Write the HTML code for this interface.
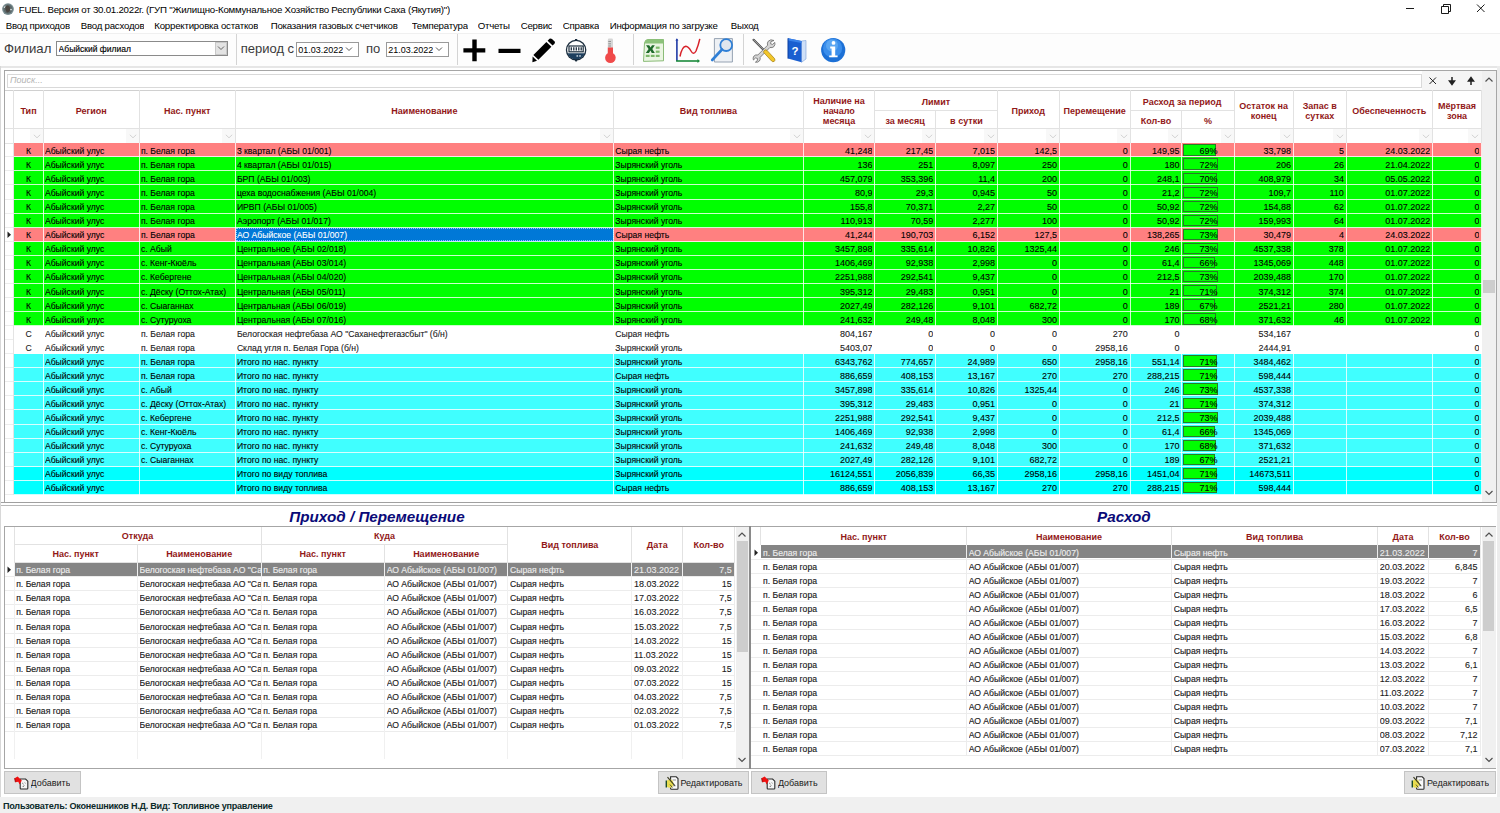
<!DOCTYPE html>
<html><head><meta charset="utf-8"><title>FUEL</title>
<style>
html,body{margin:0;padding:0;}
body{width:1500px;height:813px;overflow:hidden;position:relative;background:#fff;font-family:'Liberation Sans', sans-serif;}
div{box-sizing:content-box;}
svg{display:block}
</style></head><body>
<svg style="position:absolute;left:1px;top:2px" width="14" height="14" viewBox="0 0 14 14"><circle cx="7" cy="7.1" r="5.9" fill="#7a8e92"/><circle cx="7" cy="7.1" r="4.6" fill="#5d6a6c"/><path d="M4.5 4 Q7 3 8.6 4.6 L9.4 8 Q8.2 10.8 5.8 10.4 L4.4 7.6Z" fill="#4a4540"/><path d="M3.2 6 Q3.6 4.4 4.6 3.8" stroke="#e8f0f0" stroke-width="0.9" fill="none"/><circle cx="10" cy="7.6" r="0.8" fill="#e8f0f0"/></svg><div style="position:absolute;left:18.700px;top:4.200px;height:12.000px;line-height:12.000px;text-align:left;white-space:nowrap;overflow:hidden;font-size:9.7px;letter-spacing:-0.23px;color:#000;">FUEL. Версия от 30.01.2022г. (ГУП "Жилищно-Коммунальное Хозяйство Республики Саха (Якутия)")</div><svg style="position:absolute;left:1400px;top:0" width="100" height="18" viewBox="0 0 100 18"><path d="M6 8.5 H14" stroke="#000" stroke-width="0.9"/><path d="M41.5 6.5 H48.5 V13.5 H41.5 Z M43.5 6.5 V4.5 H50.5 V11.5 H48.5" fill="none" stroke="#000" stroke-width="0.9"/><path d="M77 4.5 L84.5 12 M84.5 4.5 L77 12" stroke="#000" stroke-width="0.9"/></svg><div style="position:absolute;left:5.700px;top:19.800px;height:12.000px;line-height:12.000px;text-align:left;white-space:nowrap;overflow:hidden;font-size:9.7px;letter-spacing:-0.23px;color:#000;">Ввод приходов</div><div style="position:absolute;left:80.700px;top:19.800px;height:12.000px;line-height:12.000px;text-align:left;white-space:nowrap;overflow:hidden;font-size:9.7px;letter-spacing:-0.23px;color:#000;">Ввод расходов</div><div style="position:absolute;left:154.300px;top:19.800px;height:12.000px;line-height:12.000px;text-align:left;white-space:nowrap;overflow:hidden;font-size:9.7px;letter-spacing:-0.23px;color:#000;">Корректировка остатков</div><div style="position:absolute;left:270.700px;top:19.800px;height:12.000px;line-height:12.000px;text-align:left;white-space:nowrap;overflow:hidden;font-size:9.7px;letter-spacing:-0.23px;color:#000;">Показания газовых счетчиков</div><div style="position:absolute;left:411.700px;top:19.800px;height:12.000px;line-height:12.000px;text-align:left;white-space:nowrap;overflow:hidden;font-size:9.7px;letter-spacing:-0.23px;color:#000;">Температура</div><div style="position:absolute;left:477.700px;top:19.800px;height:12.000px;line-height:12.000px;text-align:left;white-space:nowrap;overflow:hidden;font-size:9.7px;letter-spacing:-0.23px;color:#000;">Отчеты</div><div style="position:absolute;left:520.700px;top:19.800px;height:12.000px;line-height:12.000px;text-align:left;white-space:nowrap;overflow:hidden;font-size:9.7px;letter-spacing:-0.23px;color:#000;">Сервис</div><div style="position:absolute;left:562.700px;top:19.800px;height:12.000px;line-height:12.000px;text-align:left;white-space:nowrap;overflow:hidden;font-size:9.7px;letter-spacing:-0.23px;color:#000;">Справка</div><div style="position:absolute;left:609.700px;top:19.800px;height:12.000px;line-height:12.000px;text-align:left;white-space:nowrap;overflow:hidden;font-size:9.7px;letter-spacing:-0.23px;color:#000;">Информация по загрузке</div><div style="position:absolute;left:730.700px;top:19.800px;height:12.000px;line-height:12.000px;text-align:left;white-space:nowrap;overflow:hidden;font-size:9.7px;letter-spacing:-0.23px;color:#000;">Выход</div><div style="position:absolute;left:0.000px;top:33.000px;width:1500.000px;height:33.500px;background:#fdfdfd;border-top:1px solid #f0f0f0;box-sizing:border-box;"></div><div style="position:absolute;left:0.000px;top:65.500px;width:1500.000px;height:2.200px;background:#e6e6e6;"></div><div style="position:absolute;left:235.500px;top:34.000px;width:1.000px;height:31.000px;background:#d4d4d4;"></div><div style="position:absolute;left:456.700px;top:34.000px;width:1.000px;height:31.000px;background:#d4d4d4;"></div><div style="position:absolute;left:632.500px;top:34.000px;width:1.000px;height:31.000px;background:#d4d4d4;"></div><div style="position:absolute;left:743.200px;top:34.000px;width:1.000px;height:31.000px;background:#d4d4d4;"></div><div style="position:absolute;left:3.900px;top:42.300px;height:14.000px;line-height:14.000px;text-align:left;white-space:nowrap;overflow:hidden;font-size:13.2px;color:#3a3a3a;">Филиал</div><div style="position:absolute;left:56.400px;top:41.100px;width:172.000px;height:15.200px;border:1px solid #8a8a8a;background:#fff;box-sizing:border-box;"></div><div style="position:absolute;left:58.600px;top:42.000px;height:14.000px;line-height:14.000px;text-align:left;white-space:nowrap;overflow:hidden;font-size:8.5px;color:#000;-webkit-text-stroke:0.15px #000;">Абыйский филиал</div><div style="position:absolute;left:214.600px;top:42.300px;width:12.600px;height:13.000px;background:#e3e3e3;border:1px solid #c8c8c8;box-sizing:border-box;"></div><svg style="position:absolute;left:217px;top:45px" width="8" height="6"><path d="M1 1.5 L4 4.5 L7 1.5" fill="none" stroke="#555" stroke-width="0.9"/></svg><div style="position:absolute;left:240.700px;top:42.300px;height:14.000px;line-height:14.000px;text-align:left;white-space:nowrap;overflow:hidden;font-size:13px;color:#3a3a3a;">период с</div><div style="position:absolute;left:366.000px;top:42.300px;height:14.000px;line-height:14.000px;text-align:left;white-space:nowrap;overflow:hidden;font-size:13px;color:#3a3a3a;">по</div><div style="position:absolute;left:296.100px;top:41.600px;width:62.600px;height:15.800px;border:1px solid #9a9a9a;background:#fff;box-sizing:border-box;"></div><div style="position:absolute;left:298.300px;top:42.600px;height:14.000px;line-height:14.000px;text-align:left;white-space:nowrap;overflow:hidden;font-size:9px;color:#000;">01.03.2022</div><svg style="position:absolute;left:344.60px;top:46px" width="8" height="6"><path d="M1 1.5 L4 4.5 L7 1.5" fill="none" stroke="#444" stroke-width="0.9"/></svg><div style="position:absolute;left:386.100px;top:41.600px;width:62.600px;height:15.800px;border:1px solid #9a9a9a;background:#fff;box-sizing:border-box;"></div><div style="position:absolute;left:388.300px;top:42.600px;height:14.000px;line-height:14.000px;text-align:left;white-space:nowrap;overflow:hidden;font-size:9px;color:#000;">21.03.2022</div><svg style="position:absolute;left:434.60px;top:46px" width="8" height="6"><path d="M1 1.5 L4 4.5 L7 1.5" fill="none" stroke="#444" stroke-width="0.9"/></svg>
<svg style="position:absolute;left:463px;top:39px" width="23" height="23" viewBox="0 0 23 23"><path d="M9.3 0.6H13.7V9.2H22.3V13.6H13.7V22.2H9.3V13.6H0.4V9.2H9.3Z" fill="#000"/></svg>
<svg style="position:absolute;left:497.5px;top:47.5px" width="23" height="6" viewBox="0 0 23 6"><rect x="0.5" y="0.8" width="22" height="4.2" fill="#000"/></svg>
<svg style="position:absolute;left:532px;top:38px" width="24" height="25" viewBox="0 0 24 25"><path d="M17.5 0.8 Q18.8 0 20 1 L22.6 3.6 Q23.4 4.6 22.5 5.7 L20.6 7.6 L15.6 2.7Z" fill="#000"/><path d="M14.4 3.9 L19.4 8.8 L6.4 21.8 L1.4 16.9Z" fill="#000"/><path d="M0.6 18.4 L5 22.8 L0.4 24.2Z" fill="#000"/></svg>
<svg style="position:absolute;left:565px;top:39px" width="23" height="24" viewBox="0 0 23 24"><circle cx="11.1" cy="11.1" r="10.3" fill="#1b2d3d"/><rect x="9.9" y="-0.2" width="2.4" height="2" rx="1" fill="#1b2d3d"/><rect x="9.9" y="20.4" width="2.4" height="2.2" rx="1" fill="#1b2d3d"/><circle cx="11.1" cy="11.1" r="9" fill="#fff"/><path d="M2.6 14.2 H19.6 A9 9 0 0 1 2.6 14.2Z" fill="#1d3f5e"/><rect x="4" y="7" width="14.2" height="5.8" fill="#fff" stroke="#1b2d3d" stroke-width="1.2"/><path d="M6.3 8.2V11.6M8.8 8.2V11.6M11.3 8.2V11.6M13.8 8.2V11.6M16.2 8.2V11.6" stroke="#1b2d3d" stroke-width="1.3"/><rect x="11.5" y="16.3" width="1.6" height="1.3" fill="#e8eef2"/><rect x="14.2" y="16.3" width="1.6" height="1.3" fill="#e8eef2"/></svg>
<svg style="position:absolute;left:603px;top:37px" width="15" height="27" viewBox="0 0 15 27"><rect x="4.8" y="1.6" width="5.2" height="16" rx="1.4" fill="#d6d6d6"/><path d="M5.3 4.5H8M5.3 6.8H8M5.3 9H8" stroke="#777" stroke-width="0.7"/><rect x="4.8" y="10.5" width="5.2" height="9" fill="#ee4848"/><circle cx="7.4" cy="20.8" r="5.3" fill="#f04a4a"/></svg>
<svg style="position:absolute;left:641px;top:38px" width="25" height="25" viewBox="0 0 25 25"><path d="M3.5 5 Q4 1.6 7 1.5 L22.5 1.5 L22.5 22.8 L2.5 23.4Z" fill="#eaf5e2" stroke="#7fb46a" stroke-width="0.9"/><path d="M3.6 5.5 Q4 1.6 7 1.5 L22.5 1.5 L22.5 5.5Z" fill="#8cc27a"/><rect x="14.8" y="8.6" width="3.8" height="2.2" fill="#7cb86a"/><rect x="14.8" y="12.6" width="3.8" height="2.2" fill="#7cb86a"/><rect x="14.8" y="16.8" width="3.8" height="2.2" fill="#7cb86a"/><rect x="4.8" y="16.8" width="3.8" height="2.2" fill="#7cb86a"/><rect x="9.8" y="16.8" width="3.8" height="2.2" fill="#7cb86a"/><path d="M5 7.2 L8.2 7.2 L9.6 9.6 L11 7.2 L13.8 7.2 L11.3 11 L13.8 15 L10.8 15 L9.4 12.6 L8 15 L4.8 15 L7.6 11Z" fill="#1e6a2a"/></svg>
<svg style="position:absolute;left:675px;top:38px" width="27" height="25" viewBox="0 0 27 25"><path d="M1.9 1.5 V23" fill="none" stroke="#1f3aa6" stroke-width="1.6"/><path d="M1.1 23 H23" stroke="#1a8a3a" stroke-width="1.6"/><path d="M22.5 21 L25 23 L22.5 25Z" fill="#1a8a3a"/><path d="M0.4 2.6 L1.9 0.2 L3.4 2.6Z" fill="#1f3aa6"/><path d="M5 18.5 Q7 8.5 10.8 8.2 Q13.5 8.5 16 13 Q18.5 17.5 21 13 Q23.5 7 24.8 0.9" fill="none" stroke="#d8222a" stroke-width="1.5"/></svg>
<svg style="position:absolute;left:710px;top:38px" width="26" height="25" viewBox="0 0 26 25"><path d="M4.4 0.6 H22.4 V24 H4.4Z" fill="#eef1f5" stroke="#8a99aa" stroke-width="0.9"/><circle cx="16.2" cy="7.1" r="5.9" fill="#dfe6ee" stroke="#2f7fd6" stroke-width="1.8"/><path d="M12 11.5 L2.2 22" stroke="#2f7fd6" stroke-width="2.6" stroke-linecap="round"/></svg>
<svg style="position:absolute;left:751px;top:37px" width="27" height="27" viewBox="0 0 27 27"><path d="M2.6 2.8 L12.5 12.7" stroke="#444" stroke-width="2.2" stroke-linecap="round"/><path d="M2.6 2.8 L12.5 12.7" stroke="#bbb" stroke-width="0.9" stroke-linecap="round"/><path d="M23 3.5 Q19.5 1.8 17.3 4.2 Q15.8 6 16.6 8.2 L6.8 18 Q4.4 17.4 2.8 19.2 Q1.6 21 2.4 23 L4.6 20.9 L6.6 21.6 L6.2 23.8 L4.4 25.2 Q6.8 25.8 8.4 24 Q9.6 22.4 9.1 20.4 L18.9 10.5 Q21.2 11.2 23 9.5 Q24.5 7.6 23.8 5.4 L21.6 7.4 L19.6 6.8 L19.9 4.6Z" fill="#d4d4d4" stroke="#6a6a6a" stroke-width="0.8"/><path d="M13.2 13.6 Q14.6 12.2 16 13.4 L23.6 21.6 Q24.6 23.4 23.2 24.4 Q21.6 25.2 20.6 24 L12.8 15.6 Q12.2 14.6 13.2 13.6Z" fill="#f2c62a" stroke="#a07c10" stroke-width="0.7"/></svg>
<svg style="position:absolute;left:787px;top:37px" width="22" height="27" viewBox="0 0 22 27"><path d="M14.5 4 L19 3.5 L19 22 L14.5 25.3Z" fill="#cfe0f8" stroke="#7aa0d8" stroke-width="0.6"/><path d="M1 1.3 L14.5 4 L14.5 25.3 L1 21.6Z" fill="#1a5fd0"/><path d="M1 1.3 L14.5 4 L14.5 6 L1 3.5Z" fill="#3a82ea"/><path d="M1 1.3 V21.6" stroke="#0b3ea0" stroke-width="1"/><text x="4.6" y="17.5" font-family="Liberation Sans" font-weight="bold" font-size="11.5" fill="#fff">?</text></svg>
<svg style="position:absolute;left:820px;top:37px" width="26" height="26" viewBox="0 0 26 26"><circle cx="13.2" cy="13.1" r="12.1" fill="#1c70d6"/><circle cx="12.6" cy="11" r="9.6" fill="#3a8eec"/><circle cx="12" cy="8.6" r="6" fill="#5aa6f2"/><circle cx="13.5" cy="5.9" r="1.9" fill="#fff"/><path d="M10.2 9.6 H15.2 V18.4 H17.6 V20.2 H9.2 V18.4 H11.6 V11.4 H10.2Z" fill="#fff"/></svg>
<div style="position:absolute;left:3.500px;top:70.000px;width:1493.000px;height:432.500px;border:1px solid #a6a6a6;background:#fff;box-sizing:border-box;"></div><div style="position:absolute;left:1422.400px;top:71.000px;width:59.600px;height:19.000px;background:#f5f5f5;"></div><div style="position:absolute;left:7.200px;top:73.800px;width:1415.200px;height:13.900px;border:1px solid #d9d9d9;background:#fff;box-sizing:border-box;"></div><div style="position:absolute;left:10.000px;top:73.700px;height:13.000px;line-height:13.000px;text-align:left;white-space:nowrap;overflow:hidden;font-size:9px;font-style:italic;color:#b4b4b4;">Поиск...</div><svg style="position:absolute;left:1428px;top:76px" width="54" height="10" viewBox="0 0 54 10"><path d="M1.5 1.5 L8 8 M8 1.5 L1.5 8" stroke="#222" stroke-width="1"/><path d="M24 1 V6 M21.5 5 L24 8.5 L26.5 5Z" stroke="#222" stroke-width="1.5" fill="#222"/><path d="M43 9 V4 M40.5 5 L43 1.5 L45.5 5Z" stroke="#222" stroke-width="1.5" fill="#222"/></svg><div style="position:absolute;left:4.500px;top:90.200px;width:1477.200px;height:53.100px;background:#fff;"></div><div style="position:absolute;left:4.500px;top:89.700px;width:1477.200px;height:1.000px;background:#d0d0d0;"></div><div style="position:absolute;left:13.400px;top:90.200px;width:1.000px;height:53.100px;background:#e2e2e2;"></div><div style="position:absolute;left:42.700px;top:90.200px;width:1.000px;height:53.100px;background:#e2e2e2;"></div><div style="position:absolute;left:138.700px;top:90.200px;width:1.000px;height:53.100px;background:#e2e2e2;"></div><div style="position:absolute;left:234.700px;top:90.200px;width:1.000px;height:53.100px;background:#e2e2e2;"></div><div style="position:absolute;left:613.100px;top:90.200px;width:1.000px;height:53.100px;background:#e2e2e2;"></div><div style="position:absolute;left:802.800px;top:90.200px;width:1.000px;height:53.100px;background:#e2e2e2;"></div><div style="position:absolute;left:874.200px;top:90.200px;width:1.000px;height:53.100px;background:#e2e2e2;"></div><div style="position:absolute;left:935.000px;top:110.700px;width:1.000px;height:32.600px;background:#e2e2e2;"></div><div style="position:absolute;left:996.800px;top:90.200px;width:1.000px;height:53.100px;background:#e2e2e2;"></div><div style="position:absolute;left:1058.700px;top:90.200px;width:1.000px;height:53.100px;background:#e2e2e2;"></div><div style="position:absolute;left:1129.600px;top:90.200px;width:1.000px;height:53.100px;background:#e2e2e2;"></div><div style="position:absolute;left:1181.300px;top:110.700px;width:1.000px;height:32.600px;background:#e2e2e2;"></div><div style="position:absolute;left:1233.600px;top:90.200px;width:1.000px;height:53.100px;background:#e2e2e2;"></div><div style="position:absolute;left:1292.800px;top:90.200px;width:1.000px;height:53.100px;background:#e2e2e2;"></div><div style="position:absolute;left:1345.600px;top:90.200px;width:1.000px;height:53.100px;background:#e2e2e2;"></div><div style="position:absolute;left:1431.900px;top:90.200px;width:1.000px;height:53.100px;background:#e2e2e2;"></div><div style="position:absolute;left:1481.200px;top:90.200px;width:1.000px;height:53.100px;background:#e2e2e2;"></div><div style="position:absolute;left:4.500px;top:128.300px;width:1477.200px;height:1.000px;background:#e2e2e2;"></div><div style="position:absolute;left:4.500px;top:142.800px;width:1477.200px;height:1.000px;background:#e2e2e2;"></div><div style="position:absolute;left:874.700px;top:110.200px;width:122.600px;height:1.000px;background:#e2e2e2;"></div><div style="position:absolute;left:1130.100px;top:110.200px;width:104.000px;height:1.000px;background:#e2e2e2;"></div><div style="position:absolute;left:13.90px;top:107.15px;width:29.30px;line-height:9.9px;text-align:center;font-size:9px;font-weight:bold;color:#921818;white-space:nowrap">Тип</div><div style="position:absolute;left:43.20px;top:107.15px;width:96.00px;line-height:9.9px;text-align:center;font-size:9px;font-weight:bold;color:#921818;white-space:nowrap">Регион</div><div style="position:absolute;left:139.20px;top:107.15px;width:96.00px;line-height:9.9px;text-align:center;font-size:9px;font-weight:bold;color:#921818;white-space:nowrap">Нас. пункт</div><div style="position:absolute;left:235.20px;top:107.15px;width:378.40px;line-height:9.9px;text-align:center;font-size:9px;font-weight:bold;color:#921818;white-space:nowrap">Наименование</div><div style="position:absolute;left:613.60px;top:107.15px;width:189.70px;line-height:9.9px;text-align:center;font-size:9px;font-weight:bold;color:#921818;white-space:nowrap">Вид топлива</div><div style="position:absolute;left:803.30px;top:97.25px;width:71.40px;line-height:9.9px;text-align:center;font-size:9px;font-weight:bold;color:#921818;white-space:nowrap">Наличие на<br>начало<br>месяца</div><div style="position:absolute;left:997.30px;top:107.15px;width:61.90px;line-height:9.9px;text-align:center;font-size:9px;font-weight:bold;color:#921818;white-space:nowrap">Приход</div><div style="position:absolute;left:1059.20px;top:107.15px;width:70.90px;line-height:9.9px;text-align:center;font-size:9px;font-weight:bold;color:#921818;white-space:nowrap">Перемещение</div><div style="position:absolute;left:1234.10px;top:102.20px;width:59.20px;line-height:9.9px;text-align:center;font-size:9px;font-weight:bold;color:#921818;white-space:nowrap">Остаток на<br>конец</div><div style="position:absolute;left:1293.30px;top:102.20px;width:52.80px;line-height:9.9px;text-align:center;font-size:9px;font-weight:bold;color:#921818;white-space:nowrap">Запас в<br>сутках</div><div style="position:absolute;left:1346.10px;top:107.15px;width:86.30px;line-height:9.9px;text-align:center;font-size:9px;font-weight:bold;color:#921818;white-space:nowrap">Обеспеченность</div><div style="position:absolute;left:1432.40px;top:102.20px;width:49.30px;line-height:9.9px;text-align:center;font-size:9px;font-weight:bold;color:#921818;white-space:nowrap">Мёртвая<br>зона</div><div style="position:absolute;left:874.70px;top:98.10px;width:122.60px;line-height:9.9px;text-align:center;font-size:9px;font-weight:bold;color:#921818;white-space:nowrap">Лимит</div><div style="position:absolute;left:874.70px;top:117.40px;width:60.80px;line-height:9.9px;text-align:center;font-size:9px;font-weight:bold;color:#921818;white-space:nowrap">за месяц</div><div style="position:absolute;left:935.50px;top:117.40px;width:61.80px;line-height:9.9px;text-align:center;font-size:9px;font-weight:bold;color:#921818;white-space:nowrap">в сутки</div><div style="position:absolute;left:1130.10px;top:98.10px;width:104.00px;line-height:9.9px;text-align:center;font-size:9px;font-weight:bold;color:#921818;white-space:nowrap">Расход за период</div><div style="position:absolute;left:1130.10px;top:117.40px;width:51.70px;line-height:9.9px;text-align:center;font-size:9px;font-weight:bold;color:#921818;white-space:nowrap">Кол-во</div><div style="position:absolute;left:1181.80px;top:117.40px;width:52.30px;line-height:9.9px;text-align:center;font-size:9px;font-weight:bold;color:#921818;white-space:nowrap">%</div><div style="position:absolute;left:29.700px;top:129.300px;width:13.000px;height:13.500px;background:#f8f8f8;"></div><svg style="position:absolute;left:32.70px;top:133.80px" width="8" height="5"><path d="M0.8 0.8 L4 3.8 L7.2 0.8" fill="none" stroke="#cfcfcf" stroke-width="0.9"/></svg><div style="position:absolute;left:125.700px;top:129.300px;width:13.000px;height:13.500px;background:#f8f8f8;"></div><svg style="position:absolute;left:128.70px;top:133.80px" width="8" height="5"><path d="M0.8 0.8 L4 3.8 L7.2 0.8" fill="none" stroke="#cfcfcf" stroke-width="0.9"/></svg><div style="position:absolute;left:221.700px;top:129.300px;width:13.000px;height:13.500px;background:#f8f8f8;"></div><svg style="position:absolute;left:224.70px;top:133.80px" width="8" height="5"><path d="M0.8 0.8 L4 3.8 L7.2 0.8" fill="none" stroke="#cfcfcf" stroke-width="0.9"/></svg><div style="position:absolute;left:600.100px;top:129.300px;width:13.000px;height:13.500px;background:#f8f8f8;"></div><svg style="position:absolute;left:603.10px;top:133.80px" width="8" height="5"><path d="M0.8 0.8 L4 3.8 L7.2 0.8" fill="none" stroke="#cfcfcf" stroke-width="0.9"/></svg><div style="position:absolute;left:789.800px;top:129.300px;width:13.000px;height:13.500px;background:#f8f8f8;"></div><svg style="position:absolute;left:792.80px;top:133.80px" width="8" height="5"><path d="M0.8 0.8 L4 3.8 L7.2 0.8" fill="none" stroke="#cfcfcf" stroke-width="0.9"/></svg><div style="position:absolute;left:861.200px;top:129.300px;width:13.000px;height:13.500px;background:#f8f8f8;"></div><svg style="position:absolute;left:864.20px;top:133.80px" width="8" height="5"><path d="M0.8 0.8 L4 3.8 L7.2 0.8" fill="none" stroke="#cfcfcf" stroke-width="0.9"/></svg><div style="position:absolute;left:922.000px;top:129.300px;width:13.000px;height:13.500px;background:#f8f8f8;"></div><svg style="position:absolute;left:925.00px;top:133.80px" width="8" height="5"><path d="M0.8 0.8 L4 3.8 L7.2 0.8" fill="none" stroke="#cfcfcf" stroke-width="0.9"/></svg><div style="position:absolute;left:983.800px;top:129.300px;width:13.000px;height:13.500px;background:#f8f8f8;"></div><svg style="position:absolute;left:986.80px;top:133.80px" width="8" height="5"><path d="M0.8 0.8 L4 3.8 L7.2 0.8" fill="none" stroke="#cfcfcf" stroke-width="0.9"/></svg><div style="position:absolute;left:1045.700px;top:129.300px;width:13.000px;height:13.500px;background:#f8f8f8;"></div><svg style="position:absolute;left:1048.70px;top:133.80px" width="8" height="5"><path d="M0.8 0.8 L4 3.8 L7.2 0.8" fill="none" stroke="#cfcfcf" stroke-width="0.9"/></svg><div style="position:absolute;left:1116.600px;top:129.300px;width:13.000px;height:13.500px;background:#f8f8f8;"></div><svg style="position:absolute;left:1119.60px;top:133.80px" width="8" height="5"><path d="M0.8 0.8 L4 3.8 L7.2 0.8" fill="none" stroke="#cfcfcf" stroke-width="0.9"/></svg><div style="position:absolute;left:1168.300px;top:129.300px;width:13.000px;height:13.500px;background:#f8f8f8;"></div><svg style="position:absolute;left:1171.30px;top:133.80px" width="8" height="5"><path d="M0.8 0.8 L4 3.8 L7.2 0.8" fill="none" stroke="#cfcfcf" stroke-width="0.9"/></svg><div style="position:absolute;left:1220.600px;top:129.300px;width:13.000px;height:13.500px;background:#f8f8f8;"></div><svg style="position:absolute;left:1223.60px;top:133.80px" width="8" height="5"><path d="M0.8 0.8 L4 3.8 L7.2 0.8" fill="none" stroke="#cfcfcf" stroke-width="0.9"/></svg><div style="position:absolute;left:1279.800px;top:129.300px;width:13.000px;height:13.500px;background:#f8f8f8;"></div><svg style="position:absolute;left:1282.80px;top:133.80px" width="8" height="5"><path d="M0.8 0.8 L4 3.8 L7.2 0.8" fill="none" stroke="#cfcfcf" stroke-width="0.9"/></svg><div style="position:absolute;left:1332.600px;top:129.300px;width:13.000px;height:13.500px;background:#f8f8f8;"></div><svg style="position:absolute;left:1335.60px;top:133.80px" width="8" height="5"><path d="M0.8 0.8 L4 3.8 L7.2 0.8" fill="none" stroke="#cfcfcf" stroke-width="0.9"/></svg><div style="position:absolute;left:1418.900px;top:129.300px;width:13.000px;height:13.500px;background:#f8f8f8;"></div><svg style="position:absolute;left:1421.90px;top:133.80px" width="8" height="5"><path d="M0.8 0.8 L4 3.8 L7.2 0.8" fill="none" stroke="#cfcfcf" stroke-width="0.9"/></svg><div style="position:absolute;left:1468.200px;top:129.300px;width:13.000px;height:13.500px;background:#f8f8f8;"></div><svg style="position:absolute;left:1471.20px;top:133.80px" width="8" height="5"><path d="M0.8 0.8 L4 3.8 L7.2 0.8" fill="none" stroke="#cfcfcf" stroke-width="0.9"/></svg><div style="position:absolute;left:13.900px;top:143.300px;width:1467.800px;height:14.062px;background:#ff8080;"></div><div style="position:absolute;left:13.900px;top:144.900px;width:29.300px;height:12.562px;line-height:12.562px;text-align:center;white-space:nowrap;overflow:hidden;font-size:8.65px;color:#000;-webkit-text-stroke:0.1px currentColor;color:#000;">К</div><div style="position:absolute;left:44.900px;top:144.900px;width:93.000px;height:12.562px;line-height:12.562px;text-align:left;white-space:nowrap;overflow:hidden;font-size:8.65px;color:#000;-webkit-text-stroke:0.1px currentColor;color:#000;">Абыйский улус</div><div style="position:absolute;left:140.900px;top:144.900px;width:93.000px;height:12.562px;line-height:12.562px;text-align:left;white-space:nowrap;overflow:hidden;font-size:8.65px;color:#000;-webkit-text-stroke:0.1px currentColor;color:#000;">п. Белая гора</div><div style="position:absolute;left:236.900px;top:144.900px;width:375.400px;height:12.562px;line-height:12.562px;text-align:left;white-space:nowrap;overflow:hidden;font-size:8.65px;color:#000;-webkit-text-stroke:0.1px currentColor;color:#000;">3 квартал (АБЫ 01/001)</div><div style="position:absolute;left:615.300px;top:144.900px;width:186.700px;height:12.562px;line-height:12.562px;text-align:left;white-space:nowrap;overflow:hidden;font-size:8.65px;color:#000;-webkit-text-stroke:0.1px currentColor;color:#000;">Сырая нефть</div><div style="position:absolute;left:804.300px;top:144.900px;width:68.200px;height:12.562px;line-height:12.562px;text-align:right;white-space:nowrap;overflow:hidden;font-size:9px;color:#000;-webkit-text-stroke:0.1px currentColor;color:#000;">41,248</div><div style="position:absolute;left:875.700px;top:144.900px;width:57.600px;height:12.562px;line-height:12.562px;text-align:right;white-space:nowrap;overflow:hidden;font-size:9px;color:#000;-webkit-text-stroke:0.1px currentColor;color:#000;">217,45</div><div style="position:absolute;left:936.500px;top:144.900px;width:58.600px;height:12.562px;line-height:12.562px;text-align:right;white-space:nowrap;overflow:hidden;font-size:9px;color:#000;-webkit-text-stroke:0.1px currentColor;color:#000;">7,015</div><div style="position:absolute;left:998.300px;top:144.900px;width:58.700px;height:12.562px;line-height:12.562px;text-align:right;white-space:nowrap;overflow:hidden;font-size:9px;color:#000;-webkit-text-stroke:0.1px currentColor;color:#000;">142,5</div><div style="position:absolute;left:1060.200px;top:144.900px;width:67.700px;height:12.562px;line-height:12.562px;text-align:right;white-space:nowrap;overflow:hidden;font-size:9px;color:#000;-webkit-text-stroke:0.1px currentColor;color:#000;">0</div><div style="position:absolute;left:1131.100px;top:144.900px;width:48.500px;height:12.562px;line-height:12.562px;text-align:right;white-space:nowrap;overflow:hidden;font-size:9px;color:#000;-webkit-text-stroke:0.1px currentColor;color:#000;">149,95</div><div style="position:absolute;left:1183.100px;top:144.400px;width:32.982px;height:11.463px;background:#00ff00;border:1px solid #287a28;box-sizing:border-box;"></div><div style="position:absolute;left:1183.800px;top:144.900px;width:49.300px;height:12.562px;line-height:12.562px;text-align:center;white-space:nowrap;overflow:hidden;font-size:9px;color:#000;-webkit-text-stroke:0.1px currentColor;">69%</div><div style="position:absolute;left:1235.100px;top:144.900px;width:56.000px;height:12.562px;line-height:12.562px;text-align:right;white-space:nowrap;overflow:hidden;font-size:9px;color:#000;-webkit-text-stroke:0.1px currentColor;color:#000;">33,798</div><div style="position:absolute;left:1294.300px;top:144.900px;width:49.600px;height:12.562px;line-height:12.562px;text-align:right;white-space:nowrap;overflow:hidden;font-size:9px;color:#000;-webkit-text-stroke:0.1px currentColor;color:#000;">5</div><div style="position:absolute;left:1347.100px;top:144.900px;width:83.100px;height:12.562px;line-height:12.562px;text-align:right;white-space:nowrap;overflow:hidden;font-size:9px;color:#000;-webkit-text-stroke:0.1px currentColor;color:#000;">24.03.2022</div><div style="position:absolute;left:1433.400px;top:144.900px;width:46.100px;height:12.562px;line-height:12.562px;text-align:right;white-space:nowrap;overflow:hidden;font-size:9px;color:#000;-webkit-text-stroke:0.1px currentColor;color:#000;">0</div><div style="position:absolute;left:13.900px;top:156.363px;width:1467.800px;height:1.000px;background:rgba(255,255,255,0.8);"></div><div style="position:absolute;left:4.500px;top:156.363px;width:9.400px;height:1.000px;background:#ececec;"></div><div style="position:absolute;left:13.900px;top:157.363px;width:1467.800px;height:14.062px;background:#00ff00;"></div><div style="position:absolute;left:13.900px;top:158.963px;width:29.300px;height:12.562px;line-height:12.562px;text-align:center;white-space:nowrap;overflow:hidden;font-size:8.65px;color:#000;-webkit-text-stroke:0.1px currentColor;color:#000;">К</div><div style="position:absolute;left:44.900px;top:158.963px;width:93.000px;height:12.562px;line-height:12.562px;text-align:left;white-space:nowrap;overflow:hidden;font-size:8.65px;color:#000;-webkit-text-stroke:0.1px currentColor;color:#000;">Абыйский улус</div><div style="position:absolute;left:140.900px;top:158.963px;width:93.000px;height:12.562px;line-height:12.562px;text-align:left;white-space:nowrap;overflow:hidden;font-size:8.65px;color:#000;-webkit-text-stroke:0.1px currentColor;color:#000;">п. Белая гора</div><div style="position:absolute;left:236.900px;top:158.963px;width:375.400px;height:12.562px;line-height:12.562px;text-align:left;white-space:nowrap;overflow:hidden;font-size:8.65px;color:#000;-webkit-text-stroke:0.1px currentColor;color:#000;">4 квартал (АБЫ 01/015)</div><div style="position:absolute;left:615.300px;top:158.963px;width:186.700px;height:12.562px;line-height:12.562px;text-align:left;white-space:nowrap;overflow:hidden;font-size:8.65px;color:#000;-webkit-text-stroke:0.1px currentColor;color:#000;">Зырянский уголь</div><div style="position:absolute;left:804.300px;top:158.963px;width:68.200px;height:12.562px;line-height:12.562px;text-align:right;white-space:nowrap;overflow:hidden;font-size:9px;color:#000;-webkit-text-stroke:0.1px currentColor;color:#000;">136</div><div style="position:absolute;left:875.700px;top:158.963px;width:57.600px;height:12.562px;line-height:12.562px;text-align:right;white-space:nowrap;overflow:hidden;font-size:9px;color:#000;-webkit-text-stroke:0.1px currentColor;color:#000;">251</div><div style="position:absolute;left:936.500px;top:158.963px;width:58.600px;height:12.562px;line-height:12.562px;text-align:right;white-space:nowrap;overflow:hidden;font-size:9px;color:#000;-webkit-text-stroke:0.1px currentColor;color:#000;">8,097</div><div style="position:absolute;left:998.300px;top:158.963px;width:58.700px;height:12.562px;line-height:12.562px;text-align:right;white-space:nowrap;overflow:hidden;font-size:9px;color:#000;-webkit-text-stroke:0.1px currentColor;color:#000;">250</div><div style="position:absolute;left:1060.200px;top:158.963px;width:67.700px;height:12.562px;line-height:12.562px;text-align:right;white-space:nowrap;overflow:hidden;font-size:9px;color:#000;-webkit-text-stroke:0.1px currentColor;color:#000;">0</div><div style="position:absolute;left:1131.100px;top:158.963px;width:48.500px;height:12.562px;line-height:12.562px;text-align:right;white-space:nowrap;overflow:hidden;font-size:9px;color:#000;-webkit-text-stroke:0.1px currentColor;color:#000;">180</div><div style="position:absolute;left:1183.100px;top:158.463px;width:34.416px;height:11.463px;background:#00ff00;border:1px solid #287a28;box-sizing:border-box;"></div><div style="position:absolute;left:1183.800px;top:158.963px;width:49.300px;height:12.562px;line-height:12.562px;text-align:center;white-space:nowrap;overflow:hidden;font-size:9px;color:#000;-webkit-text-stroke:0.1px currentColor;">72%</div><div style="position:absolute;left:1235.100px;top:158.963px;width:56.000px;height:12.562px;line-height:12.562px;text-align:right;white-space:nowrap;overflow:hidden;font-size:9px;color:#000;-webkit-text-stroke:0.1px currentColor;color:#000;">206</div><div style="position:absolute;left:1294.300px;top:158.963px;width:49.600px;height:12.562px;line-height:12.562px;text-align:right;white-space:nowrap;overflow:hidden;font-size:9px;color:#000;-webkit-text-stroke:0.1px currentColor;color:#000;">26</div><div style="position:absolute;left:1347.100px;top:158.963px;width:83.100px;height:12.562px;line-height:12.562px;text-align:right;white-space:nowrap;overflow:hidden;font-size:9px;color:#000;-webkit-text-stroke:0.1px currentColor;color:#000;">21.04.2022</div><div style="position:absolute;left:1433.400px;top:158.963px;width:46.100px;height:12.562px;line-height:12.562px;text-align:right;white-space:nowrap;overflow:hidden;font-size:9px;color:#000;-webkit-text-stroke:0.1px currentColor;color:#000;">0</div><div style="position:absolute;left:13.900px;top:170.425px;width:1467.800px;height:1.000px;background:rgba(255,255,255,0.8);"></div><div style="position:absolute;left:4.500px;top:170.425px;width:9.400px;height:1.000px;background:#ececec;"></div><div style="position:absolute;left:13.900px;top:171.425px;width:1467.800px;height:14.062px;background:#00ff00;"></div><div style="position:absolute;left:13.900px;top:173.025px;width:29.300px;height:12.562px;line-height:12.562px;text-align:center;white-space:nowrap;overflow:hidden;font-size:8.65px;color:#000;-webkit-text-stroke:0.1px currentColor;color:#000;">К</div><div style="position:absolute;left:44.900px;top:173.025px;width:93.000px;height:12.562px;line-height:12.562px;text-align:left;white-space:nowrap;overflow:hidden;font-size:8.65px;color:#000;-webkit-text-stroke:0.1px currentColor;color:#000;">Абыйский улус</div><div style="position:absolute;left:140.900px;top:173.025px;width:93.000px;height:12.562px;line-height:12.562px;text-align:left;white-space:nowrap;overflow:hidden;font-size:8.65px;color:#000;-webkit-text-stroke:0.1px currentColor;color:#000;">п. Белая гора</div><div style="position:absolute;left:236.900px;top:173.025px;width:375.400px;height:12.562px;line-height:12.562px;text-align:left;white-space:nowrap;overflow:hidden;font-size:8.65px;color:#000;-webkit-text-stroke:0.1px currentColor;color:#000;">БРП (АБЫ 01/003)</div><div style="position:absolute;left:615.300px;top:173.025px;width:186.700px;height:12.562px;line-height:12.562px;text-align:left;white-space:nowrap;overflow:hidden;font-size:8.65px;color:#000;-webkit-text-stroke:0.1px currentColor;color:#000;">Зырянский уголь</div><div style="position:absolute;left:804.300px;top:173.025px;width:68.200px;height:12.562px;line-height:12.562px;text-align:right;white-space:nowrap;overflow:hidden;font-size:9px;color:#000;-webkit-text-stroke:0.1px currentColor;color:#000;">457,079</div><div style="position:absolute;left:875.700px;top:173.025px;width:57.600px;height:12.562px;line-height:12.562px;text-align:right;white-space:nowrap;overflow:hidden;font-size:9px;color:#000;-webkit-text-stroke:0.1px currentColor;color:#000;">353,396</div><div style="position:absolute;left:936.500px;top:173.025px;width:58.600px;height:12.562px;line-height:12.562px;text-align:right;white-space:nowrap;overflow:hidden;font-size:9px;color:#000;-webkit-text-stroke:0.1px currentColor;color:#000;">11,4</div><div style="position:absolute;left:998.300px;top:173.025px;width:58.700px;height:12.562px;line-height:12.562px;text-align:right;white-space:nowrap;overflow:hidden;font-size:9px;color:#000;-webkit-text-stroke:0.1px currentColor;color:#000;">200</div><div style="position:absolute;left:1060.200px;top:173.025px;width:67.700px;height:12.562px;line-height:12.562px;text-align:right;white-space:nowrap;overflow:hidden;font-size:9px;color:#000;-webkit-text-stroke:0.1px currentColor;color:#000;">0</div><div style="position:absolute;left:1131.100px;top:173.025px;width:48.500px;height:12.562px;line-height:12.562px;text-align:right;white-space:nowrap;overflow:hidden;font-size:9px;color:#000;-webkit-text-stroke:0.1px currentColor;color:#000;">248,1</div><div style="position:absolute;left:1183.100px;top:172.525px;width:33.460px;height:11.463px;background:#00ff00;border:1px solid #287a28;box-sizing:border-box;"></div><div style="position:absolute;left:1183.800px;top:173.025px;width:49.300px;height:12.562px;line-height:12.562px;text-align:center;white-space:nowrap;overflow:hidden;font-size:9px;color:#000;-webkit-text-stroke:0.1px currentColor;">70%</div><div style="position:absolute;left:1235.100px;top:173.025px;width:56.000px;height:12.562px;line-height:12.562px;text-align:right;white-space:nowrap;overflow:hidden;font-size:9px;color:#000;-webkit-text-stroke:0.1px currentColor;color:#000;">408,979</div><div style="position:absolute;left:1294.300px;top:173.025px;width:49.600px;height:12.562px;line-height:12.562px;text-align:right;white-space:nowrap;overflow:hidden;font-size:9px;color:#000;-webkit-text-stroke:0.1px currentColor;color:#000;">34</div><div style="position:absolute;left:1347.100px;top:173.025px;width:83.100px;height:12.562px;line-height:12.562px;text-align:right;white-space:nowrap;overflow:hidden;font-size:9px;color:#000;-webkit-text-stroke:0.1px currentColor;color:#000;">05.05.2022</div><div style="position:absolute;left:1433.400px;top:173.025px;width:46.100px;height:12.562px;line-height:12.562px;text-align:right;white-space:nowrap;overflow:hidden;font-size:9px;color:#000;-webkit-text-stroke:0.1px currentColor;color:#000;">0</div><div style="position:absolute;left:13.900px;top:184.488px;width:1467.800px;height:1.000px;background:rgba(255,255,255,0.8);"></div><div style="position:absolute;left:4.500px;top:184.488px;width:9.400px;height:1.000px;background:#ececec;"></div><div style="position:absolute;left:13.900px;top:185.488px;width:1467.800px;height:14.062px;background:#00ff00;"></div><div style="position:absolute;left:13.900px;top:187.088px;width:29.300px;height:12.562px;line-height:12.562px;text-align:center;white-space:nowrap;overflow:hidden;font-size:8.65px;color:#000;-webkit-text-stroke:0.1px currentColor;color:#000;">К</div><div style="position:absolute;left:44.900px;top:187.088px;width:93.000px;height:12.562px;line-height:12.562px;text-align:left;white-space:nowrap;overflow:hidden;font-size:8.65px;color:#000;-webkit-text-stroke:0.1px currentColor;color:#000;">Абыйский улус</div><div style="position:absolute;left:140.900px;top:187.088px;width:93.000px;height:12.562px;line-height:12.562px;text-align:left;white-space:nowrap;overflow:hidden;font-size:8.65px;color:#000;-webkit-text-stroke:0.1px currentColor;color:#000;">п. Белая гора</div><div style="position:absolute;left:236.900px;top:187.088px;width:375.400px;height:12.562px;line-height:12.562px;text-align:left;white-space:nowrap;overflow:hidden;font-size:8.65px;color:#000;-webkit-text-stroke:0.1px currentColor;color:#000;">цеха водоснабжения (АБЫ 01/004)</div><div style="position:absolute;left:615.300px;top:187.088px;width:186.700px;height:12.562px;line-height:12.562px;text-align:left;white-space:nowrap;overflow:hidden;font-size:8.65px;color:#000;-webkit-text-stroke:0.1px currentColor;color:#000;">Зырянский уголь</div><div style="position:absolute;left:804.300px;top:187.088px;width:68.200px;height:12.562px;line-height:12.562px;text-align:right;white-space:nowrap;overflow:hidden;font-size:9px;color:#000;-webkit-text-stroke:0.1px currentColor;color:#000;">80,9</div><div style="position:absolute;left:875.700px;top:187.088px;width:57.600px;height:12.562px;line-height:12.562px;text-align:right;white-space:nowrap;overflow:hidden;font-size:9px;color:#000;-webkit-text-stroke:0.1px currentColor;color:#000;">29,3</div><div style="position:absolute;left:936.500px;top:187.088px;width:58.600px;height:12.562px;line-height:12.562px;text-align:right;white-space:nowrap;overflow:hidden;font-size:9px;color:#000;-webkit-text-stroke:0.1px currentColor;color:#000;">0,945</div><div style="position:absolute;left:998.300px;top:187.088px;width:58.700px;height:12.562px;line-height:12.562px;text-align:right;white-space:nowrap;overflow:hidden;font-size:9px;color:#000;-webkit-text-stroke:0.1px currentColor;color:#000;">50</div><div style="position:absolute;left:1060.200px;top:187.088px;width:67.700px;height:12.562px;line-height:12.562px;text-align:right;white-space:nowrap;overflow:hidden;font-size:9px;color:#000;-webkit-text-stroke:0.1px currentColor;color:#000;">0</div><div style="position:absolute;left:1131.100px;top:187.088px;width:48.500px;height:12.562px;line-height:12.562px;text-align:right;white-space:nowrap;overflow:hidden;font-size:9px;color:#000;-webkit-text-stroke:0.1px currentColor;color:#000;">21,2</div><div style="position:absolute;left:1183.100px;top:186.588px;width:34.416px;height:11.463px;background:#00ff00;border:1px solid #287a28;box-sizing:border-box;"></div><div style="position:absolute;left:1183.800px;top:187.088px;width:49.300px;height:12.562px;line-height:12.562px;text-align:center;white-space:nowrap;overflow:hidden;font-size:9px;color:#000;-webkit-text-stroke:0.1px currentColor;">72%</div><div style="position:absolute;left:1235.100px;top:187.088px;width:56.000px;height:12.562px;line-height:12.562px;text-align:right;white-space:nowrap;overflow:hidden;font-size:9px;color:#000;-webkit-text-stroke:0.1px currentColor;color:#000;">109,7</div><div style="position:absolute;left:1294.300px;top:187.088px;width:49.600px;height:12.562px;line-height:12.562px;text-align:right;white-space:nowrap;overflow:hidden;font-size:9px;color:#000;-webkit-text-stroke:0.1px currentColor;color:#000;">110</div><div style="position:absolute;left:1347.100px;top:187.088px;width:83.100px;height:12.562px;line-height:12.562px;text-align:right;white-space:nowrap;overflow:hidden;font-size:9px;color:#000;-webkit-text-stroke:0.1px currentColor;color:#000;">01.07.2022</div><div style="position:absolute;left:1433.400px;top:187.088px;width:46.100px;height:12.562px;line-height:12.562px;text-align:right;white-space:nowrap;overflow:hidden;font-size:9px;color:#000;-webkit-text-stroke:0.1px currentColor;color:#000;">0</div><div style="position:absolute;left:13.900px;top:198.550px;width:1467.800px;height:1.000px;background:rgba(255,255,255,0.8);"></div><div style="position:absolute;left:4.500px;top:198.550px;width:9.400px;height:1.000px;background:#ececec;"></div><div style="position:absolute;left:13.900px;top:199.550px;width:1467.800px;height:14.062px;background:#00ff00;"></div><div style="position:absolute;left:13.900px;top:201.150px;width:29.300px;height:12.562px;line-height:12.562px;text-align:center;white-space:nowrap;overflow:hidden;font-size:8.65px;color:#000;-webkit-text-stroke:0.1px currentColor;color:#000;">К</div><div style="position:absolute;left:44.900px;top:201.150px;width:93.000px;height:12.562px;line-height:12.562px;text-align:left;white-space:nowrap;overflow:hidden;font-size:8.65px;color:#000;-webkit-text-stroke:0.1px currentColor;color:#000;">Абыйский улус</div><div style="position:absolute;left:140.900px;top:201.150px;width:93.000px;height:12.562px;line-height:12.562px;text-align:left;white-space:nowrap;overflow:hidden;font-size:8.65px;color:#000;-webkit-text-stroke:0.1px currentColor;color:#000;">п. Белая гора</div><div style="position:absolute;left:236.900px;top:201.150px;width:375.400px;height:12.562px;line-height:12.562px;text-align:left;white-space:nowrap;overflow:hidden;font-size:8.65px;color:#000;-webkit-text-stroke:0.1px currentColor;color:#000;">ИРВП (АБЫ 01/005)</div><div style="position:absolute;left:615.300px;top:201.150px;width:186.700px;height:12.562px;line-height:12.562px;text-align:left;white-space:nowrap;overflow:hidden;font-size:8.65px;color:#000;-webkit-text-stroke:0.1px currentColor;color:#000;">Зырянский уголь</div><div style="position:absolute;left:804.300px;top:201.150px;width:68.200px;height:12.562px;line-height:12.562px;text-align:right;white-space:nowrap;overflow:hidden;font-size:9px;color:#000;-webkit-text-stroke:0.1px currentColor;color:#000;">155,8</div><div style="position:absolute;left:875.700px;top:201.150px;width:57.600px;height:12.562px;line-height:12.562px;text-align:right;white-space:nowrap;overflow:hidden;font-size:9px;color:#000;-webkit-text-stroke:0.1px currentColor;color:#000;">70,371</div><div style="position:absolute;left:936.500px;top:201.150px;width:58.600px;height:12.562px;line-height:12.562px;text-align:right;white-space:nowrap;overflow:hidden;font-size:9px;color:#000;-webkit-text-stroke:0.1px currentColor;color:#000;">2,27</div><div style="position:absolute;left:998.300px;top:201.150px;width:58.700px;height:12.562px;line-height:12.562px;text-align:right;white-space:nowrap;overflow:hidden;font-size:9px;color:#000;-webkit-text-stroke:0.1px currentColor;color:#000;">50</div><div style="position:absolute;left:1060.200px;top:201.150px;width:67.700px;height:12.562px;line-height:12.562px;text-align:right;white-space:nowrap;overflow:hidden;font-size:9px;color:#000;-webkit-text-stroke:0.1px currentColor;color:#000;">0</div><div style="position:absolute;left:1131.100px;top:201.150px;width:48.500px;height:12.562px;line-height:12.562px;text-align:right;white-space:nowrap;overflow:hidden;font-size:9px;color:#000;-webkit-text-stroke:0.1px currentColor;color:#000;">50,92</div><div style="position:absolute;left:1183.100px;top:200.650px;width:34.416px;height:11.463px;background:#00ff00;border:1px solid #287a28;box-sizing:border-box;"></div><div style="position:absolute;left:1183.800px;top:201.150px;width:49.300px;height:12.562px;line-height:12.562px;text-align:center;white-space:nowrap;overflow:hidden;font-size:9px;color:#000;-webkit-text-stroke:0.1px currentColor;">72%</div><div style="position:absolute;left:1235.100px;top:201.150px;width:56.000px;height:12.562px;line-height:12.562px;text-align:right;white-space:nowrap;overflow:hidden;font-size:9px;color:#000;-webkit-text-stroke:0.1px currentColor;color:#000;">154,88</div><div style="position:absolute;left:1294.300px;top:201.150px;width:49.600px;height:12.562px;line-height:12.562px;text-align:right;white-space:nowrap;overflow:hidden;font-size:9px;color:#000;-webkit-text-stroke:0.1px currentColor;color:#000;">62</div><div style="position:absolute;left:1347.100px;top:201.150px;width:83.100px;height:12.562px;line-height:12.562px;text-align:right;white-space:nowrap;overflow:hidden;font-size:9px;color:#000;-webkit-text-stroke:0.1px currentColor;color:#000;">01.07.2022</div><div style="position:absolute;left:1433.400px;top:201.150px;width:46.100px;height:12.562px;line-height:12.562px;text-align:right;white-space:nowrap;overflow:hidden;font-size:9px;color:#000;-webkit-text-stroke:0.1px currentColor;color:#000;">0</div><div style="position:absolute;left:13.900px;top:212.613px;width:1467.800px;height:1.000px;background:rgba(255,255,255,0.8);"></div><div style="position:absolute;left:4.500px;top:212.613px;width:9.400px;height:1.000px;background:#ececec;"></div><div style="position:absolute;left:13.900px;top:213.613px;width:1467.800px;height:14.062px;background:#00ff00;"></div><div style="position:absolute;left:13.900px;top:215.213px;width:29.300px;height:12.562px;line-height:12.562px;text-align:center;white-space:nowrap;overflow:hidden;font-size:8.65px;color:#000;-webkit-text-stroke:0.1px currentColor;color:#000;">К</div><div style="position:absolute;left:44.900px;top:215.213px;width:93.000px;height:12.562px;line-height:12.562px;text-align:left;white-space:nowrap;overflow:hidden;font-size:8.65px;color:#000;-webkit-text-stroke:0.1px currentColor;color:#000;">Абыйский улус</div><div style="position:absolute;left:140.900px;top:215.213px;width:93.000px;height:12.562px;line-height:12.562px;text-align:left;white-space:nowrap;overflow:hidden;font-size:8.65px;color:#000;-webkit-text-stroke:0.1px currentColor;color:#000;">п. Белая гора</div><div style="position:absolute;left:236.900px;top:215.213px;width:375.400px;height:12.562px;line-height:12.562px;text-align:left;white-space:nowrap;overflow:hidden;font-size:8.65px;color:#000;-webkit-text-stroke:0.1px currentColor;color:#000;">Аэропорт (АБЫ 01/017)</div><div style="position:absolute;left:615.300px;top:215.213px;width:186.700px;height:12.562px;line-height:12.562px;text-align:left;white-space:nowrap;overflow:hidden;font-size:8.65px;color:#000;-webkit-text-stroke:0.1px currentColor;color:#000;">Зырянский уголь</div><div style="position:absolute;left:804.300px;top:215.213px;width:68.200px;height:12.562px;line-height:12.562px;text-align:right;white-space:nowrap;overflow:hidden;font-size:9px;color:#000;-webkit-text-stroke:0.1px currentColor;color:#000;">110,913</div><div style="position:absolute;left:875.700px;top:215.213px;width:57.600px;height:12.562px;line-height:12.562px;text-align:right;white-space:nowrap;overflow:hidden;font-size:9px;color:#000;-webkit-text-stroke:0.1px currentColor;color:#000;">70,59</div><div style="position:absolute;left:936.500px;top:215.213px;width:58.600px;height:12.562px;line-height:12.562px;text-align:right;white-space:nowrap;overflow:hidden;font-size:9px;color:#000;-webkit-text-stroke:0.1px currentColor;color:#000;">2,277</div><div style="position:absolute;left:998.300px;top:215.213px;width:58.700px;height:12.562px;line-height:12.562px;text-align:right;white-space:nowrap;overflow:hidden;font-size:9px;color:#000;-webkit-text-stroke:0.1px currentColor;color:#000;">100</div><div style="position:absolute;left:1060.200px;top:215.213px;width:67.700px;height:12.562px;line-height:12.562px;text-align:right;white-space:nowrap;overflow:hidden;font-size:9px;color:#000;-webkit-text-stroke:0.1px currentColor;color:#000;">0</div><div style="position:absolute;left:1131.100px;top:215.213px;width:48.500px;height:12.562px;line-height:12.562px;text-align:right;white-space:nowrap;overflow:hidden;font-size:9px;color:#000;-webkit-text-stroke:0.1px currentColor;color:#000;">50,92</div><div style="position:absolute;left:1183.100px;top:214.713px;width:34.416px;height:11.463px;background:#00ff00;border:1px solid #287a28;box-sizing:border-box;"></div><div style="position:absolute;left:1183.800px;top:215.213px;width:49.300px;height:12.562px;line-height:12.562px;text-align:center;white-space:nowrap;overflow:hidden;font-size:9px;color:#000;-webkit-text-stroke:0.1px currentColor;">72%</div><div style="position:absolute;left:1235.100px;top:215.213px;width:56.000px;height:12.562px;line-height:12.562px;text-align:right;white-space:nowrap;overflow:hidden;font-size:9px;color:#000;-webkit-text-stroke:0.1px currentColor;color:#000;">159,993</div><div style="position:absolute;left:1294.300px;top:215.213px;width:49.600px;height:12.562px;line-height:12.562px;text-align:right;white-space:nowrap;overflow:hidden;font-size:9px;color:#000;-webkit-text-stroke:0.1px currentColor;color:#000;">64</div><div style="position:absolute;left:1347.100px;top:215.213px;width:83.100px;height:12.562px;line-height:12.562px;text-align:right;white-space:nowrap;overflow:hidden;font-size:9px;color:#000;-webkit-text-stroke:0.1px currentColor;color:#000;">01.07.2022</div><div style="position:absolute;left:1433.400px;top:215.213px;width:46.100px;height:12.562px;line-height:12.562px;text-align:right;white-space:nowrap;overflow:hidden;font-size:9px;color:#000;-webkit-text-stroke:0.1px currentColor;color:#000;">0</div><div style="position:absolute;left:13.900px;top:226.675px;width:1467.800px;height:1.000px;background:rgba(255,255,255,0.8);"></div><div style="position:absolute;left:4.500px;top:226.675px;width:9.400px;height:1.000px;background:#ececec;"></div><div style="position:absolute;left:13.900px;top:227.675px;width:1467.800px;height:14.062px;background:#ff8080;"></div><div style="position:absolute;left:13.900px;top:229.275px;width:29.300px;height:12.562px;line-height:12.562px;text-align:center;white-space:nowrap;overflow:hidden;font-size:8.65px;color:#000;-webkit-text-stroke:0.1px currentColor;color:#000;">К</div><div style="position:absolute;left:44.900px;top:229.275px;width:93.000px;height:12.562px;line-height:12.562px;text-align:left;white-space:nowrap;overflow:hidden;font-size:8.65px;color:#000;-webkit-text-stroke:0.1px currentColor;color:#000;">Абыйский улус</div><div style="position:absolute;left:140.900px;top:229.275px;width:93.000px;height:12.562px;line-height:12.562px;text-align:left;white-space:nowrap;overflow:hidden;font-size:8.65px;color:#000;-webkit-text-stroke:0.1px currentColor;color:#000;">п. Белая гора</div><div style="position:absolute;left:235.700px;top:227.675px;width:377.900px;height:14.062px;background:#0078d7;"></div><div style="position:absolute;left:236.900px;top:229.275px;width:375.400px;height:12.562px;line-height:12.562px;text-align:left;white-space:nowrap;overflow:hidden;font-size:8.65px;color:#000;-webkit-text-stroke:0.1px currentColor;color:#fff;">АО Абыйское (АБЫ 01/007)</div><div style="position:absolute;left:615.300px;top:229.275px;width:186.700px;height:12.562px;line-height:12.562px;text-align:left;white-space:nowrap;overflow:hidden;font-size:8.65px;color:#000;-webkit-text-stroke:0.1px currentColor;color:#000;">Сырая нефть</div><div style="position:absolute;left:804.300px;top:229.275px;width:68.200px;height:12.562px;line-height:12.562px;text-align:right;white-space:nowrap;overflow:hidden;font-size:9px;color:#000;-webkit-text-stroke:0.1px currentColor;color:#000;">41,244</div><div style="position:absolute;left:875.700px;top:229.275px;width:57.600px;height:12.562px;line-height:12.562px;text-align:right;white-space:nowrap;overflow:hidden;font-size:9px;color:#000;-webkit-text-stroke:0.1px currentColor;color:#000;">190,703</div><div style="position:absolute;left:936.500px;top:229.275px;width:58.600px;height:12.562px;line-height:12.562px;text-align:right;white-space:nowrap;overflow:hidden;font-size:9px;color:#000;-webkit-text-stroke:0.1px currentColor;color:#000;">6,152</div><div style="position:absolute;left:998.300px;top:229.275px;width:58.700px;height:12.562px;line-height:12.562px;text-align:right;white-space:nowrap;overflow:hidden;font-size:9px;color:#000;-webkit-text-stroke:0.1px currentColor;color:#000;">127,5</div><div style="position:absolute;left:1060.200px;top:229.275px;width:67.700px;height:12.562px;line-height:12.562px;text-align:right;white-space:nowrap;overflow:hidden;font-size:9px;color:#000;-webkit-text-stroke:0.1px currentColor;color:#000;">0</div><div style="position:absolute;left:1131.100px;top:229.275px;width:48.500px;height:12.562px;line-height:12.562px;text-align:right;white-space:nowrap;overflow:hidden;font-size:9px;color:#000;-webkit-text-stroke:0.1px currentColor;color:#000;">138,265</div><div style="position:absolute;left:1183.100px;top:228.775px;width:34.894px;height:11.463px;background:#00ff00;border:1px solid #287a28;box-sizing:border-box;"></div><div style="position:absolute;left:1183.800px;top:229.275px;width:49.300px;height:12.562px;line-height:12.562px;text-align:center;white-space:nowrap;overflow:hidden;font-size:9px;color:#000;-webkit-text-stroke:0.1px currentColor;">73%</div><div style="position:absolute;left:1235.100px;top:229.275px;width:56.000px;height:12.562px;line-height:12.562px;text-align:right;white-space:nowrap;overflow:hidden;font-size:9px;color:#000;-webkit-text-stroke:0.1px currentColor;color:#000;">30,479</div><div style="position:absolute;left:1294.300px;top:229.275px;width:49.600px;height:12.562px;line-height:12.562px;text-align:right;white-space:nowrap;overflow:hidden;font-size:9px;color:#000;-webkit-text-stroke:0.1px currentColor;color:#000;">4</div><div style="position:absolute;left:1347.100px;top:229.275px;width:83.100px;height:12.562px;line-height:12.562px;text-align:right;white-space:nowrap;overflow:hidden;font-size:9px;color:#000;-webkit-text-stroke:0.1px currentColor;color:#000;">24.03.2022</div><div style="position:absolute;left:1433.400px;top:229.275px;width:46.100px;height:12.562px;line-height:12.562px;text-align:right;white-space:nowrap;overflow:hidden;font-size:9px;color:#000;-webkit-text-stroke:0.1px currentColor;color:#000;">0</div><div style="position:absolute;left:13.900px;top:240.738px;width:1467.800px;height:1.000px;background:rgba(255,255,255,0.8);"></div><div style="position:absolute;left:4.500px;top:240.738px;width:9.400px;height:1.000px;background:#ececec;"></div><svg style="position:absolute;left:7px;top:231.18px" width="5" height="8"><path d="M0.5 0.5 L4 3.8 L0.5 7Z" fill="#222"/></svg><div style="position:absolute;left:235.700px;top:227.675px;width:377.900px;height:13.062px;border:1px dotted #8cc8ff;box-sizing:border-box;"></div><div style="position:absolute;left:13.900px;top:241.738px;width:1467.800px;height:14.062px;background:#00ff00;"></div><div style="position:absolute;left:13.900px;top:243.338px;width:29.300px;height:12.562px;line-height:12.562px;text-align:center;white-space:nowrap;overflow:hidden;font-size:8.65px;color:#000;-webkit-text-stroke:0.1px currentColor;color:#000;">К</div><div style="position:absolute;left:44.900px;top:243.338px;width:93.000px;height:12.562px;line-height:12.562px;text-align:left;white-space:nowrap;overflow:hidden;font-size:8.65px;color:#000;-webkit-text-stroke:0.1px currentColor;color:#000;">Абыйский улус</div><div style="position:absolute;left:140.900px;top:243.338px;width:93.000px;height:12.562px;line-height:12.562px;text-align:left;white-space:nowrap;overflow:hidden;font-size:8.65px;color:#000;-webkit-text-stroke:0.1px currentColor;color:#000;">с. Абый</div><div style="position:absolute;left:236.900px;top:243.338px;width:375.400px;height:12.562px;line-height:12.562px;text-align:left;white-space:nowrap;overflow:hidden;font-size:8.65px;color:#000;-webkit-text-stroke:0.1px currentColor;color:#000;">Центральное (АБЫ 02/018)</div><div style="position:absolute;left:615.300px;top:243.338px;width:186.700px;height:12.562px;line-height:12.562px;text-align:left;white-space:nowrap;overflow:hidden;font-size:8.65px;color:#000;-webkit-text-stroke:0.1px currentColor;color:#000;">Зырянский уголь</div><div style="position:absolute;left:804.300px;top:243.338px;width:68.200px;height:12.562px;line-height:12.562px;text-align:right;white-space:nowrap;overflow:hidden;font-size:9px;color:#000;-webkit-text-stroke:0.1px currentColor;color:#000;">3457,898</div><div style="position:absolute;left:875.700px;top:243.338px;width:57.600px;height:12.562px;line-height:12.562px;text-align:right;white-space:nowrap;overflow:hidden;font-size:9px;color:#000;-webkit-text-stroke:0.1px currentColor;color:#000;">335,614</div><div style="position:absolute;left:936.500px;top:243.338px;width:58.600px;height:12.562px;line-height:12.562px;text-align:right;white-space:nowrap;overflow:hidden;font-size:9px;color:#000;-webkit-text-stroke:0.1px currentColor;color:#000;">10,826</div><div style="position:absolute;left:998.300px;top:243.338px;width:58.700px;height:12.562px;line-height:12.562px;text-align:right;white-space:nowrap;overflow:hidden;font-size:9px;color:#000;-webkit-text-stroke:0.1px currentColor;color:#000;">1325,44</div><div style="position:absolute;left:1060.200px;top:243.338px;width:67.700px;height:12.562px;line-height:12.562px;text-align:right;white-space:nowrap;overflow:hidden;font-size:9px;color:#000;-webkit-text-stroke:0.1px currentColor;color:#000;">0</div><div style="position:absolute;left:1131.100px;top:243.338px;width:48.500px;height:12.562px;line-height:12.562px;text-align:right;white-space:nowrap;overflow:hidden;font-size:9px;color:#000;-webkit-text-stroke:0.1px currentColor;color:#000;">246</div><div style="position:absolute;left:1183.100px;top:242.838px;width:34.894px;height:11.463px;background:#00ff00;border:1px solid #287a28;box-sizing:border-box;"></div><div style="position:absolute;left:1183.800px;top:243.338px;width:49.300px;height:12.562px;line-height:12.562px;text-align:center;white-space:nowrap;overflow:hidden;font-size:9px;color:#000;-webkit-text-stroke:0.1px currentColor;">73%</div><div style="position:absolute;left:1235.100px;top:243.338px;width:56.000px;height:12.562px;line-height:12.562px;text-align:right;white-space:nowrap;overflow:hidden;font-size:9px;color:#000;-webkit-text-stroke:0.1px currentColor;color:#000;">4537,338</div><div style="position:absolute;left:1294.300px;top:243.338px;width:49.600px;height:12.562px;line-height:12.562px;text-align:right;white-space:nowrap;overflow:hidden;font-size:9px;color:#000;-webkit-text-stroke:0.1px currentColor;color:#000;">378</div><div style="position:absolute;left:1347.100px;top:243.338px;width:83.100px;height:12.562px;line-height:12.562px;text-align:right;white-space:nowrap;overflow:hidden;font-size:9px;color:#000;-webkit-text-stroke:0.1px currentColor;color:#000;">01.07.2022</div><div style="position:absolute;left:1433.400px;top:243.338px;width:46.100px;height:12.562px;line-height:12.562px;text-align:right;white-space:nowrap;overflow:hidden;font-size:9px;color:#000;-webkit-text-stroke:0.1px currentColor;color:#000;">0</div><div style="position:absolute;left:13.900px;top:254.800px;width:1467.800px;height:1.000px;background:rgba(255,255,255,0.8);"></div><div style="position:absolute;left:4.500px;top:254.800px;width:9.400px;height:1.000px;background:#ececec;"></div><div style="position:absolute;left:13.900px;top:255.800px;width:1467.800px;height:14.062px;background:#00ff00;"></div><div style="position:absolute;left:13.900px;top:257.400px;width:29.300px;height:12.562px;line-height:12.562px;text-align:center;white-space:nowrap;overflow:hidden;font-size:8.65px;color:#000;-webkit-text-stroke:0.1px currentColor;color:#000;">К</div><div style="position:absolute;left:44.900px;top:257.400px;width:93.000px;height:12.562px;line-height:12.562px;text-align:left;white-space:nowrap;overflow:hidden;font-size:8.65px;color:#000;-webkit-text-stroke:0.1px currentColor;color:#000;">Абыйский улус</div><div style="position:absolute;left:140.900px;top:257.400px;width:93.000px;height:12.562px;line-height:12.562px;text-align:left;white-space:nowrap;overflow:hidden;font-size:8.65px;color:#000;-webkit-text-stroke:0.1px currentColor;color:#000;">с. Кенг-Кюёль</div><div style="position:absolute;left:236.900px;top:257.400px;width:375.400px;height:12.562px;line-height:12.562px;text-align:left;white-space:nowrap;overflow:hidden;font-size:8.65px;color:#000;-webkit-text-stroke:0.1px currentColor;color:#000;">Центральная (АБЫ 03/014)</div><div style="position:absolute;left:615.300px;top:257.400px;width:186.700px;height:12.562px;line-height:12.562px;text-align:left;white-space:nowrap;overflow:hidden;font-size:8.65px;color:#000;-webkit-text-stroke:0.1px currentColor;color:#000;">Зырянский уголь</div><div style="position:absolute;left:804.300px;top:257.400px;width:68.200px;height:12.562px;line-height:12.562px;text-align:right;white-space:nowrap;overflow:hidden;font-size:9px;color:#000;-webkit-text-stroke:0.1px currentColor;color:#000;">1406,469</div><div style="position:absolute;left:875.700px;top:257.400px;width:57.600px;height:12.562px;line-height:12.562px;text-align:right;white-space:nowrap;overflow:hidden;font-size:9px;color:#000;-webkit-text-stroke:0.1px currentColor;color:#000;">92,938</div><div style="position:absolute;left:936.500px;top:257.400px;width:58.600px;height:12.562px;line-height:12.562px;text-align:right;white-space:nowrap;overflow:hidden;font-size:9px;color:#000;-webkit-text-stroke:0.1px currentColor;color:#000;">2,998</div><div style="position:absolute;left:998.300px;top:257.400px;width:58.700px;height:12.562px;line-height:12.562px;text-align:right;white-space:nowrap;overflow:hidden;font-size:9px;color:#000;-webkit-text-stroke:0.1px currentColor;color:#000;">0</div><div style="position:absolute;left:1060.200px;top:257.400px;width:67.700px;height:12.562px;line-height:12.562px;text-align:right;white-space:nowrap;overflow:hidden;font-size:9px;color:#000;-webkit-text-stroke:0.1px currentColor;color:#000;">0</div><div style="position:absolute;left:1131.100px;top:257.400px;width:48.500px;height:12.562px;line-height:12.562px;text-align:right;white-space:nowrap;overflow:hidden;font-size:9px;color:#000;-webkit-text-stroke:0.1px currentColor;color:#000;">61,4</div><div style="position:absolute;left:1183.100px;top:256.900px;width:31.548px;height:11.463px;background:#00ff00;border:1px solid #287a28;box-sizing:border-box;"></div><div style="position:absolute;left:1183.800px;top:257.400px;width:49.300px;height:12.562px;line-height:12.562px;text-align:center;white-space:nowrap;overflow:hidden;font-size:9px;color:#000;-webkit-text-stroke:0.1px currentColor;">66%</div><div style="position:absolute;left:1235.100px;top:257.400px;width:56.000px;height:12.562px;line-height:12.562px;text-align:right;white-space:nowrap;overflow:hidden;font-size:9px;color:#000;-webkit-text-stroke:0.1px currentColor;color:#000;">1345,069</div><div style="position:absolute;left:1294.300px;top:257.400px;width:49.600px;height:12.562px;line-height:12.562px;text-align:right;white-space:nowrap;overflow:hidden;font-size:9px;color:#000;-webkit-text-stroke:0.1px currentColor;color:#000;">448</div><div style="position:absolute;left:1347.100px;top:257.400px;width:83.100px;height:12.562px;line-height:12.562px;text-align:right;white-space:nowrap;overflow:hidden;font-size:9px;color:#000;-webkit-text-stroke:0.1px currentColor;color:#000;">01.07.2022</div><div style="position:absolute;left:1433.400px;top:257.400px;width:46.100px;height:12.562px;line-height:12.562px;text-align:right;white-space:nowrap;overflow:hidden;font-size:9px;color:#000;-webkit-text-stroke:0.1px currentColor;color:#000;">0</div><div style="position:absolute;left:13.900px;top:268.863px;width:1467.800px;height:1.000px;background:rgba(255,255,255,0.8);"></div><div style="position:absolute;left:4.500px;top:268.863px;width:9.400px;height:1.000px;background:#ececec;"></div><div style="position:absolute;left:13.900px;top:269.863px;width:1467.800px;height:14.062px;background:#00ff00;"></div><div style="position:absolute;left:13.900px;top:271.463px;width:29.300px;height:12.562px;line-height:12.562px;text-align:center;white-space:nowrap;overflow:hidden;font-size:8.65px;color:#000;-webkit-text-stroke:0.1px currentColor;color:#000;">К</div><div style="position:absolute;left:44.900px;top:271.463px;width:93.000px;height:12.562px;line-height:12.562px;text-align:left;white-space:nowrap;overflow:hidden;font-size:8.65px;color:#000;-webkit-text-stroke:0.1px currentColor;color:#000;">Абыйский улус</div><div style="position:absolute;left:140.900px;top:271.463px;width:93.000px;height:12.562px;line-height:12.562px;text-align:left;white-space:nowrap;overflow:hidden;font-size:8.65px;color:#000;-webkit-text-stroke:0.1px currentColor;color:#000;">с. Кебергене</div><div style="position:absolute;left:236.900px;top:271.463px;width:375.400px;height:12.562px;line-height:12.562px;text-align:left;white-space:nowrap;overflow:hidden;font-size:8.65px;color:#000;-webkit-text-stroke:0.1px currentColor;color:#000;">Центральная (АБЫ 04/020)</div><div style="position:absolute;left:615.300px;top:271.463px;width:186.700px;height:12.562px;line-height:12.562px;text-align:left;white-space:nowrap;overflow:hidden;font-size:8.65px;color:#000;-webkit-text-stroke:0.1px currentColor;color:#000;">Зырянский уголь</div><div style="position:absolute;left:804.300px;top:271.463px;width:68.200px;height:12.562px;line-height:12.562px;text-align:right;white-space:nowrap;overflow:hidden;font-size:9px;color:#000;-webkit-text-stroke:0.1px currentColor;color:#000;">2251,988</div><div style="position:absolute;left:875.700px;top:271.463px;width:57.600px;height:12.562px;line-height:12.562px;text-align:right;white-space:nowrap;overflow:hidden;font-size:9px;color:#000;-webkit-text-stroke:0.1px currentColor;color:#000;">292,541</div><div style="position:absolute;left:936.500px;top:271.463px;width:58.600px;height:12.562px;line-height:12.562px;text-align:right;white-space:nowrap;overflow:hidden;font-size:9px;color:#000;-webkit-text-stroke:0.1px currentColor;color:#000;">9,437</div><div style="position:absolute;left:998.300px;top:271.463px;width:58.700px;height:12.562px;line-height:12.562px;text-align:right;white-space:nowrap;overflow:hidden;font-size:9px;color:#000;-webkit-text-stroke:0.1px currentColor;color:#000;">0</div><div style="position:absolute;left:1060.200px;top:271.463px;width:67.700px;height:12.562px;line-height:12.562px;text-align:right;white-space:nowrap;overflow:hidden;font-size:9px;color:#000;-webkit-text-stroke:0.1px currentColor;color:#000;">0</div><div style="position:absolute;left:1131.100px;top:271.463px;width:48.500px;height:12.562px;line-height:12.562px;text-align:right;white-space:nowrap;overflow:hidden;font-size:9px;color:#000;-webkit-text-stroke:0.1px currentColor;color:#000;">212,5</div><div style="position:absolute;left:1183.100px;top:270.963px;width:34.894px;height:11.463px;background:#00ff00;border:1px solid #287a28;box-sizing:border-box;"></div><div style="position:absolute;left:1183.800px;top:271.463px;width:49.300px;height:12.562px;line-height:12.562px;text-align:center;white-space:nowrap;overflow:hidden;font-size:9px;color:#000;-webkit-text-stroke:0.1px currentColor;">73%</div><div style="position:absolute;left:1235.100px;top:271.463px;width:56.000px;height:12.562px;line-height:12.562px;text-align:right;white-space:nowrap;overflow:hidden;font-size:9px;color:#000;-webkit-text-stroke:0.1px currentColor;color:#000;">2039,488</div><div style="position:absolute;left:1294.300px;top:271.463px;width:49.600px;height:12.562px;line-height:12.562px;text-align:right;white-space:nowrap;overflow:hidden;font-size:9px;color:#000;-webkit-text-stroke:0.1px currentColor;color:#000;">170</div><div style="position:absolute;left:1347.100px;top:271.463px;width:83.100px;height:12.562px;line-height:12.562px;text-align:right;white-space:nowrap;overflow:hidden;font-size:9px;color:#000;-webkit-text-stroke:0.1px currentColor;color:#000;">01.07.2022</div><div style="position:absolute;left:1433.400px;top:271.463px;width:46.100px;height:12.562px;line-height:12.562px;text-align:right;white-space:nowrap;overflow:hidden;font-size:9px;color:#000;-webkit-text-stroke:0.1px currentColor;color:#000;">0</div><div style="position:absolute;left:13.900px;top:282.925px;width:1467.800px;height:1.000px;background:rgba(255,255,255,0.8);"></div><div style="position:absolute;left:4.500px;top:282.925px;width:9.400px;height:1.000px;background:#ececec;"></div><div style="position:absolute;left:13.900px;top:283.925px;width:1467.800px;height:14.062px;background:#00ff00;"></div><div style="position:absolute;left:13.900px;top:285.525px;width:29.300px;height:12.562px;line-height:12.562px;text-align:center;white-space:nowrap;overflow:hidden;font-size:8.65px;color:#000;-webkit-text-stroke:0.1px currentColor;color:#000;">К</div><div style="position:absolute;left:44.900px;top:285.525px;width:93.000px;height:12.562px;line-height:12.562px;text-align:left;white-space:nowrap;overflow:hidden;font-size:8.65px;color:#000;-webkit-text-stroke:0.1px currentColor;color:#000;">Абыйский улус</div><div style="position:absolute;left:140.900px;top:285.525px;width:93.000px;height:12.562px;line-height:12.562px;text-align:left;white-space:nowrap;overflow:hidden;font-size:8.65px;color:#000;-webkit-text-stroke:0.1px currentColor;color:#000;">с. Дёску (Оттох-Атах)</div><div style="position:absolute;left:236.900px;top:285.525px;width:375.400px;height:12.562px;line-height:12.562px;text-align:left;white-space:nowrap;overflow:hidden;font-size:8.65px;color:#000;-webkit-text-stroke:0.1px currentColor;color:#000;">Центральная (АБЫ 05/011)</div><div style="position:absolute;left:615.300px;top:285.525px;width:186.700px;height:12.562px;line-height:12.562px;text-align:left;white-space:nowrap;overflow:hidden;font-size:8.65px;color:#000;-webkit-text-stroke:0.1px currentColor;color:#000;">Зырянский уголь</div><div style="position:absolute;left:804.300px;top:285.525px;width:68.200px;height:12.562px;line-height:12.562px;text-align:right;white-space:nowrap;overflow:hidden;font-size:9px;color:#000;-webkit-text-stroke:0.1px currentColor;color:#000;">395,312</div><div style="position:absolute;left:875.700px;top:285.525px;width:57.600px;height:12.562px;line-height:12.562px;text-align:right;white-space:nowrap;overflow:hidden;font-size:9px;color:#000;-webkit-text-stroke:0.1px currentColor;color:#000;">29,483</div><div style="position:absolute;left:936.500px;top:285.525px;width:58.600px;height:12.562px;line-height:12.562px;text-align:right;white-space:nowrap;overflow:hidden;font-size:9px;color:#000;-webkit-text-stroke:0.1px currentColor;color:#000;">0,951</div><div style="position:absolute;left:998.300px;top:285.525px;width:58.700px;height:12.562px;line-height:12.562px;text-align:right;white-space:nowrap;overflow:hidden;font-size:9px;color:#000;-webkit-text-stroke:0.1px currentColor;color:#000;">0</div><div style="position:absolute;left:1060.200px;top:285.525px;width:67.700px;height:12.562px;line-height:12.562px;text-align:right;white-space:nowrap;overflow:hidden;font-size:9px;color:#000;-webkit-text-stroke:0.1px currentColor;color:#000;">0</div><div style="position:absolute;left:1131.100px;top:285.525px;width:48.500px;height:12.562px;line-height:12.562px;text-align:right;white-space:nowrap;overflow:hidden;font-size:9px;color:#000;-webkit-text-stroke:0.1px currentColor;color:#000;">21</div><div style="position:absolute;left:1183.100px;top:285.025px;width:33.938px;height:11.463px;background:#00ff00;border:1px solid #287a28;box-sizing:border-box;"></div><div style="position:absolute;left:1183.800px;top:285.525px;width:49.300px;height:12.562px;line-height:12.562px;text-align:center;white-space:nowrap;overflow:hidden;font-size:9px;color:#000;-webkit-text-stroke:0.1px currentColor;">71%</div><div style="position:absolute;left:1235.100px;top:285.525px;width:56.000px;height:12.562px;line-height:12.562px;text-align:right;white-space:nowrap;overflow:hidden;font-size:9px;color:#000;-webkit-text-stroke:0.1px currentColor;color:#000;">374,312</div><div style="position:absolute;left:1294.300px;top:285.525px;width:49.600px;height:12.562px;line-height:12.562px;text-align:right;white-space:nowrap;overflow:hidden;font-size:9px;color:#000;-webkit-text-stroke:0.1px currentColor;color:#000;">374</div><div style="position:absolute;left:1347.100px;top:285.525px;width:83.100px;height:12.562px;line-height:12.562px;text-align:right;white-space:nowrap;overflow:hidden;font-size:9px;color:#000;-webkit-text-stroke:0.1px currentColor;color:#000;">01.07.2022</div><div style="position:absolute;left:1433.400px;top:285.525px;width:46.100px;height:12.562px;line-height:12.562px;text-align:right;white-space:nowrap;overflow:hidden;font-size:9px;color:#000;-webkit-text-stroke:0.1px currentColor;color:#000;">0</div><div style="position:absolute;left:13.900px;top:296.988px;width:1467.800px;height:1.000px;background:rgba(255,255,255,0.8);"></div><div style="position:absolute;left:4.500px;top:296.988px;width:9.400px;height:1.000px;background:#ececec;"></div><div style="position:absolute;left:13.900px;top:297.988px;width:1467.800px;height:14.062px;background:#00ff00;"></div><div style="position:absolute;left:13.900px;top:299.588px;width:29.300px;height:12.562px;line-height:12.562px;text-align:center;white-space:nowrap;overflow:hidden;font-size:8.65px;color:#000;-webkit-text-stroke:0.1px currentColor;color:#000;">К</div><div style="position:absolute;left:44.900px;top:299.588px;width:93.000px;height:12.562px;line-height:12.562px;text-align:left;white-space:nowrap;overflow:hidden;font-size:8.65px;color:#000;-webkit-text-stroke:0.1px currentColor;color:#000;">Абыйский улус</div><div style="position:absolute;left:140.900px;top:299.588px;width:93.000px;height:12.562px;line-height:12.562px;text-align:left;white-space:nowrap;overflow:hidden;font-size:8.65px;color:#000;-webkit-text-stroke:0.1px currentColor;color:#000;">с. Сыаганнах</div><div style="position:absolute;left:236.900px;top:299.588px;width:375.400px;height:12.562px;line-height:12.562px;text-align:left;white-space:nowrap;overflow:hidden;font-size:8.65px;color:#000;-webkit-text-stroke:0.1px currentColor;color:#000;">Центральная (АБЫ 06/019)</div><div style="position:absolute;left:615.300px;top:299.588px;width:186.700px;height:12.562px;line-height:12.562px;text-align:left;white-space:nowrap;overflow:hidden;font-size:8.65px;color:#000;-webkit-text-stroke:0.1px currentColor;color:#000;">Зырянский уголь</div><div style="position:absolute;left:804.300px;top:299.588px;width:68.200px;height:12.562px;line-height:12.562px;text-align:right;white-space:nowrap;overflow:hidden;font-size:9px;color:#000;-webkit-text-stroke:0.1px currentColor;color:#000;">2027,49</div><div style="position:absolute;left:875.700px;top:299.588px;width:57.600px;height:12.562px;line-height:12.562px;text-align:right;white-space:nowrap;overflow:hidden;font-size:9px;color:#000;-webkit-text-stroke:0.1px currentColor;color:#000;">282,126</div><div style="position:absolute;left:936.500px;top:299.588px;width:58.600px;height:12.562px;line-height:12.562px;text-align:right;white-space:nowrap;overflow:hidden;font-size:9px;color:#000;-webkit-text-stroke:0.1px currentColor;color:#000;">9,101</div><div style="position:absolute;left:998.300px;top:299.588px;width:58.700px;height:12.562px;line-height:12.562px;text-align:right;white-space:nowrap;overflow:hidden;font-size:9px;color:#000;-webkit-text-stroke:0.1px currentColor;color:#000;">682,72</div><div style="position:absolute;left:1060.200px;top:299.588px;width:67.700px;height:12.562px;line-height:12.562px;text-align:right;white-space:nowrap;overflow:hidden;font-size:9px;color:#000;-webkit-text-stroke:0.1px currentColor;color:#000;">0</div><div style="position:absolute;left:1131.100px;top:299.588px;width:48.500px;height:12.562px;line-height:12.562px;text-align:right;white-space:nowrap;overflow:hidden;font-size:9px;color:#000;-webkit-text-stroke:0.1px currentColor;color:#000;">189</div><div style="position:absolute;left:1183.100px;top:299.088px;width:32.026px;height:11.463px;background:#00ff00;border:1px solid #287a28;box-sizing:border-box;"></div><div style="position:absolute;left:1183.800px;top:299.588px;width:49.300px;height:12.562px;line-height:12.562px;text-align:center;white-space:nowrap;overflow:hidden;font-size:9px;color:#000;-webkit-text-stroke:0.1px currentColor;">67%</div><div style="position:absolute;left:1235.100px;top:299.588px;width:56.000px;height:12.562px;line-height:12.562px;text-align:right;white-space:nowrap;overflow:hidden;font-size:9px;color:#000;-webkit-text-stroke:0.1px currentColor;color:#000;">2521,21</div><div style="position:absolute;left:1294.300px;top:299.588px;width:49.600px;height:12.562px;line-height:12.562px;text-align:right;white-space:nowrap;overflow:hidden;font-size:9px;color:#000;-webkit-text-stroke:0.1px currentColor;color:#000;">280</div><div style="position:absolute;left:1347.100px;top:299.588px;width:83.100px;height:12.562px;line-height:12.562px;text-align:right;white-space:nowrap;overflow:hidden;font-size:9px;color:#000;-webkit-text-stroke:0.1px currentColor;color:#000;">01.07.2022</div><div style="position:absolute;left:1433.400px;top:299.588px;width:46.100px;height:12.562px;line-height:12.562px;text-align:right;white-space:nowrap;overflow:hidden;font-size:9px;color:#000;-webkit-text-stroke:0.1px currentColor;color:#000;">0</div><div style="position:absolute;left:13.900px;top:311.050px;width:1467.800px;height:1.000px;background:rgba(255,255,255,0.8);"></div><div style="position:absolute;left:4.500px;top:311.050px;width:9.400px;height:1.000px;background:#ececec;"></div><div style="position:absolute;left:13.900px;top:312.050px;width:1467.800px;height:14.062px;background:#00ff00;"></div><div style="position:absolute;left:13.900px;top:313.650px;width:29.300px;height:12.562px;line-height:12.562px;text-align:center;white-space:nowrap;overflow:hidden;font-size:8.65px;color:#000;-webkit-text-stroke:0.1px currentColor;color:#000;">К</div><div style="position:absolute;left:44.900px;top:313.650px;width:93.000px;height:12.562px;line-height:12.562px;text-align:left;white-space:nowrap;overflow:hidden;font-size:8.65px;color:#000;-webkit-text-stroke:0.1px currentColor;color:#000;">Абыйский улус</div><div style="position:absolute;left:140.900px;top:313.650px;width:93.000px;height:12.562px;line-height:12.562px;text-align:left;white-space:nowrap;overflow:hidden;font-size:8.65px;color:#000;-webkit-text-stroke:0.1px currentColor;color:#000;">с. Сутуруоха</div><div style="position:absolute;left:236.900px;top:313.650px;width:375.400px;height:12.562px;line-height:12.562px;text-align:left;white-space:nowrap;overflow:hidden;font-size:8.65px;color:#000;-webkit-text-stroke:0.1px currentColor;color:#000;">Центральная (АБЫ 07/016)</div><div style="position:absolute;left:615.300px;top:313.650px;width:186.700px;height:12.562px;line-height:12.562px;text-align:left;white-space:nowrap;overflow:hidden;font-size:8.65px;color:#000;-webkit-text-stroke:0.1px currentColor;color:#000;">Зырянский уголь</div><div style="position:absolute;left:804.300px;top:313.650px;width:68.200px;height:12.562px;line-height:12.562px;text-align:right;white-space:nowrap;overflow:hidden;font-size:9px;color:#000;-webkit-text-stroke:0.1px currentColor;color:#000;">241,632</div><div style="position:absolute;left:875.700px;top:313.650px;width:57.600px;height:12.562px;line-height:12.562px;text-align:right;white-space:nowrap;overflow:hidden;font-size:9px;color:#000;-webkit-text-stroke:0.1px currentColor;color:#000;">249,48</div><div style="position:absolute;left:936.500px;top:313.650px;width:58.600px;height:12.562px;line-height:12.562px;text-align:right;white-space:nowrap;overflow:hidden;font-size:9px;color:#000;-webkit-text-stroke:0.1px currentColor;color:#000;">8,048</div><div style="position:absolute;left:998.300px;top:313.650px;width:58.700px;height:12.562px;line-height:12.562px;text-align:right;white-space:nowrap;overflow:hidden;font-size:9px;color:#000;-webkit-text-stroke:0.1px currentColor;color:#000;">300</div><div style="position:absolute;left:1060.200px;top:313.650px;width:67.700px;height:12.562px;line-height:12.562px;text-align:right;white-space:nowrap;overflow:hidden;font-size:9px;color:#000;-webkit-text-stroke:0.1px currentColor;color:#000;">0</div><div style="position:absolute;left:1131.100px;top:313.650px;width:48.500px;height:12.562px;line-height:12.562px;text-align:right;white-space:nowrap;overflow:hidden;font-size:9px;color:#000;-webkit-text-stroke:0.1px currentColor;color:#000;">170</div><div style="position:absolute;left:1183.100px;top:313.150px;width:32.504px;height:11.463px;background:#00ff00;border:1px solid #287a28;box-sizing:border-box;"></div><div style="position:absolute;left:1183.800px;top:313.650px;width:49.300px;height:12.562px;line-height:12.562px;text-align:center;white-space:nowrap;overflow:hidden;font-size:9px;color:#000;-webkit-text-stroke:0.1px currentColor;">68%</div><div style="position:absolute;left:1235.100px;top:313.650px;width:56.000px;height:12.562px;line-height:12.562px;text-align:right;white-space:nowrap;overflow:hidden;font-size:9px;color:#000;-webkit-text-stroke:0.1px currentColor;color:#000;">371,632</div><div style="position:absolute;left:1294.300px;top:313.650px;width:49.600px;height:12.562px;line-height:12.562px;text-align:right;white-space:nowrap;overflow:hidden;font-size:9px;color:#000;-webkit-text-stroke:0.1px currentColor;color:#000;">46</div><div style="position:absolute;left:1347.100px;top:313.650px;width:83.100px;height:12.562px;line-height:12.562px;text-align:right;white-space:nowrap;overflow:hidden;font-size:9px;color:#000;-webkit-text-stroke:0.1px currentColor;color:#000;">01.07.2022</div><div style="position:absolute;left:1433.400px;top:313.650px;width:46.100px;height:12.562px;line-height:12.562px;text-align:right;white-space:nowrap;overflow:hidden;font-size:9px;color:#000;-webkit-text-stroke:0.1px currentColor;color:#000;">0</div><div style="position:absolute;left:13.900px;top:325.113px;width:1467.800px;height:1.000px;background:rgba(255,255,255,0.8);"></div><div style="position:absolute;left:4.500px;top:325.113px;width:9.400px;height:1.000px;background:#ececec;"></div><div style="position:absolute;left:13.900px;top:326.113px;width:1467.800px;height:14.062px;background:#ffffff;"></div><div style="position:absolute;left:13.900px;top:327.713px;width:29.300px;height:12.562px;line-height:12.562px;text-align:center;white-space:nowrap;overflow:hidden;font-size:8.65px;color:#000;-webkit-text-stroke:0.1px currentColor;color:#1a1a1a;">С</div><div style="position:absolute;left:44.900px;top:327.713px;width:93.000px;height:12.562px;line-height:12.562px;text-align:left;white-space:nowrap;overflow:hidden;font-size:8.65px;color:#000;-webkit-text-stroke:0.1px currentColor;color:#1a1a1a;">Абыйский улус</div><div style="position:absolute;left:140.900px;top:327.713px;width:93.000px;height:12.562px;line-height:12.562px;text-align:left;white-space:nowrap;overflow:hidden;font-size:8.65px;color:#000;-webkit-text-stroke:0.1px currentColor;color:#1a1a1a;">п. Белая гора</div><div style="position:absolute;left:236.900px;top:327.713px;width:375.400px;height:12.562px;line-height:12.562px;text-align:left;white-space:nowrap;overflow:hidden;font-size:8.65px;color:#000;-webkit-text-stroke:0.1px currentColor;color:#1a1a1a;">Белогоская нефтебаза АО "Саханефтегазсбыт" (б/н)</div><div style="position:absolute;left:615.300px;top:327.713px;width:186.700px;height:12.562px;line-height:12.562px;text-align:left;white-space:nowrap;overflow:hidden;font-size:8.65px;color:#000;-webkit-text-stroke:0.1px currentColor;color:#1a1a1a;">Сырая нефть</div><div style="position:absolute;left:804.300px;top:327.713px;width:68.200px;height:12.562px;line-height:12.562px;text-align:right;white-space:nowrap;overflow:hidden;font-size:9px;color:#000;-webkit-text-stroke:0.1px currentColor;color:#1a1a1a;">804,167</div><div style="position:absolute;left:875.700px;top:327.713px;width:57.600px;height:12.562px;line-height:12.562px;text-align:right;white-space:nowrap;overflow:hidden;font-size:9px;color:#000;-webkit-text-stroke:0.1px currentColor;color:#1a1a1a;">0</div><div style="position:absolute;left:936.500px;top:327.713px;width:58.600px;height:12.562px;line-height:12.562px;text-align:right;white-space:nowrap;overflow:hidden;font-size:9px;color:#000;-webkit-text-stroke:0.1px currentColor;color:#1a1a1a;">0</div><div style="position:absolute;left:998.300px;top:327.713px;width:58.700px;height:12.562px;line-height:12.562px;text-align:right;white-space:nowrap;overflow:hidden;font-size:9px;color:#000;-webkit-text-stroke:0.1px currentColor;color:#1a1a1a;">0</div><div style="position:absolute;left:1060.200px;top:327.713px;width:67.700px;height:12.562px;line-height:12.562px;text-align:right;white-space:nowrap;overflow:hidden;font-size:9px;color:#000;-webkit-text-stroke:0.1px currentColor;color:#1a1a1a;">270</div><div style="position:absolute;left:1131.100px;top:327.713px;width:48.500px;height:12.562px;line-height:12.562px;text-align:right;white-space:nowrap;overflow:hidden;font-size:9px;color:#000;-webkit-text-stroke:0.1px currentColor;color:#1a1a1a;">0</div><div style="position:absolute;left:1235.100px;top:327.713px;width:56.000px;height:12.562px;line-height:12.562px;text-align:right;white-space:nowrap;overflow:hidden;font-size:9px;color:#000;-webkit-text-stroke:0.1px currentColor;color:#1a1a1a;">534,167</div><div style="position:absolute;left:1433.400px;top:327.713px;width:46.100px;height:12.562px;line-height:12.562px;text-align:right;white-space:nowrap;overflow:hidden;font-size:9px;color:#000;-webkit-text-stroke:0.1px currentColor;color:#1a1a1a;">0</div><div style="position:absolute;left:13.900px;top:339.175px;width:1467.800px;height:1.000px;background:rgba(255,255,255,0.8);"></div><div style="position:absolute;left:4.500px;top:339.175px;width:9.400px;height:1.000px;background:#ececec;"></div><div style="position:absolute;left:13.900px;top:340.175px;width:1467.800px;height:14.062px;background:#ffffff;"></div><div style="position:absolute;left:13.900px;top:341.775px;width:29.300px;height:12.562px;line-height:12.562px;text-align:center;white-space:nowrap;overflow:hidden;font-size:8.65px;color:#000;-webkit-text-stroke:0.1px currentColor;color:#1a1a1a;">С</div><div style="position:absolute;left:44.900px;top:341.775px;width:93.000px;height:12.562px;line-height:12.562px;text-align:left;white-space:nowrap;overflow:hidden;font-size:8.65px;color:#000;-webkit-text-stroke:0.1px currentColor;color:#1a1a1a;">Абыйский улус</div><div style="position:absolute;left:140.900px;top:341.775px;width:93.000px;height:12.562px;line-height:12.562px;text-align:left;white-space:nowrap;overflow:hidden;font-size:8.65px;color:#000;-webkit-text-stroke:0.1px currentColor;color:#1a1a1a;">п. Белая гора</div><div style="position:absolute;left:236.900px;top:341.775px;width:375.400px;height:12.562px;line-height:12.562px;text-align:left;white-space:nowrap;overflow:hidden;font-size:8.65px;color:#000;-webkit-text-stroke:0.1px currentColor;color:#1a1a1a;">Склад угля п. Белая Гора (б/н)</div><div style="position:absolute;left:615.300px;top:341.775px;width:186.700px;height:12.562px;line-height:12.562px;text-align:left;white-space:nowrap;overflow:hidden;font-size:8.65px;color:#000;-webkit-text-stroke:0.1px currentColor;color:#1a1a1a;">Зырянский уголь</div><div style="position:absolute;left:804.300px;top:341.775px;width:68.200px;height:12.562px;line-height:12.562px;text-align:right;white-space:nowrap;overflow:hidden;font-size:9px;color:#000;-webkit-text-stroke:0.1px currentColor;color:#1a1a1a;">5403,07</div><div style="position:absolute;left:875.700px;top:341.775px;width:57.600px;height:12.562px;line-height:12.562px;text-align:right;white-space:nowrap;overflow:hidden;font-size:9px;color:#000;-webkit-text-stroke:0.1px currentColor;color:#1a1a1a;">0</div><div style="position:absolute;left:936.500px;top:341.775px;width:58.600px;height:12.562px;line-height:12.562px;text-align:right;white-space:nowrap;overflow:hidden;font-size:9px;color:#000;-webkit-text-stroke:0.1px currentColor;color:#1a1a1a;">0</div><div style="position:absolute;left:998.300px;top:341.775px;width:58.700px;height:12.562px;line-height:12.562px;text-align:right;white-space:nowrap;overflow:hidden;font-size:9px;color:#000;-webkit-text-stroke:0.1px currentColor;color:#1a1a1a;">0</div><div style="position:absolute;left:1060.200px;top:341.775px;width:67.700px;height:12.562px;line-height:12.562px;text-align:right;white-space:nowrap;overflow:hidden;font-size:9px;color:#000;-webkit-text-stroke:0.1px currentColor;color:#1a1a1a;">2958,16</div><div style="position:absolute;left:1131.100px;top:341.775px;width:48.500px;height:12.562px;line-height:12.562px;text-align:right;white-space:nowrap;overflow:hidden;font-size:9px;color:#000;-webkit-text-stroke:0.1px currentColor;color:#1a1a1a;">0</div><div style="position:absolute;left:1235.100px;top:341.775px;width:56.000px;height:12.562px;line-height:12.562px;text-align:right;white-space:nowrap;overflow:hidden;font-size:9px;color:#000;-webkit-text-stroke:0.1px currentColor;color:#1a1a1a;">2444,91</div><div style="position:absolute;left:1433.400px;top:341.775px;width:46.100px;height:12.562px;line-height:12.562px;text-align:right;white-space:nowrap;overflow:hidden;font-size:9px;color:#000;-webkit-text-stroke:0.1px currentColor;color:#1a1a1a;">0</div><div style="position:absolute;left:13.900px;top:353.238px;width:1467.800px;height:1.000px;background:rgba(255,255,255,0.8);"></div><div style="position:absolute;left:4.500px;top:353.238px;width:9.400px;height:1.000px;background:#ececec;"></div><div style="position:absolute;left:13.900px;top:354.238px;width:1467.800px;height:14.062px;background:#40ffff;"></div><div style="position:absolute;left:44.900px;top:355.838px;width:93.000px;height:12.562px;line-height:12.562px;text-align:left;white-space:nowrap;overflow:hidden;font-size:8.65px;color:#000;-webkit-text-stroke:0.1px currentColor;color:#000;">Абыйский улус</div><div style="position:absolute;left:140.900px;top:355.838px;width:93.000px;height:12.562px;line-height:12.562px;text-align:left;white-space:nowrap;overflow:hidden;font-size:8.65px;color:#000;-webkit-text-stroke:0.1px currentColor;color:#000;">п. Белая гора</div><div style="position:absolute;left:236.900px;top:355.838px;width:375.400px;height:12.562px;line-height:12.562px;text-align:left;white-space:nowrap;overflow:hidden;font-size:8.65px;color:#000;-webkit-text-stroke:0.1px currentColor;color:#000;">Итого по нас. пункту</div><div style="position:absolute;left:615.300px;top:355.838px;width:186.700px;height:12.562px;line-height:12.562px;text-align:left;white-space:nowrap;overflow:hidden;font-size:8.65px;color:#000;-webkit-text-stroke:0.1px currentColor;color:#000;">Зырянский уголь</div><div style="position:absolute;left:804.300px;top:355.838px;width:68.200px;height:12.562px;line-height:12.562px;text-align:right;white-space:nowrap;overflow:hidden;font-size:9px;color:#000;-webkit-text-stroke:0.1px currentColor;color:#000;">6343,762</div><div style="position:absolute;left:875.700px;top:355.838px;width:57.600px;height:12.562px;line-height:12.562px;text-align:right;white-space:nowrap;overflow:hidden;font-size:9px;color:#000;-webkit-text-stroke:0.1px currentColor;color:#000;">774,657</div><div style="position:absolute;left:936.500px;top:355.838px;width:58.600px;height:12.562px;line-height:12.562px;text-align:right;white-space:nowrap;overflow:hidden;font-size:9px;color:#000;-webkit-text-stroke:0.1px currentColor;color:#000;">24,989</div><div style="position:absolute;left:998.300px;top:355.838px;width:58.700px;height:12.562px;line-height:12.562px;text-align:right;white-space:nowrap;overflow:hidden;font-size:9px;color:#000;-webkit-text-stroke:0.1px currentColor;color:#000;">650</div><div style="position:absolute;left:1060.200px;top:355.838px;width:67.700px;height:12.562px;line-height:12.562px;text-align:right;white-space:nowrap;overflow:hidden;font-size:9px;color:#000;-webkit-text-stroke:0.1px currentColor;color:#000;">2958,16</div><div style="position:absolute;left:1131.100px;top:355.838px;width:48.500px;height:12.562px;line-height:12.562px;text-align:right;white-space:nowrap;overflow:hidden;font-size:9px;color:#000;-webkit-text-stroke:0.1px currentColor;color:#000;">551,14</div><div style="position:absolute;left:1183.100px;top:355.338px;width:33.938px;height:11.463px;background:#00ff00;border:1px solid #287a28;box-sizing:border-box;"></div><div style="position:absolute;left:1183.800px;top:355.838px;width:49.300px;height:12.562px;line-height:12.562px;text-align:center;white-space:nowrap;overflow:hidden;font-size:9px;color:#000;-webkit-text-stroke:0.1px currentColor;">71%</div><div style="position:absolute;left:1235.100px;top:355.838px;width:56.000px;height:12.562px;line-height:12.562px;text-align:right;white-space:nowrap;overflow:hidden;font-size:9px;color:#000;-webkit-text-stroke:0.1px currentColor;color:#000;">3484,462</div><div style="position:absolute;left:1433.400px;top:355.838px;width:46.100px;height:12.562px;line-height:12.562px;text-align:right;white-space:nowrap;overflow:hidden;font-size:9px;color:#000;-webkit-text-stroke:0.1px currentColor;color:#000;">0</div><div style="position:absolute;left:13.900px;top:367.300px;width:1467.800px;height:1.000px;background:rgba(255,255,255,0.8);"></div><div style="position:absolute;left:4.500px;top:367.300px;width:9.400px;height:1.000px;background:#ececec;"></div><div style="position:absolute;left:13.900px;top:368.300px;width:1467.800px;height:14.062px;background:#40ffff;"></div><div style="position:absolute;left:44.900px;top:369.900px;width:93.000px;height:12.562px;line-height:12.562px;text-align:left;white-space:nowrap;overflow:hidden;font-size:8.65px;color:#000;-webkit-text-stroke:0.1px currentColor;color:#000;">Абыйский улус</div><div style="position:absolute;left:140.900px;top:369.900px;width:93.000px;height:12.562px;line-height:12.562px;text-align:left;white-space:nowrap;overflow:hidden;font-size:8.65px;color:#000;-webkit-text-stroke:0.1px currentColor;color:#000;">п. Белая гора</div><div style="position:absolute;left:236.900px;top:369.900px;width:375.400px;height:12.562px;line-height:12.562px;text-align:left;white-space:nowrap;overflow:hidden;font-size:8.65px;color:#000;-webkit-text-stroke:0.1px currentColor;color:#000;">Итого по нас. пункту</div><div style="position:absolute;left:615.300px;top:369.900px;width:186.700px;height:12.562px;line-height:12.562px;text-align:left;white-space:nowrap;overflow:hidden;font-size:8.65px;color:#000;-webkit-text-stroke:0.1px currentColor;color:#000;">Сырая нефть</div><div style="position:absolute;left:804.300px;top:369.900px;width:68.200px;height:12.562px;line-height:12.562px;text-align:right;white-space:nowrap;overflow:hidden;font-size:9px;color:#000;-webkit-text-stroke:0.1px currentColor;color:#000;">886,659</div><div style="position:absolute;left:875.700px;top:369.900px;width:57.600px;height:12.562px;line-height:12.562px;text-align:right;white-space:nowrap;overflow:hidden;font-size:9px;color:#000;-webkit-text-stroke:0.1px currentColor;color:#000;">408,153</div><div style="position:absolute;left:936.500px;top:369.900px;width:58.600px;height:12.562px;line-height:12.562px;text-align:right;white-space:nowrap;overflow:hidden;font-size:9px;color:#000;-webkit-text-stroke:0.1px currentColor;color:#000;">13,167</div><div style="position:absolute;left:998.300px;top:369.900px;width:58.700px;height:12.562px;line-height:12.562px;text-align:right;white-space:nowrap;overflow:hidden;font-size:9px;color:#000;-webkit-text-stroke:0.1px currentColor;color:#000;">270</div><div style="position:absolute;left:1060.200px;top:369.900px;width:67.700px;height:12.562px;line-height:12.562px;text-align:right;white-space:nowrap;overflow:hidden;font-size:9px;color:#000;-webkit-text-stroke:0.1px currentColor;color:#000;">270</div><div style="position:absolute;left:1131.100px;top:369.900px;width:48.500px;height:12.562px;line-height:12.562px;text-align:right;white-space:nowrap;overflow:hidden;font-size:9px;color:#000;-webkit-text-stroke:0.1px currentColor;color:#000;">288,215</div><div style="position:absolute;left:1183.100px;top:369.400px;width:33.938px;height:11.463px;background:#00ff00;border:1px solid #287a28;box-sizing:border-box;"></div><div style="position:absolute;left:1183.800px;top:369.900px;width:49.300px;height:12.562px;line-height:12.562px;text-align:center;white-space:nowrap;overflow:hidden;font-size:9px;color:#000;-webkit-text-stroke:0.1px currentColor;">71%</div><div style="position:absolute;left:1235.100px;top:369.900px;width:56.000px;height:12.562px;line-height:12.562px;text-align:right;white-space:nowrap;overflow:hidden;font-size:9px;color:#000;-webkit-text-stroke:0.1px currentColor;color:#000;">598,444</div><div style="position:absolute;left:1433.400px;top:369.900px;width:46.100px;height:12.562px;line-height:12.562px;text-align:right;white-space:nowrap;overflow:hidden;font-size:9px;color:#000;-webkit-text-stroke:0.1px currentColor;color:#000;">0</div><div style="position:absolute;left:13.900px;top:381.363px;width:1467.800px;height:1.000px;background:rgba(255,255,255,0.8);"></div><div style="position:absolute;left:4.500px;top:381.363px;width:9.400px;height:1.000px;background:#ececec;"></div><div style="position:absolute;left:13.900px;top:382.363px;width:1467.800px;height:14.062px;background:#40ffff;"></div><div style="position:absolute;left:44.900px;top:383.963px;width:93.000px;height:12.562px;line-height:12.562px;text-align:left;white-space:nowrap;overflow:hidden;font-size:8.65px;color:#000;-webkit-text-stroke:0.1px currentColor;color:#000;">Абыйский улус</div><div style="position:absolute;left:140.900px;top:383.963px;width:93.000px;height:12.562px;line-height:12.562px;text-align:left;white-space:nowrap;overflow:hidden;font-size:8.65px;color:#000;-webkit-text-stroke:0.1px currentColor;color:#000;">с. Абый</div><div style="position:absolute;left:236.900px;top:383.963px;width:375.400px;height:12.562px;line-height:12.562px;text-align:left;white-space:nowrap;overflow:hidden;font-size:8.65px;color:#000;-webkit-text-stroke:0.1px currentColor;color:#000;">Итого по нас. пункту</div><div style="position:absolute;left:615.300px;top:383.963px;width:186.700px;height:12.562px;line-height:12.562px;text-align:left;white-space:nowrap;overflow:hidden;font-size:8.65px;color:#000;-webkit-text-stroke:0.1px currentColor;color:#000;">Зырянский уголь</div><div style="position:absolute;left:804.300px;top:383.963px;width:68.200px;height:12.562px;line-height:12.562px;text-align:right;white-space:nowrap;overflow:hidden;font-size:9px;color:#000;-webkit-text-stroke:0.1px currentColor;color:#000;">3457,898</div><div style="position:absolute;left:875.700px;top:383.963px;width:57.600px;height:12.562px;line-height:12.562px;text-align:right;white-space:nowrap;overflow:hidden;font-size:9px;color:#000;-webkit-text-stroke:0.1px currentColor;color:#000;">335,614</div><div style="position:absolute;left:936.500px;top:383.963px;width:58.600px;height:12.562px;line-height:12.562px;text-align:right;white-space:nowrap;overflow:hidden;font-size:9px;color:#000;-webkit-text-stroke:0.1px currentColor;color:#000;">10,826</div><div style="position:absolute;left:998.300px;top:383.963px;width:58.700px;height:12.562px;line-height:12.562px;text-align:right;white-space:nowrap;overflow:hidden;font-size:9px;color:#000;-webkit-text-stroke:0.1px currentColor;color:#000;">1325,44</div><div style="position:absolute;left:1060.200px;top:383.963px;width:67.700px;height:12.562px;line-height:12.562px;text-align:right;white-space:nowrap;overflow:hidden;font-size:9px;color:#000;-webkit-text-stroke:0.1px currentColor;color:#000;">0</div><div style="position:absolute;left:1131.100px;top:383.963px;width:48.500px;height:12.562px;line-height:12.562px;text-align:right;white-space:nowrap;overflow:hidden;font-size:9px;color:#000;-webkit-text-stroke:0.1px currentColor;color:#000;">246</div><div style="position:absolute;left:1183.100px;top:383.463px;width:34.894px;height:11.463px;background:#00ff00;border:1px solid #287a28;box-sizing:border-box;"></div><div style="position:absolute;left:1183.800px;top:383.963px;width:49.300px;height:12.562px;line-height:12.562px;text-align:center;white-space:nowrap;overflow:hidden;font-size:9px;color:#000;-webkit-text-stroke:0.1px currentColor;">73%</div><div style="position:absolute;left:1235.100px;top:383.963px;width:56.000px;height:12.562px;line-height:12.562px;text-align:right;white-space:nowrap;overflow:hidden;font-size:9px;color:#000;-webkit-text-stroke:0.1px currentColor;color:#000;">4537,338</div><div style="position:absolute;left:1433.400px;top:383.963px;width:46.100px;height:12.562px;line-height:12.562px;text-align:right;white-space:nowrap;overflow:hidden;font-size:9px;color:#000;-webkit-text-stroke:0.1px currentColor;color:#000;">0</div><div style="position:absolute;left:13.900px;top:395.425px;width:1467.800px;height:1.000px;background:rgba(255,255,255,0.8);"></div><div style="position:absolute;left:4.500px;top:395.425px;width:9.400px;height:1.000px;background:#ececec;"></div><div style="position:absolute;left:13.900px;top:396.425px;width:1467.800px;height:14.062px;background:#40ffff;"></div><div style="position:absolute;left:44.900px;top:398.025px;width:93.000px;height:12.562px;line-height:12.562px;text-align:left;white-space:nowrap;overflow:hidden;font-size:8.65px;color:#000;-webkit-text-stroke:0.1px currentColor;color:#000;">Абыйский улус</div><div style="position:absolute;left:140.900px;top:398.025px;width:93.000px;height:12.562px;line-height:12.562px;text-align:left;white-space:nowrap;overflow:hidden;font-size:8.65px;color:#000;-webkit-text-stroke:0.1px currentColor;color:#000;">с. Дёску (Оттох-Атах)</div><div style="position:absolute;left:236.900px;top:398.025px;width:375.400px;height:12.562px;line-height:12.562px;text-align:left;white-space:nowrap;overflow:hidden;font-size:8.65px;color:#000;-webkit-text-stroke:0.1px currentColor;color:#000;">Итого по нас. пункту</div><div style="position:absolute;left:615.300px;top:398.025px;width:186.700px;height:12.562px;line-height:12.562px;text-align:left;white-space:nowrap;overflow:hidden;font-size:8.65px;color:#000;-webkit-text-stroke:0.1px currentColor;color:#000;">Зырянский уголь</div><div style="position:absolute;left:804.300px;top:398.025px;width:68.200px;height:12.562px;line-height:12.562px;text-align:right;white-space:nowrap;overflow:hidden;font-size:9px;color:#000;-webkit-text-stroke:0.1px currentColor;color:#000;">395,312</div><div style="position:absolute;left:875.700px;top:398.025px;width:57.600px;height:12.562px;line-height:12.562px;text-align:right;white-space:nowrap;overflow:hidden;font-size:9px;color:#000;-webkit-text-stroke:0.1px currentColor;color:#000;">29,483</div><div style="position:absolute;left:936.500px;top:398.025px;width:58.600px;height:12.562px;line-height:12.562px;text-align:right;white-space:nowrap;overflow:hidden;font-size:9px;color:#000;-webkit-text-stroke:0.1px currentColor;color:#000;">0,951</div><div style="position:absolute;left:998.300px;top:398.025px;width:58.700px;height:12.562px;line-height:12.562px;text-align:right;white-space:nowrap;overflow:hidden;font-size:9px;color:#000;-webkit-text-stroke:0.1px currentColor;color:#000;">0</div><div style="position:absolute;left:1060.200px;top:398.025px;width:67.700px;height:12.562px;line-height:12.562px;text-align:right;white-space:nowrap;overflow:hidden;font-size:9px;color:#000;-webkit-text-stroke:0.1px currentColor;color:#000;">0</div><div style="position:absolute;left:1131.100px;top:398.025px;width:48.500px;height:12.562px;line-height:12.562px;text-align:right;white-space:nowrap;overflow:hidden;font-size:9px;color:#000;-webkit-text-stroke:0.1px currentColor;color:#000;">21</div><div style="position:absolute;left:1183.100px;top:397.525px;width:33.938px;height:11.463px;background:#00ff00;border:1px solid #287a28;box-sizing:border-box;"></div><div style="position:absolute;left:1183.800px;top:398.025px;width:49.300px;height:12.562px;line-height:12.562px;text-align:center;white-space:nowrap;overflow:hidden;font-size:9px;color:#000;-webkit-text-stroke:0.1px currentColor;">71%</div><div style="position:absolute;left:1235.100px;top:398.025px;width:56.000px;height:12.562px;line-height:12.562px;text-align:right;white-space:nowrap;overflow:hidden;font-size:9px;color:#000;-webkit-text-stroke:0.1px currentColor;color:#000;">374,312</div><div style="position:absolute;left:1433.400px;top:398.025px;width:46.100px;height:12.562px;line-height:12.562px;text-align:right;white-space:nowrap;overflow:hidden;font-size:9px;color:#000;-webkit-text-stroke:0.1px currentColor;color:#000;">0</div><div style="position:absolute;left:13.900px;top:409.488px;width:1467.800px;height:1.000px;background:rgba(255,255,255,0.8);"></div><div style="position:absolute;left:4.500px;top:409.488px;width:9.400px;height:1.000px;background:#ececec;"></div><div style="position:absolute;left:13.900px;top:410.488px;width:1467.800px;height:14.062px;background:#40ffff;"></div><div style="position:absolute;left:44.900px;top:412.088px;width:93.000px;height:12.562px;line-height:12.562px;text-align:left;white-space:nowrap;overflow:hidden;font-size:8.65px;color:#000;-webkit-text-stroke:0.1px currentColor;color:#000;">Абыйский улус</div><div style="position:absolute;left:140.900px;top:412.088px;width:93.000px;height:12.562px;line-height:12.562px;text-align:left;white-space:nowrap;overflow:hidden;font-size:8.65px;color:#000;-webkit-text-stroke:0.1px currentColor;color:#000;">с. Кебергене</div><div style="position:absolute;left:236.900px;top:412.088px;width:375.400px;height:12.562px;line-height:12.562px;text-align:left;white-space:nowrap;overflow:hidden;font-size:8.65px;color:#000;-webkit-text-stroke:0.1px currentColor;color:#000;">Итого по нас. пункту</div><div style="position:absolute;left:615.300px;top:412.088px;width:186.700px;height:12.562px;line-height:12.562px;text-align:left;white-space:nowrap;overflow:hidden;font-size:8.65px;color:#000;-webkit-text-stroke:0.1px currentColor;color:#000;">Зырянский уголь</div><div style="position:absolute;left:804.300px;top:412.088px;width:68.200px;height:12.562px;line-height:12.562px;text-align:right;white-space:nowrap;overflow:hidden;font-size:9px;color:#000;-webkit-text-stroke:0.1px currentColor;color:#000;">2251,988</div><div style="position:absolute;left:875.700px;top:412.088px;width:57.600px;height:12.562px;line-height:12.562px;text-align:right;white-space:nowrap;overflow:hidden;font-size:9px;color:#000;-webkit-text-stroke:0.1px currentColor;color:#000;">292,541</div><div style="position:absolute;left:936.500px;top:412.088px;width:58.600px;height:12.562px;line-height:12.562px;text-align:right;white-space:nowrap;overflow:hidden;font-size:9px;color:#000;-webkit-text-stroke:0.1px currentColor;color:#000;">9,437</div><div style="position:absolute;left:998.300px;top:412.088px;width:58.700px;height:12.562px;line-height:12.562px;text-align:right;white-space:nowrap;overflow:hidden;font-size:9px;color:#000;-webkit-text-stroke:0.1px currentColor;color:#000;">0</div><div style="position:absolute;left:1060.200px;top:412.088px;width:67.700px;height:12.562px;line-height:12.562px;text-align:right;white-space:nowrap;overflow:hidden;font-size:9px;color:#000;-webkit-text-stroke:0.1px currentColor;color:#000;">0</div><div style="position:absolute;left:1131.100px;top:412.088px;width:48.500px;height:12.562px;line-height:12.562px;text-align:right;white-space:nowrap;overflow:hidden;font-size:9px;color:#000;-webkit-text-stroke:0.1px currentColor;color:#000;">212,5</div><div style="position:absolute;left:1183.100px;top:411.588px;width:34.894px;height:11.463px;background:#00ff00;border:1px solid #287a28;box-sizing:border-box;"></div><div style="position:absolute;left:1183.800px;top:412.088px;width:49.300px;height:12.562px;line-height:12.562px;text-align:center;white-space:nowrap;overflow:hidden;font-size:9px;color:#000;-webkit-text-stroke:0.1px currentColor;">73%</div><div style="position:absolute;left:1235.100px;top:412.088px;width:56.000px;height:12.562px;line-height:12.562px;text-align:right;white-space:nowrap;overflow:hidden;font-size:9px;color:#000;-webkit-text-stroke:0.1px currentColor;color:#000;">2039,488</div><div style="position:absolute;left:1433.400px;top:412.088px;width:46.100px;height:12.562px;line-height:12.562px;text-align:right;white-space:nowrap;overflow:hidden;font-size:9px;color:#000;-webkit-text-stroke:0.1px currentColor;color:#000;">0</div><div style="position:absolute;left:13.900px;top:423.550px;width:1467.800px;height:1.000px;background:rgba(255,255,255,0.8);"></div><div style="position:absolute;left:4.500px;top:423.550px;width:9.400px;height:1.000px;background:#ececec;"></div><div style="position:absolute;left:13.900px;top:424.550px;width:1467.800px;height:14.062px;background:#40ffff;"></div><div style="position:absolute;left:44.900px;top:426.150px;width:93.000px;height:12.562px;line-height:12.562px;text-align:left;white-space:nowrap;overflow:hidden;font-size:8.65px;color:#000;-webkit-text-stroke:0.1px currentColor;color:#000;">Абыйский улус</div><div style="position:absolute;left:140.900px;top:426.150px;width:93.000px;height:12.562px;line-height:12.562px;text-align:left;white-space:nowrap;overflow:hidden;font-size:8.65px;color:#000;-webkit-text-stroke:0.1px currentColor;color:#000;">с. Кенг-Кюёль</div><div style="position:absolute;left:236.900px;top:426.150px;width:375.400px;height:12.562px;line-height:12.562px;text-align:left;white-space:nowrap;overflow:hidden;font-size:8.65px;color:#000;-webkit-text-stroke:0.1px currentColor;color:#000;">Итого по нас. пункту</div><div style="position:absolute;left:615.300px;top:426.150px;width:186.700px;height:12.562px;line-height:12.562px;text-align:left;white-space:nowrap;overflow:hidden;font-size:8.65px;color:#000;-webkit-text-stroke:0.1px currentColor;color:#000;">Зырянский уголь</div><div style="position:absolute;left:804.300px;top:426.150px;width:68.200px;height:12.562px;line-height:12.562px;text-align:right;white-space:nowrap;overflow:hidden;font-size:9px;color:#000;-webkit-text-stroke:0.1px currentColor;color:#000;">1406,469</div><div style="position:absolute;left:875.700px;top:426.150px;width:57.600px;height:12.562px;line-height:12.562px;text-align:right;white-space:nowrap;overflow:hidden;font-size:9px;color:#000;-webkit-text-stroke:0.1px currentColor;color:#000;">92,938</div><div style="position:absolute;left:936.500px;top:426.150px;width:58.600px;height:12.562px;line-height:12.562px;text-align:right;white-space:nowrap;overflow:hidden;font-size:9px;color:#000;-webkit-text-stroke:0.1px currentColor;color:#000;">2,998</div><div style="position:absolute;left:998.300px;top:426.150px;width:58.700px;height:12.562px;line-height:12.562px;text-align:right;white-space:nowrap;overflow:hidden;font-size:9px;color:#000;-webkit-text-stroke:0.1px currentColor;color:#000;">0</div><div style="position:absolute;left:1060.200px;top:426.150px;width:67.700px;height:12.562px;line-height:12.562px;text-align:right;white-space:nowrap;overflow:hidden;font-size:9px;color:#000;-webkit-text-stroke:0.1px currentColor;color:#000;">0</div><div style="position:absolute;left:1131.100px;top:426.150px;width:48.500px;height:12.562px;line-height:12.562px;text-align:right;white-space:nowrap;overflow:hidden;font-size:9px;color:#000;-webkit-text-stroke:0.1px currentColor;color:#000;">61,4</div><div style="position:absolute;left:1183.100px;top:425.650px;width:31.548px;height:11.463px;background:#00ff00;border:1px solid #287a28;box-sizing:border-box;"></div><div style="position:absolute;left:1183.800px;top:426.150px;width:49.300px;height:12.562px;line-height:12.562px;text-align:center;white-space:nowrap;overflow:hidden;font-size:9px;color:#000;-webkit-text-stroke:0.1px currentColor;">66%</div><div style="position:absolute;left:1235.100px;top:426.150px;width:56.000px;height:12.562px;line-height:12.562px;text-align:right;white-space:nowrap;overflow:hidden;font-size:9px;color:#000;-webkit-text-stroke:0.1px currentColor;color:#000;">1345,069</div><div style="position:absolute;left:1433.400px;top:426.150px;width:46.100px;height:12.562px;line-height:12.562px;text-align:right;white-space:nowrap;overflow:hidden;font-size:9px;color:#000;-webkit-text-stroke:0.1px currentColor;color:#000;">0</div><div style="position:absolute;left:13.900px;top:437.613px;width:1467.800px;height:1.000px;background:rgba(255,255,255,0.8);"></div><div style="position:absolute;left:4.500px;top:437.613px;width:9.400px;height:1.000px;background:#ececec;"></div><div style="position:absolute;left:13.900px;top:438.613px;width:1467.800px;height:14.062px;background:#40ffff;"></div><div style="position:absolute;left:44.900px;top:440.213px;width:93.000px;height:12.562px;line-height:12.562px;text-align:left;white-space:nowrap;overflow:hidden;font-size:8.65px;color:#000;-webkit-text-stroke:0.1px currentColor;color:#000;">Абыйский улус</div><div style="position:absolute;left:140.900px;top:440.213px;width:93.000px;height:12.562px;line-height:12.562px;text-align:left;white-space:nowrap;overflow:hidden;font-size:8.65px;color:#000;-webkit-text-stroke:0.1px currentColor;color:#000;">с. Сутуруоха</div><div style="position:absolute;left:236.900px;top:440.213px;width:375.400px;height:12.562px;line-height:12.562px;text-align:left;white-space:nowrap;overflow:hidden;font-size:8.65px;color:#000;-webkit-text-stroke:0.1px currentColor;color:#000;">Итого по нас. пункту</div><div style="position:absolute;left:615.300px;top:440.213px;width:186.700px;height:12.562px;line-height:12.562px;text-align:left;white-space:nowrap;overflow:hidden;font-size:8.65px;color:#000;-webkit-text-stroke:0.1px currentColor;color:#000;">Зырянский уголь</div><div style="position:absolute;left:804.300px;top:440.213px;width:68.200px;height:12.562px;line-height:12.562px;text-align:right;white-space:nowrap;overflow:hidden;font-size:9px;color:#000;-webkit-text-stroke:0.1px currentColor;color:#000;">241,632</div><div style="position:absolute;left:875.700px;top:440.213px;width:57.600px;height:12.562px;line-height:12.562px;text-align:right;white-space:nowrap;overflow:hidden;font-size:9px;color:#000;-webkit-text-stroke:0.1px currentColor;color:#000;">249,48</div><div style="position:absolute;left:936.500px;top:440.213px;width:58.600px;height:12.562px;line-height:12.562px;text-align:right;white-space:nowrap;overflow:hidden;font-size:9px;color:#000;-webkit-text-stroke:0.1px currentColor;color:#000;">8,048</div><div style="position:absolute;left:998.300px;top:440.213px;width:58.700px;height:12.562px;line-height:12.562px;text-align:right;white-space:nowrap;overflow:hidden;font-size:9px;color:#000;-webkit-text-stroke:0.1px currentColor;color:#000;">300</div><div style="position:absolute;left:1060.200px;top:440.213px;width:67.700px;height:12.562px;line-height:12.562px;text-align:right;white-space:nowrap;overflow:hidden;font-size:9px;color:#000;-webkit-text-stroke:0.1px currentColor;color:#000;">0</div><div style="position:absolute;left:1131.100px;top:440.213px;width:48.500px;height:12.562px;line-height:12.562px;text-align:right;white-space:nowrap;overflow:hidden;font-size:9px;color:#000;-webkit-text-stroke:0.1px currentColor;color:#000;">170</div><div style="position:absolute;left:1183.100px;top:439.713px;width:32.504px;height:11.463px;background:#00ff00;border:1px solid #287a28;box-sizing:border-box;"></div><div style="position:absolute;left:1183.800px;top:440.213px;width:49.300px;height:12.562px;line-height:12.562px;text-align:center;white-space:nowrap;overflow:hidden;font-size:9px;color:#000;-webkit-text-stroke:0.1px currentColor;">68%</div><div style="position:absolute;left:1235.100px;top:440.213px;width:56.000px;height:12.562px;line-height:12.562px;text-align:right;white-space:nowrap;overflow:hidden;font-size:9px;color:#000;-webkit-text-stroke:0.1px currentColor;color:#000;">371,632</div><div style="position:absolute;left:1433.400px;top:440.213px;width:46.100px;height:12.562px;line-height:12.562px;text-align:right;white-space:nowrap;overflow:hidden;font-size:9px;color:#000;-webkit-text-stroke:0.1px currentColor;color:#000;">0</div><div style="position:absolute;left:13.900px;top:451.675px;width:1467.800px;height:1.000px;background:rgba(255,255,255,0.8);"></div><div style="position:absolute;left:4.500px;top:451.675px;width:9.400px;height:1.000px;background:#ececec;"></div><div style="position:absolute;left:13.900px;top:452.675px;width:1467.800px;height:14.062px;background:#40ffff;"></div><div style="position:absolute;left:44.900px;top:454.275px;width:93.000px;height:12.562px;line-height:12.562px;text-align:left;white-space:nowrap;overflow:hidden;font-size:8.65px;color:#000;-webkit-text-stroke:0.1px currentColor;color:#000;">Абыйский улус</div><div style="position:absolute;left:140.900px;top:454.275px;width:93.000px;height:12.562px;line-height:12.562px;text-align:left;white-space:nowrap;overflow:hidden;font-size:8.65px;color:#000;-webkit-text-stroke:0.1px currentColor;color:#000;">с. Сыаганнах</div><div style="position:absolute;left:236.900px;top:454.275px;width:375.400px;height:12.562px;line-height:12.562px;text-align:left;white-space:nowrap;overflow:hidden;font-size:8.65px;color:#000;-webkit-text-stroke:0.1px currentColor;color:#000;">Итого по нас. пункту</div><div style="position:absolute;left:615.300px;top:454.275px;width:186.700px;height:12.562px;line-height:12.562px;text-align:left;white-space:nowrap;overflow:hidden;font-size:8.65px;color:#000;-webkit-text-stroke:0.1px currentColor;color:#000;">Зырянский уголь</div><div style="position:absolute;left:804.300px;top:454.275px;width:68.200px;height:12.562px;line-height:12.562px;text-align:right;white-space:nowrap;overflow:hidden;font-size:9px;color:#000;-webkit-text-stroke:0.1px currentColor;color:#000;">2027,49</div><div style="position:absolute;left:875.700px;top:454.275px;width:57.600px;height:12.562px;line-height:12.562px;text-align:right;white-space:nowrap;overflow:hidden;font-size:9px;color:#000;-webkit-text-stroke:0.1px currentColor;color:#000;">282,126</div><div style="position:absolute;left:936.500px;top:454.275px;width:58.600px;height:12.562px;line-height:12.562px;text-align:right;white-space:nowrap;overflow:hidden;font-size:9px;color:#000;-webkit-text-stroke:0.1px currentColor;color:#000;">9,101</div><div style="position:absolute;left:998.300px;top:454.275px;width:58.700px;height:12.562px;line-height:12.562px;text-align:right;white-space:nowrap;overflow:hidden;font-size:9px;color:#000;-webkit-text-stroke:0.1px currentColor;color:#000;">682,72</div><div style="position:absolute;left:1060.200px;top:454.275px;width:67.700px;height:12.562px;line-height:12.562px;text-align:right;white-space:nowrap;overflow:hidden;font-size:9px;color:#000;-webkit-text-stroke:0.1px currentColor;color:#000;">0</div><div style="position:absolute;left:1131.100px;top:454.275px;width:48.500px;height:12.562px;line-height:12.562px;text-align:right;white-space:nowrap;overflow:hidden;font-size:9px;color:#000;-webkit-text-stroke:0.1px currentColor;color:#000;">189</div><div style="position:absolute;left:1183.100px;top:453.775px;width:32.026px;height:11.463px;background:#00ff00;border:1px solid #287a28;box-sizing:border-box;"></div><div style="position:absolute;left:1183.800px;top:454.275px;width:49.300px;height:12.562px;line-height:12.562px;text-align:center;white-space:nowrap;overflow:hidden;font-size:9px;color:#000;-webkit-text-stroke:0.1px currentColor;">67%</div><div style="position:absolute;left:1235.100px;top:454.275px;width:56.000px;height:12.562px;line-height:12.562px;text-align:right;white-space:nowrap;overflow:hidden;font-size:9px;color:#000;-webkit-text-stroke:0.1px currentColor;color:#000;">2521,21</div><div style="position:absolute;left:1433.400px;top:454.275px;width:46.100px;height:12.562px;line-height:12.562px;text-align:right;white-space:nowrap;overflow:hidden;font-size:9px;color:#000;-webkit-text-stroke:0.1px currentColor;color:#000;">0</div><div style="position:absolute;left:13.900px;top:465.738px;width:1467.800px;height:1.000px;background:rgba(255,255,255,0.8);"></div><div style="position:absolute;left:4.500px;top:465.738px;width:9.400px;height:1.000px;background:#ececec;"></div><div style="position:absolute;left:13.900px;top:466.738px;width:1467.800px;height:14.062px;background:#00ffff;"></div><div style="position:absolute;left:44.900px;top:468.338px;width:93.000px;height:12.562px;line-height:12.562px;text-align:left;white-space:nowrap;overflow:hidden;font-size:8.65px;color:#000;-webkit-text-stroke:0.1px currentColor;color:#000;">Абыйский улус</div><div style="position:absolute;left:236.900px;top:468.338px;width:375.400px;height:12.562px;line-height:12.562px;text-align:left;white-space:nowrap;overflow:hidden;font-size:8.65px;color:#000;-webkit-text-stroke:0.1px currentColor;color:#000;">Итого по виду топлива</div><div style="position:absolute;left:615.300px;top:468.338px;width:186.700px;height:12.562px;line-height:12.562px;text-align:left;white-space:nowrap;overflow:hidden;font-size:8.65px;color:#000;-webkit-text-stroke:0.1px currentColor;color:#000;">Зырянский уголь</div><div style="position:absolute;left:804.300px;top:468.338px;width:68.200px;height:12.562px;line-height:12.562px;text-align:right;white-space:nowrap;overflow:hidden;font-size:9px;color:#000;-webkit-text-stroke:0.1px currentColor;color:#000;">16124,551</div><div style="position:absolute;left:875.700px;top:468.338px;width:57.600px;height:12.562px;line-height:12.562px;text-align:right;white-space:nowrap;overflow:hidden;font-size:9px;color:#000;-webkit-text-stroke:0.1px currentColor;color:#000;">2056,839</div><div style="position:absolute;left:936.500px;top:468.338px;width:58.600px;height:12.562px;line-height:12.562px;text-align:right;white-space:nowrap;overflow:hidden;font-size:9px;color:#000;-webkit-text-stroke:0.1px currentColor;color:#000;">66,35</div><div style="position:absolute;left:998.300px;top:468.338px;width:58.700px;height:12.562px;line-height:12.562px;text-align:right;white-space:nowrap;overflow:hidden;font-size:9px;color:#000;-webkit-text-stroke:0.1px currentColor;color:#000;">2958,16</div><div style="position:absolute;left:1060.200px;top:468.338px;width:67.700px;height:12.562px;line-height:12.562px;text-align:right;white-space:nowrap;overflow:hidden;font-size:9px;color:#000;-webkit-text-stroke:0.1px currentColor;color:#000;">2958,16</div><div style="position:absolute;left:1131.100px;top:468.338px;width:48.500px;height:12.562px;line-height:12.562px;text-align:right;white-space:nowrap;overflow:hidden;font-size:9px;color:#000;-webkit-text-stroke:0.1px currentColor;color:#000;">1451,04</div><div style="position:absolute;left:1183.100px;top:467.838px;width:33.938px;height:11.463px;background:#00ff00;border:1px solid #287a28;box-sizing:border-box;"></div><div style="position:absolute;left:1183.800px;top:468.338px;width:49.300px;height:12.562px;line-height:12.562px;text-align:center;white-space:nowrap;overflow:hidden;font-size:9px;color:#000;-webkit-text-stroke:0.1px currentColor;">71%</div><div style="position:absolute;left:1235.100px;top:468.338px;width:56.000px;height:12.562px;line-height:12.562px;text-align:right;white-space:nowrap;overflow:hidden;font-size:9px;color:#000;-webkit-text-stroke:0.1px currentColor;color:#000;">14673,511</div><div style="position:absolute;left:1433.400px;top:468.338px;width:46.100px;height:12.562px;line-height:12.562px;text-align:right;white-space:nowrap;overflow:hidden;font-size:9px;color:#000;-webkit-text-stroke:0.1px currentColor;color:#000;">0</div><div style="position:absolute;left:13.900px;top:479.800px;width:1467.800px;height:1.000px;background:rgba(255,255,255,0.8);"></div><div style="position:absolute;left:4.500px;top:479.800px;width:9.400px;height:1.000px;background:#ececec;"></div><div style="position:absolute;left:13.900px;top:480.800px;width:1467.800px;height:14.062px;background:#00ffff;"></div><div style="position:absolute;left:44.900px;top:482.400px;width:93.000px;height:12.562px;line-height:12.562px;text-align:left;white-space:nowrap;overflow:hidden;font-size:8.65px;color:#000;-webkit-text-stroke:0.1px currentColor;color:#000;">Абыйский улус</div><div style="position:absolute;left:236.900px;top:482.400px;width:375.400px;height:12.562px;line-height:12.562px;text-align:left;white-space:nowrap;overflow:hidden;font-size:8.65px;color:#000;-webkit-text-stroke:0.1px currentColor;color:#000;">Итого по виду топлива</div><div style="position:absolute;left:615.300px;top:482.400px;width:186.700px;height:12.562px;line-height:12.562px;text-align:left;white-space:nowrap;overflow:hidden;font-size:8.65px;color:#000;-webkit-text-stroke:0.1px currentColor;color:#000;">Сырая нефть</div><div style="position:absolute;left:804.300px;top:482.400px;width:68.200px;height:12.562px;line-height:12.562px;text-align:right;white-space:nowrap;overflow:hidden;font-size:9px;color:#000;-webkit-text-stroke:0.1px currentColor;color:#000;">886,659</div><div style="position:absolute;left:875.700px;top:482.400px;width:57.600px;height:12.562px;line-height:12.562px;text-align:right;white-space:nowrap;overflow:hidden;font-size:9px;color:#000;-webkit-text-stroke:0.1px currentColor;color:#000;">408,153</div><div style="position:absolute;left:936.500px;top:482.400px;width:58.600px;height:12.562px;line-height:12.562px;text-align:right;white-space:nowrap;overflow:hidden;font-size:9px;color:#000;-webkit-text-stroke:0.1px currentColor;color:#000;">13,167</div><div style="position:absolute;left:998.300px;top:482.400px;width:58.700px;height:12.562px;line-height:12.562px;text-align:right;white-space:nowrap;overflow:hidden;font-size:9px;color:#000;-webkit-text-stroke:0.1px currentColor;color:#000;">270</div><div style="position:absolute;left:1060.200px;top:482.400px;width:67.700px;height:12.562px;line-height:12.562px;text-align:right;white-space:nowrap;overflow:hidden;font-size:9px;color:#000;-webkit-text-stroke:0.1px currentColor;color:#000;">270</div><div style="position:absolute;left:1131.100px;top:482.400px;width:48.500px;height:12.562px;line-height:12.562px;text-align:right;white-space:nowrap;overflow:hidden;font-size:9px;color:#000;-webkit-text-stroke:0.1px currentColor;color:#000;">288,215</div><div style="position:absolute;left:1183.100px;top:481.900px;width:33.938px;height:11.463px;background:#00ff00;border:1px solid #287a28;box-sizing:border-box;"></div><div style="position:absolute;left:1183.800px;top:482.400px;width:49.300px;height:12.562px;line-height:12.562px;text-align:center;white-space:nowrap;overflow:hidden;font-size:9px;color:#000;-webkit-text-stroke:0.1px currentColor;">71%</div><div style="position:absolute;left:1235.100px;top:482.400px;width:56.000px;height:12.562px;line-height:12.562px;text-align:right;white-space:nowrap;overflow:hidden;font-size:9px;color:#000;-webkit-text-stroke:0.1px currentColor;color:#000;">598,444</div><div style="position:absolute;left:1433.400px;top:482.400px;width:46.100px;height:12.562px;line-height:12.562px;text-align:right;white-space:nowrap;overflow:hidden;font-size:9px;color:#000;-webkit-text-stroke:0.1px currentColor;color:#000;">0</div><div style="position:absolute;left:13.900px;top:493.863px;width:1467.800px;height:1.000px;background:rgba(255,255,255,0.8);"></div><div style="position:absolute;left:4.500px;top:493.863px;width:9.400px;height:1.000px;background:#ececec;"></div><div style="position:absolute;left:13.400px;top:143.300px;width:1.000px;height:351.562px;background:rgba(255,255,255,0.8);"></div><div style="position:absolute;left:42.700px;top:143.300px;width:1.000px;height:351.562px;background:rgba(255,255,255,0.8);"></div><div style="position:absolute;left:138.700px;top:143.300px;width:1.000px;height:351.562px;background:rgba(255,255,255,0.8);"></div><div style="position:absolute;left:234.700px;top:143.300px;width:1.000px;height:351.562px;background:rgba(255,255,255,0.8);"></div><div style="position:absolute;left:613.100px;top:143.300px;width:1.000px;height:351.562px;background:rgba(255,255,255,0.8);"></div><div style="position:absolute;left:802.800px;top:143.300px;width:1.000px;height:351.562px;background:rgba(255,255,255,0.8);"></div><div style="position:absolute;left:874.200px;top:143.300px;width:1.000px;height:351.562px;background:rgba(255,255,255,0.8);"></div><div style="position:absolute;left:935.000px;top:143.300px;width:1.000px;height:351.562px;background:rgba(255,255,255,0.8);"></div><div style="position:absolute;left:996.800px;top:143.300px;width:1.000px;height:351.562px;background:rgba(255,255,255,0.8);"></div><div style="position:absolute;left:1058.700px;top:143.300px;width:1.000px;height:351.562px;background:rgba(255,255,255,0.8);"></div><div style="position:absolute;left:1129.600px;top:143.300px;width:1.000px;height:351.562px;background:rgba(255,255,255,0.8);"></div><div style="position:absolute;left:1181.300px;top:143.300px;width:1.000px;height:351.562px;background:rgba(255,255,255,0.8);"></div><div style="position:absolute;left:1233.600px;top:143.300px;width:1.000px;height:351.562px;background:rgba(255,255,255,0.8);"></div><div style="position:absolute;left:1292.800px;top:143.300px;width:1.000px;height:351.562px;background:rgba(255,255,255,0.8);"></div><div style="position:absolute;left:1345.600px;top:143.300px;width:1.000px;height:351.562px;background:rgba(255,255,255,0.8);"></div><div style="position:absolute;left:1431.900px;top:143.300px;width:1.000px;height:351.562px;background:rgba(255,255,255,0.8);"></div><div style="position:absolute;left:1481.200px;top:143.300px;width:1.000px;height:351.562px;background:rgba(255,255,255,0.8);"></div><div style="position:absolute;left:13.400px;top:143.300px;width:1.000px;height:351.562px;background:#e4e4e4;"></div><div style="position:absolute;left:1482.000px;top:71.000px;width:14.000px;height:431.000px;background:#f0f0f0;"></div><div style="position:absolute;left:1483.300px;top:279.700px;width:11.400px;height:12.900px;background:#cdcdcd;"></div><svg style="position:absolute;left:1484px;top:76px" width="10" height="8"><path d="M1.5 5.5 L5 2 L8.5 5.5" fill="none" stroke="#505050" stroke-width="1.2"/></svg><svg style="position:absolute;left:1484px;top:489px" width="10" height="8"><path d="M1.5 2 L5 5.5 L8.5 2" fill="none" stroke="#505050" stroke-width="1.2"/></svg><div style="position:absolute;left:0.000px;top:502.000px;width:1500.000px;height:1.200px;background:#a0a0a0;"></div><div style="position:absolute;left:0.000px;top:505.000px;width:1500.000px;height:1.200px;background:#b8b8b8;"></div><div style="position:absolute;left:289.300px;top:507.500px;height:18.000px;line-height:18.000px;text-align:left;white-space:nowrap;overflow:hidden;font-size:15.24px;font-weight:bold;font-style:italic;color:#0a0a78;">Приход / Перемещение</div><div style="position:absolute;left:1097.000px;top:507.500px;height:18.000px;line-height:18.000px;text-align:left;white-space:nowrap;overflow:hidden;font-size:15.24px;font-weight:bold;font-style:italic;color:#0a0a78;">Расход</div><div style="position:absolute;left:3.700px;top:525.800px;width:746.300px;height:243.200px;border:1px solid #a6a6a6;border-right:none;background:#fff;box-sizing:border-box;"></div><div style="position:absolute;left:13.500px;top:527.000px;width:1.000px;height:35.700px;background:#e2e2e2;"></div><div style="position:absolute;left:136.800px;top:544.200px;width:1.000px;height:18.500px;background:#e2e2e2;"></div><div style="position:absolute;left:260.500px;top:527.000px;width:1.000px;height:35.700px;background:#e2e2e2;"></div><div style="position:absolute;left:384.000px;top:544.200px;width:1.000px;height:18.500px;background:#e2e2e2;"></div><div style="position:absolute;left:507.300px;top:527.000px;width:1.000px;height:35.700px;background:#e2e2e2;"></div><div style="position:absolute;left:631.300px;top:527.000px;width:1.000px;height:35.700px;background:#e2e2e2;"></div><div style="position:absolute;left:682.200px;top:527.000px;width:1.000px;height:35.700px;background:#e2e2e2;"></div><div style="position:absolute;left:734.300px;top:527.000px;width:1.000px;height:35.700px;background:#e2e2e2;"></div><div style="position:absolute;left:14.000px;top:562.200px;width:720.800px;height:1.000px;background:#e2e2e2;"></div><div style="position:absolute;left:14.000px;top:543.700px;width:247.000px;height:1.000px;background:#e2e2e2;"></div><div style="position:absolute;left:261.000px;top:543.700px;width:246.800px;height:1.000px;background:#e2e2e2;"></div><div style="position:absolute;left:136.800px;top:544.200px;width:1.000px;height:18.500px;background:#e2e2e2;"></div><div style="position:absolute;left:384.000px;top:544.200px;width:1.000px;height:18.500px;background:#e2e2e2;"></div><div style="position:absolute;left:14.00px;top:531.95px;width:247.00px;line-height:9.9px;text-align:center;font-size:9px;font-weight:bold;color:#921818;white-space:nowrap">Откуда</div><div style="position:absolute;left:261.00px;top:531.95px;width:246.80px;line-height:9.9px;text-align:center;font-size:9px;font-weight:bold;color:#921818;white-space:nowrap">Куда</div><div style="position:absolute;left:14.00px;top:549.80px;width:123.30px;line-height:9.9px;text-align:center;font-size:9px;font-weight:bold;color:#921818;white-space:nowrap">Нас. пункт</div><div style="position:absolute;left:137.30px;top:549.80px;width:123.70px;line-height:9.9px;text-align:center;font-size:9px;font-weight:bold;color:#921818;white-space:nowrap">Наименование</div><div style="position:absolute;left:261.00px;top:549.80px;width:123.50px;line-height:9.9px;text-align:center;font-size:9px;font-weight:bold;color:#921818;white-space:nowrap">Нас. пункт</div><div style="position:absolute;left:384.50px;top:549.80px;width:123.30px;line-height:9.9px;text-align:center;font-size:9px;font-weight:bold;color:#921818;white-space:nowrap">Наименование</div><div style="position:absolute;left:507.80px;top:541.20px;width:124.00px;line-height:9.9px;text-align:center;font-size:9px;font-weight:bold;color:#921818;white-space:nowrap">Вид топлива</div><div style="position:absolute;left:631.80px;top:541.20px;width:50.90px;line-height:9.9px;text-align:center;font-size:9px;font-weight:bold;color:#921818;white-space:nowrap">Дата</div><div style="position:absolute;left:682.70px;top:541.20px;width:52.10px;line-height:9.9px;text-align:center;font-size:9px;font-weight:bold;color:#921818;white-space:nowrap">Кол-во</div><div style="position:absolute;left:14.500px;top:562.700px;width:122.800px;height:13.312px;background:#858585;"></div><div style="position:absolute;left:136.800px;top:562.700px;width:1.000px;height:14.062px;background:#ececec;"></div><div style="position:absolute;left:16.200px;top:564.300px;width:120.800px;height:12.562px;line-height:12.562px;text-align:left;white-space:nowrap;overflow:hidden;font-size:8.65px;color:#000;-webkit-text-stroke:0.15px currentColor;color:#ececec;">п. Белая гора</div><div style="position:absolute;left:137.800px;top:562.700px;width:123.200px;height:13.312px;background:#858585;"></div><div style="position:absolute;left:260.500px;top:562.700px;width:1.000px;height:14.062px;background:#ececec;"></div><div style="position:absolute;left:139.500px;top:564.300px;width:121.200px;height:12.562px;line-height:12.562px;text-align:left;white-space:nowrap;overflow:hidden;font-size:8.65px;color:#000;-webkit-text-stroke:0.15px currentColor;color:#ececec;">Белогоская нефтебаза АО "Саханефтегазсбыт" (б/н)</div><div style="position:absolute;left:261.500px;top:562.700px;width:123.000px;height:13.312px;background:#858585;"></div><div style="position:absolute;left:384.000px;top:562.700px;width:1.000px;height:14.062px;background:#ececec;"></div><div style="position:absolute;left:263.200px;top:564.300px;width:121.000px;height:12.562px;line-height:12.562px;text-align:left;white-space:nowrap;overflow:hidden;font-size:8.65px;color:#000;-webkit-text-stroke:0.15px currentColor;color:#ececec;">п. Белая гора</div><div style="position:absolute;left:385.000px;top:562.700px;width:122.800px;height:13.312px;background:#858585;"></div><div style="position:absolute;left:507.300px;top:562.700px;width:1.000px;height:14.062px;background:#ececec;"></div><div style="position:absolute;left:386.700px;top:564.300px;width:120.800px;height:12.562px;line-height:12.562px;text-align:left;white-space:nowrap;overflow:hidden;font-size:8.65px;color:#000;-webkit-text-stroke:0.15px currentColor;color:#ececec;">АО Абыйское (АБЫ 01/007)</div><div style="position:absolute;left:508.300px;top:562.700px;width:123.500px;height:13.312px;background:#858585;"></div><div style="position:absolute;left:631.300px;top:562.700px;width:1.000px;height:14.062px;background:#ececec;"></div><div style="position:absolute;left:510.000px;top:564.300px;width:121.500px;height:12.562px;line-height:12.562px;text-align:left;white-space:nowrap;overflow:hidden;font-size:8.65px;color:#000;-webkit-text-stroke:0.15px currentColor;color:#ececec;">Сырая нефть</div><div style="position:absolute;left:632.300px;top:562.700px;width:50.400px;height:13.312px;background:#858585;"></div><div style="position:absolute;left:682.200px;top:562.700px;width:1.000px;height:14.062px;background:#ececec;"></div><div style="position:absolute;left:634.000px;top:564.300px;width:48.400px;height:12.562px;line-height:12.562px;text-align:left;white-space:nowrap;overflow:hidden;font-size:9px;color:#000;-webkit-text-stroke:0.1px currentColor;color:#ececec;">21.03.2022</div><div style="position:absolute;left:683.200px;top:562.700px;width:51.600px;height:13.312px;background:#858585;"></div><div style="position:absolute;left:734.300px;top:562.700px;width:1.000px;height:14.062px;background:#ececec;"></div><div style="position:absolute;left:683.700px;top:564.300px;width:48.100px;height:12.562px;line-height:12.562px;text-align:right;white-space:nowrap;overflow:hidden;font-size:9px;color:#000;-webkit-text-stroke:0.1px currentColor;color:#ececec;">7,5</div><div style="position:absolute;left:4.500px;top:576.263px;width:730.300px;height:1.000px;background:#ececec;"></div><svg style="position:absolute;left:7px;top:566.20px" width="5" height="8"><path d="M0.5 0.5 L4 3.8 L0.5 7Z" fill="#222"/></svg><div style="position:absolute;left:136.800px;top:576.763px;width:1.000px;height:14.062px;background:#ececec;"></div><div style="position:absolute;left:16.200px;top:578.363px;width:120.800px;height:12.562px;line-height:12.562px;text-align:left;white-space:nowrap;overflow:hidden;font-size:8.65px;color:#000;-webkit-text-stroke:0.15px currentColor;color:#1a1a1a;">п. Белая гора</div><div style="position:absolute;left:260.500px;top:576.763px;width:1.000px;height:14.062px;background:#ececec;"></div><div style="position:absolute;left:139.500px;top:578.363px;width:121.200px;height:12.562px;line-height:12.562px;text-align:left;white-space:nowrap;overflow:hidden;font-size:8.65px;color:#000;-webkit-text-stroke:0.15px currentColor;color:#1a1a1a;">Белогоская нефтебаза АО "Саханефтегазсбыт" (б/н)</div><div style="position:absolute;left:384.000px;top:576.763px;width:1.000px;height:14.062px;background:#ececec;"></div><div style="position:absolute;left:263.200px;top:578.363px;width:121.000px;height:12.562px;line-height:12.562px;text-align:left;white-space:nowrap;overflow:hidden;font-size:8.65px;color:#000;-webkit-text-stroke:0.15px currentColor;color:#1a1a1a;">п. Белая гора</div><div style="position:absolute;left:507.300px;top:576.763px;width:1.000px;height:14.062px;background:#ececec;"></div><div style="position:absolute;left:386.700px;top:578.363px;width:120.800px;height:12.562px;line-height:12.562px;text-align:left;white-space:nowrap;overflow:hidden;font-size:8.65px;color:#000;-webkit-text-stroke:0.15px currentColor;color:#1a1a1a;">АО Абыйское (АБЫ 01/007)</div><div style="position:absolute;left:631.300px;top:576.763px;width:1.000px;height:14.062px;background:#ececec;"></div><div style="position:absolute;left:510.000px;top:578.363px;width:121.500px;height:12.562px;line-height:12.562px;text-align:left;white-space:nowrap;overflow:hidden;font-size:8.65px;color:#000;-webkit-text-stroke:0.15px currentColor;color:#1a1a1a;">Сырая нефть</div><div style="position:absolute;left:682.200px;top:576.763px;width:1.000px;height:14.062px;background:#ececec;"></div><div style="position:absolute;left:634.000px;top:578.363px;width:48.400px;height:12.562px;line-height:12.562px;text-align:left;white-space:nowrap;overflow:hidden;font-size:9px;color:#000;-webkit-text-stroke:0.1px currentColor;color:#1a1a1a;">18.03.2022</div><div style="position:absolute;left:734.300px;top:576.763px;width:1.000px;height:14.062px;background:#ececec;"></div><div style="position:absolute;left:683.700px;top:578.363px;width:48.100px;height:12.562px;line-height:12.562px;text-align:right;white-space:nowrap;overflow:hidden;font-size:9px;color:#000;-webkit-text-stroke:0.1px currentColor;color:#1a1a1a;">15</div><div style="position:absolute;left:4.500px;top:590.325px;width:730.300px;height:1.000px;background:#ececec;"></div><div style="position:absolute;left:136.800px;top:590.825px;width:1.000px;height:14.062px;background:#ececec;"></div><div style="position:absolute;left:16.200px;top:592.425px;width:120.800px;height:12.562px;line-height:12.562px;text-align:left;white-space:nowrap;overflow:hidden;font-size:8.65px;color:#000;-webkit-text-stroke:0.15px currentColor;color:#1a1a1a;">п. Белая гора</div><div style="position:absolute;left:260.500px;top:590.825px;width:1.000px;height:14.062px;background:#ececec;"></div><div style="position:absolute;left:139.500px;top:592.425px;width:121.200px;height:12.562px;line-height:12.562px;text-align:left;white-space:nowrap;overflow:hidden;font-size:8.65px;color:#000;-webkit-text-stroke:0.15px currentColor;color:#1a1a1a;">Белогоская нефтебаза АО "Саханефтегазсбыт" (б/н)</div><div style="position:absolute;left:384.000px;top:590.825px;width:1.000px;height:14.062px;background:#ececec;"></div><div style="position:absolute;left:263.200px;top:592.425px;width:121.000px;height:12.562px;line-height:12.562px;text-align:left;white-space:nowrap;overflow:hidden;font-size:8.65px;color:#000;-webkit-text-stroke:0.15px currentColor;color:#1a1a1a;">п. Белая гора</div><div style="position:absolute;left:507.300px;top:590.825px;width:1.000px;height:14.062px;background:#ececec;"></div><div style="position:absolute;left:386.700px;top:592.425px;width:120.800px;height:12.562px;line-height:12.562px;text-align:left;white-space:nowrap;overflow:hidden;font-size:8.65px;color:#000;-webkit-text-stroke:0.15px currentColor;color:#1a1a1a;">АО Абыйское (АБЫ 01/007)</div><div style="position:absolute;left:631.300px;top:590.825px;width:1.000px;height:14.062px;background:#ececec;"></div><div style="position:absolute;left:510.000px;top:592.425px;width:121.500px;height:12.562px;line-height:12.562px;text-align:left;white-space:nowrap;overflow:hidden;font-size:8.65px;color:#000;-webkit-text-stroke:0.15px currentColor;color:#1a1a1a;">Сырая нефть</div><div style="position:absolute;left:682.200px;top:590.825px;width:1.000px;height:14.062px;background:#ececec;"></div><div style="position:absolute;left:634.000px;top:592.425px;width:48.400px;height:12.562px;line-height:12.562px;text-align:left;white-space:nowrap;overflow:hidden;font-size:9px;color:#000;-webkit-text-stroke:0.1px currentColor;color:#1a1a1a;">17.03.2022</div><div style="position:absolute;left:734.300px;top:590.825px;width:1.000px;height:14.062px;background:#ececec;"></div><div style="position:absolute;left:683.700px;top:592.425px;width:48.100px;height:12.562px;line-height:12.562px;text-align:right;white-space:nowrap;overflow:hidden;font-size:9px;color:#000;-webkit-text-stroke:0.1px currentColor;color:#1a1a1a;">7,5</div><div style="position:absolute;left:4.500px;top:604.388px;width:730.300px;height:1.000px;background:#ececec;"></div><div style="position:absolute;left:136.800px;top:604.888px;width:1.000px;height:14.062px;background:#ececec;"></div><div style="position:absolute;left:16.200px;top:606.488px;width:120.800px;height:12.562px;line-height:12.562px;text-align:left;white-space:nowrap;overflow:hidden;font-size:8.65px;color:#000;-webkit-text-stroke:0.15px currentColor;color:#1a1a1a;">п. Белая гора</div><div style="position:absolute;left:260.500px;top:604.888px;width:1.000px;height:14.062px;background:#ececec;"></div><div style="position:absolute;left:139.500px;top:606.488px;width:121.200px;height:12.562px;line-height:12.562px;text-align:left;white-space:nowrap;overflow:hidden;font-size:8.65px;color:#000;-webkit-text-stroke:0.15px currentColor;color:#1a1a1a;">Белогоская нефтебаза АО "Саханефтегазсбыт" (б/н)</div><div style="position:absolute;left:384.000px;top:604.888px;width:1.000px;height:14.062px;background:#ececec;"></div><div style="position:absolute;left:263.200px;top:606.488px;width:121.000px;height:12.562px;line-height:12.562px;text-align:left;white-space:nowrap;overflow:hidden;font-size:8.65px;color:#000;-webkit-text-stroke:0.15px currentColor;color:#1a1a1a;">п. Белая гора</div><div style="position:absolute;left:507.300px;top:604.888px;width:1.000px;height:14.062px;background:#ececec;"></div><div style="position:absolute;left:386.700px;top:606.488px;width:120.800px;height:12.562px;line-height:12.562px;text-align:left;white-space:nowrap;overflow:hidden;font-size:8.65px;color:#000;-webkit-text-stroke:0.15px currentColor;color:#1a1a1a;">АО Абыйское (АБЫ 01/007)</div><div style="position:absolute;left:631.300px;top:604.888px;width:1.000px;height:14.062px;background:#ececec;"></div><div style="position:absolute;left:510.000px;top:606.488px;width:121.500px;height:12.562px;line-height:12.562px;text-align:left;white-space:nowrap;overflow:hidden;font-size:8.65px;color:#000;-webkit-text-stroke:0.15px currentColor;color:#1a1a1a;">Сырая нефть</div><div style="position:absolute;left:682.200px;top:604.888px;width:1.000px;height:14.062px;background:#ececec;"></div><div style="position:absolute;left:634.000px;top:606.488px;width:48.400px;height:12.562px;line-height:12.562px;text-align:left;white-space:nowrap;overflow:hidden;font-size:9px;color:#000;-webkit-text-stroke:0.1px currentColor;color:#1a1a1a;">16.03.2022</div><div style="position:absolute;left:734.300px;top:604.888px;width:1.000px;height:14.062px;background:#ececec;"></div><div style="position:absolute;left:683.700px;top:606.488px;width:48.100px;height:12.562px;line-height:12.562px;text-align:right;white-space:nowrap;overflow:hidden;font-size:9px;color:#000;-webkit-text-stroke:0.1px currentColor;color:#1a1a1a;">7,5</div><div style="position:absolute;left:4.500px;top:618.450px;width:730.300px;height:1.000px;background:#ececec;"></div><div style="position:absolute;left:136.800px;top:618.950px;width:1.000px;height:14.062px;background:#ececec;"></div><div style="position:absolute;left:16.200px;top:620.550px;width:120.800px;height:12.562px;line-height:12.562px;text-align:left;white-space:nowrap;overflow:hidden;font-size:8.65px;color:#000;-webkit-text-stroke:0.15px currentColor;color:#1a1a1a;">п. Белая гора</div><div style="position:absolute;left:260.500px;top:618.950px;width:1.000px;height:14.062px;background:#ececec;"></div><div style="position:absolute;left:139.500px;top:620.550px;width:121.200px;height:12.562px;line-height:12.562px;text-align:left;white-space:nowrap;overflow:hidden;font-size:8.65px;color:#000;-webkit-text-stroke:0.15px currentColor;color:#1a1a1a;">Белогоская нефтебаза АО "Саханефтегазсбыт" (б/н)</div><div style="position:absolute;left:384.000px;top:618.950px;width:1.000px;height:14.062px;background:#ececec;"></div><div style="position:absolute;left:263.200px;top:620.550px;width:121.000px;height:12.562px;line-height:12.562px;text-align:left;white-space:nowrap;overflow:hidden;font-size:8.65px;color:#000;-webkit-text-stroke:0.15px currentColor;color:#1a1a1a;">п. Белая гора</div><div style="position:absolute;left:507.300px;top:618.950px;width:1.000px;height:14.062px;background:#ececec;"></div><div style="position:absolute;left:386.700px;top:620.550px;width:120.800px;height:12.562px;line-height:12.562px;text-align:left;white-space:nowrap;overflow:hidden;font-size:8.65px;color:#000;-webkit-text-stroke:0.15px currentColor;color:#1a1a1a;">АО Абыйское (АБЫ 01/007)</div><div style="position:absolute;left:631.300px;top:618.950px;width:1.000px;height:14.062px;background:#ececec;"></div><div style="position:absolute;left:510.000px;top:620.550px;width:121.500px;height:12.562px;line-height:12.562px;text-align:left;white-space:nowrap;overflow:hidden;font-size:8.65px;color:#000;-webkit-text-stroke:0.15px currentColor;color:#1a1a1a;">Сырая нефть</div><div style="position:absolute;left:682.200px;top:618.950px;width:1.000px;height:14.062px;background:#ececec;"></div><div style="position:absolute;left:634.000px;top:620.550px;width:48.400px;height:12.562px;line-height:12.562px;text-align:left;white-space:nowrap;overflow:hidden;font-size:9px;color:#000;-webkit-text-stroke:0.1px currentColor;color:#1a1a1a;">15.03.2022</div><div style="position:absolute;left:734.300px;top:618.950px;width:1.000px;height:14.062px;background:#ececec;"></div><div style="position:absolute;left:683.700px;top:620.550px;width:48.100px;height:12.562px;line-height:12.562px;text-align:right;white-space:nowrap;overflow:hidden;font-size:9px;color:#000;-webkit-text-stroke:0.1px currentColor;color:#1a1a1a;">7,5</div><div style="position:absolute;left:4.500px;top:632.513px;width:730.300px;height:1.000px;background:#ececec;"></div><div style="position:absolute;left:136.800px;top:633.013px;width:1.000px;height:14.062px;background:#ececec;"></div><div style="position:absolute;left:16.200px;top:634.613px;width:120.800px;height:12.562px;line-height:12.562px;text-align:left;white-space:nowrap;overflow:hidden;font-size:8.65px;color:#000;-webkit-text-stroke:0.15px currentColor;color:#1a1a1a;">п. Белая гора</div><div style="position:absolute;left:260.500px;top:633.013px;width:1.000px;height:14.062px;background:#ececec;"></div><div style="position:absolute;left:139.500px;top:634.613px;width:121.200px;height:12.562px;line-height:12.562px;text-align:left;white-space:nowrap;overflow:hidden;font-size:8.65px;color:#000;-webkit-text-stroke:0.15px currentColor;color:#1a1a1a;">Белогоская нефтебаза АО "Саханефтегазсбыт" (б/н)</div><div style="position:absolute;left:384.000px;top:633.013px;width:1.000px;height:14.062px;background:#ececec;"></div><div style="position:absolute;left:263.200px;top:634.613px;width:121.000px;height:12.562px;line-height:12.562px;text-align:left;white-space:nowrap;overflow:hidden;font-size:8.65px;color:#000;-webkit-text-stroke:0.15px currentColor;color:#1a1a1a;">п. Белая гора</div><div style="position:absolute;left:507.300px;top:633.013px;width:1.000px;height:14.062px;background:#ececec;"></div><div style="position:absolute;left:386.700px;top:634.613px;width:120.800px;height:12.562px;line-height:12.562px;text-align:left;white-space:nowrap;overflow:hidden;font-size:8.65px;color:#000;-webkit-text-stroke:0.15px currentColor;color:#1a1a1a;">АО Абыйское (АБЫ 01/007)</div><div style="position:absolute;left:631.300px;top:633.013px;width:1.000px;height:14.062px;background:#ececec;"></div><div style="position:absolute;left:510.000px;top:634.613px;width:121.500px;height:12.562px;line-height:12.562px;text-align:left;white-space:nowrap;overflow:hidden;font-size:8.65px;color:#000;-webkit-text-stroke:0.15px currentColor;color:#1a1a1a;">Сырая нефть</div><div style="position:absolute;left:682.200px;top:633.013px;width:1.000px;height:14.062px;background:#ececec;"></div><div style="position:absolute;left:634.000px;top:634.613px;width:48.400px;height:12.562px;line-height:12.562px;text-align:left;white-space:nowrap;overflow:hidden;font-size:9px;color:#000;-webkit-text-stroke:0.1px currentColor;color:#1a1a1a;">14.03.2022</div><div style="position:absolute;left:734.300px;top:633.013px;width:1.000px;height:14.062px;background:#ececec;"></div><div style="position:absolute;left:683.700px;top:634.613px;width:48.100px;height:12.562px;line-height:12.562px;text-align:right;white-space:nowrap;overflow:hidden;font-size:9px;color:#000;-webkit-text-stroke:0.1px currentColor;color:#1a1a1a;">15</div><div style="position:absolute;left:4.500px;top:646.575px;width:730.300px;height:1.000px;background:#ececec;"></div><div style="position:absolute;left:136.800px;top:647.075px;width:1.000px;height:14.062px;background:#ececec;"></div><div style="position:absolute;left:16.200px;top:648.675px;width:120.800px;height:12.562px;line-height:12.562px;text-align:left;white-space:nowrap;overflow:hidden;font-size:8.65px;color:#000;-webkit-text-stroke:0.15px currentColor;color:#1a1a1a;">п. Белая гора</div><div style="position:absolute;left:260.500px;top:647.075px;width:1.000px;height:14.062px;background:#ececec;"></div><div style="position:absolute;left:139.500px;top:648.675px;width:121.200px;height:12.562px;line-height:12.562px;text-align:left;white-space:nowrap;overflow:hidden;font-size:8.65px;color:#000;-webkit-text-stroke:0.15px currentColor;color:#1a1a1a;">Белогоская нефтебаза АО "Саханефтегазсбыт" (б/н)</div><div style="position:absolute;left:384.000px;top:647.075px;width:1.000px;height:14.062px;background:#ececec;"></div><div style="position:absolute;left:263.200px;top:648.675px;width:121.000px;height:12.562px;line-height:12.562px;text-align:left;white-space:nowrap;overflow:hidden;font-size:8.65px;color:#000;-webkit-text-stroke:0.15px currentColor;color:#1a1a1a;">п. Белая гора</div><div style="position:absolute;left:507.300px;top:647.075px;width:1.000px;height:14.062px;background:#ececec;"></div><div style="position:absolute;left:386.700px;top:648.675px;width:120.800px;height:12.562px;line-height:12.562px;text-align:left;white-space:nowrap;overflow:hidden;font-size:8.65px;color:#000;-webkit-text-stroke:0.15px currentColor;color:#1a1a1a;">АО Абыйское (АБЫ 01/007)</div><div style="position:absolute;left:631.300px;top:647.075px;width:1.000px;height:14.062px;background:#ececec;"></div><div style="position:absolute;left:510.000px;top:648.675px;width:121.500px;height:12.562px;line-height:12.562px;text-align:left;white-space:nowrap;overflow:hidden;font-size:8.65px;color:#000;-webkit-text-stroke:0.15px currentColor;color:#1a1a1a;">Сырая нефть</div><div style="position:absolute;left:682.200px;top:647.075px;width:1.000px;height:14.062px;background:#ececec;"></div><div style="position:absolute;left:634.000px;top:648.675px;width:48.400px;height:12.562px;line-height:12.562px;text-align:left;white-space:nowrap;overflow:hidden;font-size:9px;color:#000;-webkit-text-stroke:0.1px currentColor;color:#1a1a1a;">11.03.2022</div><div style="position:absolute;left:734.300px;top:647.075px;width:1.000px;height:14.062px;background:#ececec;"></div><div style="position:absolute;left:683.700px;top:648.675px;width:48.100px;height:12.562px;line-height:12.562px;text-align:right;white-space:nowrap;overflow:hidden;font-size:9px;color:#000;-webkit-text-stroke:0.1px currentColor;color:#1a1a1a;">15</div><div style="position:absolute;left:4.500px;top:660.638px;width:730.300px;height:1.000px;background:#ececec;"></div><div style="position:absolute;left:136.800px;top:661.138px;width:1.000px;height:14.062px;background:#ececec;"></div><div style="position:absolute;left:16.200px;top:662.738px;width:120.800px;height:12.562px;line-height:12.562px;text-align:left;white-space:nowrap;overflow:hidden;font-size:8.65px;color:#000;-webkit-text-stroke:0.15px currentColor;color:#1a1a1a;">п. Белая гора</div><div style="position:absolute;left:260.500px;top:661.138px;width:1.000px;height:14.062px;background:#ececec;"></div><div style="position:absolute;left:139.500px;top:662.738px;width:121.200px;height:12.562px;line-height:12.562px;text-align:left;white-space:nowrap;overflow:hidden;font-size:8.65px;color:#000;-webkit-text-stroke:0.15px currentColor;color:#1a1a1a;">Белогоская нефтебаза АО "Саханефтегазсбыт" (б/н)</div><div style="position:absolute;left:384.000px;top:661.138px;width:1.000px;height:14.062px;background:#ececec;"></div><div style="position:absolute;left:263.200px;top:662.738px;width:121.000px;height:12.562px;line-height:12.562px;text-align:left;white-space:nowrap;overflow:hidden;font-size:8.65px;color:#000;-webkit-text-stroke:0.15px currentColor;color:#1a1a1a;">п. Белая гора</div><div style="position:absolute;left:507.300px;top:661.138px;width:1.000px;height:14.062px;background:#ececec;"></div><div style="position:absolute;left:386.700px;top:662.738px;width:120.800px;height:12.562px;line-height:12.562px;text-align:left;white-space:nowrap;overflow:hidden;font-size:8.65px;color:#000;-webkit-text-stroke:0.15px currentColor;color:#1a1a1a;">АО Абыйское (АБЫ 01/007)</div><div style="position:absolute;left:631.300px;top:661.138px;width:1.000px;height:14.062px;background:#ececec;"></div><div style="position:absolute;left:510.000px;top:662.738px;width:121.500px;height:12.562px;line-height:12.562px;text-align:left;white-space:nowrap;overflow:hidden;font-size:8.65px;color:#000;-webkit-text-stroke:0.15px currentColor;color:#1a1a1a;">Сырая нефть</div><div style="position:absolute;left:682.200px;top:661.138px;width:1.000px;height:14.062px;background:#ececec;"></div><div style="position:absolute;left:634.000px;top:662.738px;width:48.400px;height:12.562px;line-height:12.562px;text-align:left;white-space:nowrap;overflow:hidden;font-size:9px;color:#000;-webkit-text-stroke:0.1px currentColor;color:#1a1a1a;">09.03.2022</div><div style="position:absolute;left:734.300px;top:661.138px;width:1.000px;height:14.062px;background:#ececec;"></div><div style="position:absolute;left:683.700px;top:662.738px;width:48.100px;height:12.562px;line-height:12.562px;text-align:right;white-space:nowrap;overflow:hidden;font-size:9px;color:#000;-webkit-text-stroke:0.1px currentColor;color:#1a1a1a;">15</div><div style="position:absolute;left:4.500px;top:674.700px;width:730.300px;height:1.000px;background:#ececec;"></div><div style="position:absolute;left:136.800px;top:675.200px;width:1.000px;height:14.062px;background:#ececec;"></div><div style="position:absolute;left:16.200px;top:676.800px;width:120.800px;height:12.562px;line-height:12.562px;text-align:left;white-space:nowrap;overflow:hidden;font-size:8.65px;color:#000;-webkit-text-stroke:0.15px currentColor;color:#1a1a1a;">п. Белая гора</div><div style="position:absolute;left:260.500px;top:675.200px;width:1.000px;height:14.062px;background:#ececec;"></div><div style="position:absolute;left:139.500px;top:676.800px;width:121.200px;height:12.562px;line-height:12.562px;text-align:left;white-space:nowrap;overflow:hidden;font-size:8.65px;color:#000;-webkit-text-stroke:0.15px currentColor;color:#1a1a1a;">Белогоская нефтебаза АО "Саханефтегазсбыт" (б/н)</div><div style="position:absolute;left:384.000px;top:675.200px;width:1.000px;height:14.062px;background:#ececec;"></div><div style="position:absolute;left:263.200px;top:676.800px;width:121.000px;height:12.562px;line-height:12.562px;text-align:left;white-space:nowrap;overflow:hidden;font-size:8.65px;color:#000;-webkit-text-stroke:0.15px currentColor;color:#1a1a1a;">п. Белая гора</div><div style="position:absolute;left:507.300px;top:675.200px;width:1.000px;height:14.062px;background:#ececec;"></div><div style="position:absolute;left:386.700px;top:676.800px;width:120.800px;height:12.562px;line-height:12.562px;text-align:left;white-space:nowrap;overflow:hidden;font-size:8.65px;color:#000;-webkit-text-stroke:0.15px currentColor;color:#1a1a1a;">АО Абыйское (АБЫ 01/007)</div><div style="position:absolute;left:631.300px;top:675.200px;width:1.000px;height:14.062px;background:#ececec;"></div><div style="position:absolute;left:510.000px;top:676.800px;width:121.500px;height:12.562px;line-height:12.562px;text-align:left;white-space:nowrap;overflow:hidden;font-size:8.65px;color:#000;-webkit-text-stroke:0.15px currentColor;color:#1a1a1a;">Сырая нефть</div><div style="position:absolute;left:682.200px;top:675.200px;width:1.000px;height:14.062px;background:#ececec;"></div><div style="position:absolute;left:634.000px;top:676.800px;width:48.400px;height:12.562px;line-height:12.562px;text-align:left;white-space:nowrap;overflow:hidden;font-size:9px;color:#000;-webkit-text-stroke:0.1px currentColor;color:#1a1a1a;">07.03.2022</div><div style="position:absolute;left:734.300px;top:675.200px;width:1.000px;height:14.062px;background:#ececec;"></div><div style="position:absolute;left:683.700px;top:676.800px;width:48.100px;height:12.562px;line-height:12.562px;text-align:right;white-space:nowrap;overflow:hidden;font-size:9px;color:#000;-webkit-text-stroke:0.1px currentColor;color:#1a1a1a;">15</div><div style="position:absolute;left:4.500px;top:688.763px;width:730.300px;height:1.000px;background:#ececec;"></div><div style="position:absolute;left:136.800px;top:689.263px;width:1.000px;height:14.062px;background:#ececec;"></div><div style="position:absolute;left:16.200px;top:690.863px;width:120.800px;height:12.562px;line-height:12.562px;text-align:left;white-space:nowrap;overflow:hidden;font-size:8.65px;color:#000;-webkit-text-stroke:0.15px currentColor;color:#1a1a1a;">п. Белая гора</div><div style="position:absolute;left:260.500px;top:689.263px;width:1.000px;height:14.062px;background:#ececec;"></div><div style="position:absolute;left:139.500px;top:690.863px;width:121.200px;height:12.562px;line-height:12.562px;text-align:left;white-space:nowrap;overflow:hidden;font-size:8.65px;color:#000;-webkit-text-stroke:0.15px currentColor;color:#1a1a1a;">Белогоская нефтебаза АО "Саханефтегазсбыт" (б/н)</div><div style="position:absolute;left:384.000px;top:689.263px;width:1.000px;height:14.062px;background:#ececec;"></div><div style="position:absolute;left:263.200px;top:690.863px;width:121.000px;height:12.562px;line-height:12.562px;text-align:left;white-space:nowrap;overflow:hidden;font-size:8.65px;color:#000;-webkit-text-stroke:0.15px currentColor;color:#1a1a1a;">п. Белая гора</div><div style="position:absolute;left:507.300px;top:689.263px;width:1.000px;height:14.062px;background:#ececec;"></div><div style="position:absolute;left:386.700px;top:690.863px;width:120.800px;height:12.562px;line-height:12.562px;text-align:left;white-space:nowrap;overflow:hidden;font-size:8.65px;color:#000;-webkit-text-stroke:0.15px currentColor;color:#1a1a1a;">АО Абыйское (АБЫ 01/007)</div><div style="position:absolute;left:631.300px;top:689.263px;width:1.000px;height:14.062px;background:#ececec;"></div><div style="position:absolute;left:510.000px;top:690.863px;width:121.500px;height:12.562px;line-height:12.562px;text-align:left;white-space:nowrap;overflow:hidden;font-size:8.65px;color:#000;-webkit-text-stroke:0.15px currentColor;color:#1a1a1a;">Сырая нефть</div><div style="position:absolute;left:682.200px;top:689.263px;width:1.000px;height:14.062px;background:#ececec;"></div><div style="position:absolute;left:634.000px;top:690.863px;width:48.400px;height:12.562px;line-height:12.562px;text-align:left;white-space:nowrap;overflow:hidden;font-size:9px;color:#000;-webkit-text-stroke:0.1px currentColor;color:#1a1a1a;">04.03.2022</div><div style="position:absolute;left:734.300px;top:689.263px;width:1.000px;height:14.062px;background:#ececec;"></div><div style="position:absolute;left:683.700px;top:690.863px;width:48.100px;height:12.562px;line-height:12.562px;text-align:right;white-space:nowrap;overflow:hidden;font-size:9px;color:#000;-webkit-text-stroke:0.1px currentColor;color:#1a1a1a;">7,5</div><div style="position:absolute;left:4.500px;top:702.825px;width:730.300px;height:1.000px;background:#ececec;"></div><div style="position:absolute;left:136.800px;top:703.325px;width:1.000px;height:14.062px;background:#ececec;"></div><div style="position:absolute;left:16.200px;top:704.925px;width:120.800px;height:12.562px;line-height:12.562px;text-align:left;white-space:nowrap;overflow:hidden;font-size:8.65px;color:#000;-webkit-text-stroke:0.15px currentColor;color:#1a1a1a;">п. Белая гора</div><div style="position:absolute;left:260.500px;top:703.325px;width:1.000px;height:14.062px;background:#ececec;"></div><div style="position:absolute;left:139.500px;top:704.925px;width:121.200px;height:12.562px;line-height:12.562px;text-align:left;white-space:nowrap;overflow:hidden;font-size:8.65px;color:#000;-webkit-text-stroke:0.15px currentColor;color:#1a1a1a;">Белогоская нефтебаза АО "Саханефтегазсбыт" (б/н)</div><div style="position:absolute;left:384.000px;top:703.325px;width:1.000px;height:14.062px;background:#ececec;"></div><div style="position:absolute;left:263.200px;top:704.925px;width:121.000px;height:12.562px;line-height:12.562px;text-align:left;white-space:nowrap;overflow:hidden;font-size:8.65px;color:#000;-webkit-text-stroke:0.15px currentColor;color:#1a1a1a;">п. Белая гора</div><div style="position:absolute;left:507.300px;top:703.325px;width:1.000px;height:14.062px;background:#ececec;"></div><div style="position:absolute;left:386.700px;top:704.925px;width:120.800px;height:12.562px;line-height:12.562px;text-align:left;white-space:nowrap;overflow:hidden;font-size:8.65px;color:#000;-webkit-text-stroke:0.15px currentColor;color:#1a1a1a;">АО Абыйское (АБЫ 01/007)</div><div style="position:absolute;left:631.300px;top:703.325px;width:1.000px;height:14.062px;background:#ececec;"></div><div style="position:absolute;left:510.000px;top:704.925px;width:121.500px;height:12.562px;line-height:12.562px;text-align:left;white-space:nowrap;overflow:hidden;font-size:8.65px;color:#000;-webkit-text-stroke:0.15px currentColor;color:#1a1a1a;">Сырая нефть</div><div style="position:absolute;left:682.200px;top:703.325px;width:1.000px;height:14.062px;background:#ececec;"></div><div style="position:absolute;left:634.000px;top:704.925px;width:48.400px;height:12.562px;line-height:12.562px;text-align:left;white-space:nowrap;overflow:hidden;font-size:9px;color:#000;-webkit-text-stroke:0.1px currentColor;color:#1a1a1a;">02.03.2022</div><div style="position:absolute;left:734.300px;top:703.325px;width:1.000px;height:14.062px;background:#ececec;"></div><div style="position:absolute;left:683.700px;top:704.925px;width:48.100px;height:12.562px;line-height:12.562px;text-align:right;white-space:nowrap;overflow:hidden;font-size:9px;color:#000;-webkit-text-stroke:0.1px currentColor;color:#1a1a1a;">7,5</div><div style="position:absolute;left:4.500px;top:716.888px;width:730.300px;height:1.000px;background:#ececec;"></div><div style="position:absolute;left:136.800px;top:717.388px;width:1.000px;height:14.062px;background:#ececec;"></div><div style="position:absolute;left:16.200px;top:718.988px;width:120.800px;height:12.562px;line-height:12.562px;text-align:left;white-space:nowrap;overflow:hidden;font-size:8.65px;color:#000;-webkit-text-stroke:0.15px currentColor;color:#1a1a1a;">п. Белая гора</div><div style="position:absolute;left:260.500px;top:717.388px;width:1.000px;height:14.062px;background:#ececec;"></div><div style="position:absolute;left:139.500px;top:718.988px;width:121.200px;height:12.562px;line-height:12.562px;text-align:left;white-space:nowrap;overflow:hidden;font-size:8.65px;color:#000;-webkit-text-stroke:0.15px currentColor;color:#1a1a1a;">Белогоская нефтебаза АО "Саханефтегазсбыт" (б/н)</div><div style="position:absolute;left:384.000px;top:717.388px;width:1.000px;height:14.062px;background:#ececec;"></div><div style="position:absolute;left:263.200px;top:718.988px;width:121.000px;height:12.562px;line-height:12.562px;text-align:left;white-space:nowrap;overflow:hidden;font-size:8.65px;color:#000;-webkit-text-stroke:0.15px currentColor;color:#1a1a1a;">п. Белая гора</div><div style="position:absolute;left:507.300px;top:717.388px;width:1.000px;height:14.062px;background:#ececec;"></div><div style="position:absolute;left:386.700px;top:718.988px;width:120.800px;height:12.562px;line-height:12.562px;text-align:left;white-space:nowrap;overflow:hidden;font-size:8.65px;color:#000;-webkit-text-stroke:0.15px currentColor;color:#1a1a1a;">АО Абыйское (АБЫ 01/007)</div><div style="position:absolute;left:631.300px;top:717.388px;width:1.000px;height:14.062px;background:#ececec;"></div><div style="position:absolute;left:510.000px;top:718.988px;width:121.500px;height:12.562px;line-height:12.562px;text-align:left;white-space:nowrap;overflow:hidden;font-size:8.65px;color:#000;-webkit-text-stroke:0.15px currentColor;color:#1a1a1a;">Сырая нефть</div><div style="position:absolute;left:682.200px;top:717.388px;width:1.000px;height:14.062px;background:#ececec;"></div><div style="position:absolute;left:634.000px;top:718.988px;width:48.400px;height:12.562px;line-height:12.562px;text-align:left;white-space:nowrap;overflow:hidden;font-size:9px;color:#000;-webkit-text-stroke:0.1px currentColor;color:#1a1a1a;">01.03.2022</div><div style="position:absolute;left:734.300px;top:717.388px;width:1.000px;height:14.062px;background:#ececec;"></div><div style="position:absolute;left:683.700px;top:718.988px;width:48.100px;height:12.562px;line-height:12.562px;text-align:right;white-space:nowrap;overflow:hidden;font-size:9px;color:#000;-webkit-text-stroke:0.1px currentColor;color:#1a1a1a;">7,5</div><div style="position:absolute;left:4.500px;top:730.950px;width:730.300px;height:1.000px;background:#ececec;"></div><div style="position:absolute;left:13.500px;top:562.700px;width:1.000px;height:196.300px;background:#f0f0f0;"></div><div style="position:absolute;left:136.800px;top:562.700px;width:1.000px;height:196.300px;background:#f0f0f0;"></div><div style="position:absolute;left:260.500px;top:562.700px;width:1.000px;height:196.300px;background:#f0f0f0;"></div><div style="position:absolute;left:384.000px;top:562.700px;width:1.000px;height:196.300px;background:#f0f0f0;"></div><div style="position:absolute;left:507.300px;top:562.700px;width:1.000px;height:196.300px;background:#f0f0f0;"></div><div style="position:absolute;left:631.300px;top:562.700px;width:1.000px;height:196.300px;background:#f0f0f0;"></div><div style="position:absolute;left:682.200px;top:562.700px;width:1.000px;height:196.300px;background:#f0f0f0;"></div><div style="position:absolute;left:735.700px;top:527.000px;width:13.000px;height:241.000px;background:#f0f0f0;"></div><div style="position:absolute;left:736.500px;top:541.000px;width:11.400px;height:111.000px;background:#cdcdcd;"></div><svg style="position:absolute;left:737px;top:531px" width="10" height="8"><path d="M1.5 5.5 L5 2 L8.5 5.5" fill="none" stroke="#505050" stroke-width="1.2"/></svg><svg style="position:absolute;left:737px;top:756px" width="10" height="8"><path d="M1.5 2 L5 5.5 L8.5 2" fill="none" stroke="#505050" stroke-width="1.2"/></svg><div style="position:absolute;left:749.200px;top:525.800px;width:1.600px;height:243.200px;background:#8a8a8a;"></div><div style="position:absolute;left:750.800px;top:525.800px;width:745.700px;height:243.200px;border:1px solid #a6a6a6;border-left:none;background:#fff;box-sizing:border-box;"></div><div style="position:absolute;left:760.400px;top:527.000px;width:1.000px;height:18.000px;background:#e2e2e2;"></div><div style="position:absolute;left:966.000px;top:527.000px;width:1.000px;height:18.000px;background:#e2e2e2;"></div><div style="position:absolute;left:1171.000px;top:527.000px;width:1.000px;height:18.000px;background:#e2e2e2;"></div><div style="position:absolute;left:1377.000px;top:527.000px;width:1.000px;height:18.000px;background:#e2e2e2;"></div><div style="position:absolute;left:1428.000px;top:527.000px;width:1.000px;height:18.000px;background:#e2e2e2;"></div><div style="position:absolute;left:1480.000px;top:527.000px;width:1.000px;height:18.000px;background:#e2e2e2;"></div><div style="position:absolute;left:760.900px;top:544.500px;width:719.600px;height:1.000px;background:#e2e2e2;"></div><div style="position:absolute;left:760.90px;top:533.05px;width:205.60px;line-height:9.9px;text-align:center;font-size:9px;font-weight:bold;color:#921818;white-space:nowrap">Нас. пункт</div><div style="position:absolute;left:966.50px;top:533.05px;width:205.00px;line-height:9.9px;text-align:center;font-size:9px;font-weight:bold;color:#921818;white-space:nowrap">Наименование</div><div style="position:absolute;left:1171.50px;top:533.05px;width:206.00px;line-height:9.9px;text-align:center;font-size:9px;font-weight:bold;color:#921818;white-space:nowrap">Вид топлива</div><div style="position:absolute;left:1377.50px;top:533.05px;width:51.00px;line-height:9.9px;text-align:center;font-size:9px;font-weight:bold;color:#921818;white-space:nowrap">Дата</div><div style="position:absolute;left:1428.50px;top:533.05px;width:52.00px;line-height:9.9px;text-align:center;font-size:9px;font-weight:bold;color:#921818;white-space:nowrap">Кол-во</div><div style="position:absolute;left:761.400px;top:545.000px;width:205.100px;height:13.312px;background:#858585;"></div><div style="position:absolute;left:966.000px;top:545.000px;width:1.000px;height:14.062px;background:#ececec;"></div><div style="position:absolute;left:763.100px;top:546.600px;width:203.100px;height:12.562px;line-height:12.562px;text-align:left;white-space:nowrap;overflow:hidden;font-size:8.65px;color:#000;-webkit-text-stroke:0.15px currentColor;color:#ececec;">п. Белая гора</div><div style="position:absolute;left:967.000px;top:545.000px;width:204.500px;height:13.312px;background:#858585;"></div><div style="position:absolute;left:1171.000px;top:545.000px;width:1.000px;height:14.062px;background:#ececec;"></div><div style="position:absolute;left:968.700px;top:546.600px;width:202.500px;height:12.562px;line-height:12.562px;text-align:left;white-space:nowrap;overflow:hidden;font-size:8.65px;color:#000;-webkit-text-stroke:0.15px currentColor;color:#ececec;">АО Абыйское (АБЫ 01/007)</div><div style="position:absolute;left:1172.000px;top:545.000px;width:205.500px;height:13.312px;background:#858585;"></div><div style="position:absolute;left:1377.000px;top:545.000px;width:1.000px;height:14.062px;background:#ececec;"></div><div style="position:absolute;left:1173.700px;top:546.600px;width:203.500px;height:12.562px;line-height:12.562px;text-align:left;white-space:nowrap;overflow:hidden;font-size:8.65px;color:#000;-webkit-text-stroke:0.15px currentColor;color:#ececec;">Сырая нефть</div><div style="position:absolute;left:1378.000px;top:545.000px;width:50.500px;height:13.312px;background:#858585;"></div><div style="position:absolute;left:1428.000px;top:545.000px;width:1.000px;height:14.062px;background:#ececec;"></div><div style="position:absolute;left:1379.700px;top:546.600px;width:48.500px;height:12.562px;line-height:12.562px;text-align:left;white-space:nowrap;overflow:hidden;font-size:9px;color:#000;-webkit-text-stroke:0.1px currentColor;color:#ececec;">21.03.2022</div><div style="position:absolute;left:1429.000px;top:545.000px;width:51.500px;height:13.312px;background:#858585;"></div><div style="position:absolute;left:1480.000px;top:545.000px;width:1.000px;height:14.062px;background:#ececec;"></div><div style="position:absolute;left:1429.500px;top:546.600px;width:48.000px;height:12.562px;line-height:12.562px;text-align:right;white-space:nowrap;overflow:hidden;font-size:9px;color:#000;-webkit-text-stroke:0.1px currentColor;color:#ececec;">7</div><div style="position:absolute;left:751.000px;top:558.562px;width:729.500px;height:1.000px;background:#ececec;"></div><svg style="position:absolute;left:754px;top:548.50px" width="5" height="8"><path d="M0.5 0.5 L4 3.8 L0.5 7Z" fill="#222"/></svg><div style="position:absolute;left:966.000px;top:559.062px;width:1.000px;height:14.062px;background:#ececec;"></div><div style="position:absolute;left:763.100px;top:560.663px;width:203.100px;height:12.562px;line-height:12.562px;text-align:left;white-space:nowrap;overflow:hidden;font-size:8.65px;color:#000;-webkit-text-stroke:0.15px currentColor;color:#1a1a1a;">п. Белая гора</div><div style="position:absolute;left:1171.000px;top:559.062px;width:1.000px;height:14.062px;background:#ececec;"></div><div style="position:absolute;left:968.700px;top:560.663px;width:202.500px;height:12.562px;line-height:12.562px;text-align:left;white-space:nowrap;overflow:hidden;font-size:8.65px;color:#000;-webkit-text-stroke:0.15px currentColor;color:#1a1a1a;">АО Абыйское (АБЫ 01/007)</div><div style="position:absolute;left:1377.000px;top:559.062px;width:1.000px;height:14.062px;background:#ececec;"></div><div style="position:absolute;left:1173.700px;top:560.663px;width:203.500px;height:12.562px;line-height:12.562px;text-align:left;white-space:nowrap;overflow:hidden;font-size:8.65px;color:#000;-webkit-text-stroke:0.15px currentColor;color:#1a1a1a;">Сырая нефть</div><div style="position:absolute;left:1428.000px;top:559.062px;width:1.000px;height:14.062px;background:#ececec;"></div><div style="position:absolute;left:1379.700px;top:560.663px;width:48.500px;height:12.562px;line-height:12.562px;text-align:left;white-space:nowrap;overflow:hidden;font-size:9px;color:#000;-webkit-text-stroke:0.1px currentColor;color:#1a1a1a;">20.03.2022</div><div style="position:absolute;left:1480.000px;top:559.062px;width:1.000px;height:14.062px;background:#ececec;"></div><div style="position:absolute;left:1429.500px;top:560.663px;width:48.000px;height:12.562px;line-height:12.562px;text-align:right;white-space:nowrap;overflow:hidden;font-size:9px;color:#000;-webkit-text-stroke:0.1px currentColor;color:#1a1a1a;">6,845</div><div style="position:absolute;left:751.000px;top:572.625px;width:729.500px;height:1.000px;background:#ececec;"></div><div style="position:absolute;left:966.000px;top:573.125px;width:1.000px;height:14.062px;background:#ececec;"></div><div style="position:absolute;left:763.100px;top:574.725px;width:203.100px;height:12.562px;line-height:12.562px;text-align:left;white-space:nowrap;overflow:hidden;font-size:8.65px;color:#000;-webkit-text-stroke:0.15px currentColor;color:#1a1a1a;">п. Белая гора</div><div style="position:absolute;left:1171.000px;top:573.125px;width:1.000px;height:14.062px;background:#ececec;"></div><div style="position:absolute;left:968.700px;top:574.725px;width:202.500px;height:12.562px;line-height:12.562px;text-align:left;white-space:nowrap;overflow:hidden;font-size:8.65px;color:#000;-webkit-text-stroke:0.15px currentColor;color:#1a1a1a;">АО Абыйское (АБЫ 01/007)</div><div style="position:absolute;left:1377.000px;top:573.125px;width:1.000px;height:14.062px;background:#ececec;"></div><div style="position:absolute;left:1173.700px;top:574.725px;width:203.500px;height:12.562px;line-height:12.562px;text-align:left;white-space:nowrap;overflow:hidden;font-size:8.65px;color:#000;-webkit-text-stroke:0.15px currentColor;color:#1a1a1a;">Сырая нефть</div><div style="position:absolute;left:1428.000px;top:573.125px;width:1.000px;height:14.062px;background:#ececec;"></div><div style="position:absolute;left:1379.700px;top:574.725px;width:48.500px;height:12.562px;line-height:12.562px;text-align:left;white-space:nowrap;overflow:hidden;font-size:9px;color:#000;-webkit-text-stroke:0.1px currentColor;color:#1a1a1a;">19.03.2022</div><div style="position:absolute;left:1480.000px;top:573.125px;width:1.000px;height:14.062px;background:#ececec;"></div><div style="position:absolute;left:1429.500px;top:574.725px;width:48.000px;height:12.562px;line-height:12.562px;text-align:right;white-space:nowrap;overflow:hidden;font-size:9px;color:#000;-webkit-text-stroke:0.1px currentColor;color:#1a1a1a;">7</div><div style="position:absolute;left:751.000px;top:586.688px;width:729.500px;height:1.000px;background:#ececec;"></div><div style="position:absolute;left:966.000px;top:587.188px;width:1.000px;height:14.062px;background:#ececec;"></div><div style="position:absolute;left:763.100px;top:588.788px;width:203.100px;height:12.562px;line-height:12.562px;text-align:left;white-space:nowrap;overflow:hidden;font-size:8.65px;color:#000;-webkit-text-stroke:0.15px currentColor;color:#1a1a1a;">п. Белая гора</div><div style="position:absolute;left:1171.000px;top:587.188px;width:1.000px;height:14.062px;background:#ececec;"></div><div style="position:absolute;left:968.700px;top:588.788px;width:202.500px;height:12.562px;line-height:12.562px;text-align:left;white-space:nowrap;overflow:hidden;font-size:8.65px;color:#000;-webkit-text-stroke:0.15px currentColor;color:#1a1a1a;">АО Абыйское (АБЫ 01/007)</div><div style="position:absolute;left:1377.000px;top:587.188px;width:1.000px;height:14.062px;background:#ececec;"></div><div style="position:absolute;left:1173.700px;top:588.788px;width:203.500px;height:12.562px;line-height:12.562px;text-align:left;white-space:nowrap;overflow:hidden;font-size:8.65px;color:#000;-webkit-text-stroke:0.15px currentColor;color:#1a1a1a;">Сырая нефть</div><div style="position:absolute;left:1428.000px;top:587.188px;width:1.000px;height:14.062px;background:#ececec;"></div><div style="position:absolute;left:1379.700px;top:588.788px;width:48.500px;height:12.562px;line-height:12.562px;text-align:left;white-space:nowrap;overflow:hidden;font-size:9px;color:#000;-webkit-text-stroke:0.1px currentColor;color:#1a1a1a;">18.03.2022</div><div style="position:absolute;left:1480.000px;top:587.188px;width:1.000px;height:14.062px;background:#ececec;"></div><div style="position:absolute;left:1429.500px;top:588.788px;width:48.000px;height:12.562px;line-height:12.562px;text-align:right;white-space:nowrap;overflow:hidden;font-size:9px;color:#000;-webkit-text-stroke:0.1px currentColor;color:#1a1a1a;">6</div><div style="position:absolute;left:751.000px;top:600.750px;width:729.500px;height:1.000px;background:#ececec;"></div><div style="position:absolute;left:966.000px;top:601.250px;width:1.000px;height:14.062px;background:#ececec;"></div><div style="position:absolute;left:763.100px;top:602.850px;width:203.100px;height:12.562px;line-height:12.562px;text-align:left;white-space:nowrap;overflow:hidden;font-size:8.65px;color:#000;-webkit-text-stroke:0.15px currentColor;color:#1a1a1a;">п. Белая гора</div><div style="position:absolute;left:1171.000px;top:601.250px;width:1.000px;height:14.062px;background:#ececec;"></div><div style="position:absolute;left:968.700px;top:602.850px;width:202.500px;height:12.562px;line-height:12.562px;text-align:left;white-space:nowrap;overflow:hidden;font-size:8.65px;color:#000;-webkit-text-stroke:0.15px currentColor;color:#1a1a1a;">АО Абыйское (АБЫ 01/007)</div><div style="position:absolute;left:1377.000px;top:601.250px;width:1.000px;height:14.062px;background:#ececec;"></div><div style="position:absolute;left:1173.700px;top:602.850px;width:203.500px;height:12.562px;line-height:12.562px;text-align:left;white-space:nowrap;overflow:hidden;font-size:8.65px;color:#000;-webkit-text-stroke:0.15px currentColor;color:#1a1a1a;">Сырая нефть</div><div style="position:absolute;left:1428.000px;top:601.250px;width:1.000px;height:14.062px;background:#ececec;"></div><div style="position:absolute;left:1379.700px;top:602.850px;width:48.500px;height:12.562px;line-height:12.562px;text-align:left;white-space:nowrap;overflow:hidden;font-size:9px;color:#000;-webkit-text-stroke:0.1px currentColor;color:#1a1a1a;">17.03.2022</div><div style="position:absolute;left:1480.000px;top:601.250px;width:1.000px;height:14.062px;background:#ececec;"></div><div style="position:absolute;left:1429.500px;top:602.850px;width:48.000px;height:12.562px;line-height:12.562px;text-align:right;white-space:nowrap;overflow:hidden;font-size:9px;color:#000;-webkit-text-stroke:0.1px currentColor;color:#1a1a1a;">6,5</div><div style="position:absolute;left:751.000px;top:614.812px;width:729.500px;height:1.000px;background:#ececec;"></div><div style="position:absolute;left:966.000px;top:615.312px;width:1.000px;height:14.062px;background:#ececec;"></div><div style="position:absolute;left:763.100px;top:616.913px;width:203.100px;height:12.562px;line-height:12.562px;text-align:left;white-space:nowrap;overflow:hidden;font-size:8.65px;color:#000;-webkit-text-stroke:0.15px currentColor;color:#1a1a1a;">п. Белая гора</div><div style="position:absolute;left:1171.000px;top:615.312px;width:1.000px;height:14.062px;background:#ececec;"></div><div style="position:absolute;left:968.700px;top:616.913px;width:202.500px;height:12.562px;line-height:12.562px;text-align:left;white-space:nowrap;overflow:hidden;font-size:8.65px;color:#000;-webkit-text-stroke:0.15px currentColor;color:#1a1a1a;">АО Абыйское (АБЫ 01/007)</div><div style="position:absolute;left:1377.000px;top:615.312px;width:1.000px;height:14.062px;background:#ececec;"></div><div style="position:absolute;left:1173.700px;top:616.913px;width:203.500px;height:12.562px;line-height:12.562px;text-align:left;white-space:nowrap;overflow:hidden;font-size:8.65px;color:#000;-webkit-text-stroke:0.15px currentColor;color:#1a1a1a;">Сырая нефть</div><div style="position:absolute;left:1428.000px;top:615.312px;width:1.000px;height:14.062px;background:#ececec;"></div><div style="position:absolute;left:1379.700px;top:616.913px;width:48.500px;height:12.562px;line-height:12.562px;text-align:left;white-space:nowrap;overflow:hidden;font-size:9px;color:#000;-webkit-text-stroke:0.1px currentColor;color:#1a1a1a;">16.03.2022</div><div style="position:absolute;left:1480.000px;top:615.312px;width:1.000px;height:14.062px;background:#ececec;"></div><div style="position:absolute;left:1429.500px;top:616.913px;width:48.000px;height:12.562px;line-height:12.562px;text-align:right;white-space:nowrap;overflow:hidden;font-size:9px;color:#000;-webkit-text-stroke:0.1px currentColor;color:#1a1a1a;">7</div><div style="position:absolute;left:751.000px;top:628.875px;width:729.500px;height:1.000px;background:#ececec;"></div><div style="position:absolute;left:966.000px;top:629.375px;width:1.000px;height:14.062px;background:#ececec;"></div><div style="position:absolute;left:763.100px;top:630.975px;width:203.100px;height:12.562px;line-height:12.562px;text-align:left;white-space:nowrap;overflow:hidden;font-size:8.65px;color:#000;-webkit-text-stroke:0.15px currentColor;color:#1a1a1a;">п. Белая гора</div><div style="position:absolute;left:1171.000px;top:629.375px;width:1.000px;height:14.062px;background:#ececec;"></div><div style="position:absolute;left:968.700px;top:630.975px;width:202.500px;height:12.562px;line-height:12.562px;text-align:left;white-space:nowrap;overflow:hidden;font-size:8.65px;color:#000;-webkit-text-stroke:0.15px currentColor;color:#1a1a1a;">АО Абыйское (АБЫ 01/007)</div><div style="position:absolute;left:1377.000px;top:629.375px;width:1.000px;height:14.062px;background:#ececec;"></div><div style="position:absolute;left:1173.700px;top:630.975px;width:203.500px;height:12.562px;line-height:12.562px;text-align:left;white-space:nowrap;overflow:hidden;font-size:8.65px;color:#000;-webkit-text-stroke:0.15px currentColor;color:#1a1a1a;">Сырая нефть</div><div style="position:absolute;left:1428.000px;top:629.375px;width:1.000px;height:14.062px;background:#ececec;"></div><div style="position:absolute;left:1379.700px;top:630.975px;width:48.500px;height:12.562px;line-height:12.562px;text-align:left;white-space:nowrap;overflow:hidden;font-size:9px;color:#000;-webkit-text-stroke:0.1px currentColor;color:#1a1a1a;">15.03.2022</div><div style="position:absolute;left:1480.000px;top:629.375px;width:1.000px;height:14.062px;background:#ececec;"></div><div style="position:absolute;left:1429.500px;top:630.975px;width:48.000px;height:12.562px;line-height:12.562px;text-align:right;white-space:nowrap;overflow:hidden;font-size:9px;color:#000;-webkit-text-stroke:0.1px currentColor;color:#1a1a1a;">6,8</div><div style="position:absolute;left:751.000px;top:642.938px;width:729.500px;height:1.000px;background:#ececec;"></div><div style="position:absolute;left:966.000px;top:643.438px;width:1.000px;height:14.062px;background:#ececec;"></div><div style="position:absolute;left:763.100px;top:645.038px;width:203.100px;height:12.562px;line-height:12.562px;text-align:left;white-space:nowrap;overflow:hidden;font-size:8.65px;color:#000;-webkit-text-stroke:0.15px currentColor;color:#1a1a1a;">п. Белая гора</div><div style="position:absolute;left:1171.000px;top:643.438px;width:1.000px;height:14.062px;background:#ececec;"></div><div style="position:absolute;left:968.700px;top:645.038px;width:202.500px;height:12.562px;line-height:12.562px;text-align:left;white-space:nowrap;overflow:hidden;font-size:8.65px;color:#000;-webkit-text-stroke:0.15px currentColor;color:#1a1a1a;">АО Абыйское (АБЫ 01/007)</div><div style="position:absolute;left:1377.000px;top:643.438px;width:1.000px;height:14.062px;background:#ececec;"></div><div style="position:absolute;left:1173.700px;top:645.038px;width:203.500px;height:12.562px;line-height:12.562px;text-align:left;white-space:nowrap;overflow:hidden;font-size:8.65px;color:#000;-webkit-text-stroke:0.15px currentColor;color:#1a1a1a;">Сырая нефть</div><div style="position:absolute;left:1428.000px;top:643.438px;width:1.000px;height:14.062px;background:#ececec;"></div><div style="position:absolute;left:1379.700px;top:645.038px;width:48.500px;height:12.562px;line-height:12.562px;text-align:left;white-space:nowrap;overflow:hidden;font-size:9px;color:#000;-webkit-text-stroke:0.1px currentColor;color:#1a1a1a;">14.03.2022</div><div style="position:absolute;left:1480.000px;top:643.438px;width:1.000px;height:14.062px;background:#ececec;"></div><div style="position:absolute;left:1429.500px;top:645.038px;width:48.000px;height:12.562px;line-height:12.562px;text-align:right;white-space:nowrap;overflow:hidden;font-size:9px;color:#000;-webkit-text-stroke:0.1px currentColor;color:#1a1a1a;">7</div><div style="position:absolute;left:751.000px;top:657.000px;width:729.500px;height:1.000px;background:#ececec;"></div><div style="position:absolute;left:966.000px;top:657.500px;width:1.000px;height:14.062px;background:#ececec;"></div><div style="position:absolute;left:763.100px;top:659.100px;width:203.100px;height:12.562px;line-height:12.562px;text-align:left;white-space:nowrap;overflow:hidden;font-size:8.65px;color:#000;-webkit-text-stroke:0.15px currentColor;color:#1a1a1a;">п. Белая гора</div><div style="position:absolute;left:1171.000px;top:657.500px;width:1.000px;height:14.062px;background:#ececec;"></div><div style="position:absolute;left:968.700px;top:659.100px;width:202.500px;height:12.562px;line-height:12.562px;text-align:left;white-space:nowrap;overflow:hidden;font-size:8.65px;color:#000;-webkit-text-stroke:0.15px currentColor;color:#1a1a1a;">АО Абыйское (АБЫ 01/007)</div><div style="position:absolute;left:1377.000px;top:657.500px;width:1.000px;height:14.062px;background:#ececec;"></div><div style="position:absolute;left:1173.700px;top:659.100px;width:203.500px;height:12.562px;line-height:12.562px;text-align:left;white-space:nowrap;overflow:hidden;font-size:8.65px;color:#000;-webkit-text-stroke:0.15px currentColor;color:#1a1a1a;">Сырая нефть</div><div style="position:absolute;left:1428.000px;top:657.500px;width:1.000px;height:14.062px;background:#ececec;"></div><div style="position:absolute;left:1379.700px;top:659.100px;width:48.500px;height:12.562px;line-height:12.562px;text-align:left;white-space:nowrap;overflow:hidden;font-size:9px;color:#000;-webkit-text-stroke:0.1px currentColor;color:#1a1a1a;">13.03.2022</div><div style="position:absolute;left:1480.000px;top:657.500px;width:1.000px;height:14.062px;background:#ececec;"></div><div style="position:absolute;left:1429.500px;top:659.100px;width:48.000px;height:12.562px;line-height:12.562px;text-align:right;white-space:nowrap;overflow:hidden;font-size:9px;color:#000;-webkit-text-stroke:0.1px currentColor;color:#1a1a1a;">6,1</div><div style="position:absolute;left:751.000px;top:671.062px;width:729.500px;height:1.000px;background:#ececec;"></div><div style="position:absolute;left:966.000px;top:671.562px;width:1.000px;height:14.062px;background:#ececec;"></div><div style="position:absolute;left:763.100px;top:673.163px;width:203.100px;height:12.562px;line-height:12.562px;text-align:left;white-space:nowrap;overflow:hidden;font-size:8.65px;color:#000;-webkit-text-stroke:0.15px currentColor;color:#1a1a1a;">п. Белая гора</div><div style="position:absolute;left:1171.000px;top:671.562px;width:1.000px;height:14.062px;background:#ececec;"></div><div style="position:absolute;left:968.700px;top:673.163px;width:202.500px;height:12.562px;line-height:12.562px;text-align:left;white-space:nowrap;overflow:hidden;font-size:8.65px;color:#000;-webkit-text-stroke:0.15px currentColor;color:#1a1a1a;">АО Абыйское (АБЫ 01/007)</div><div style="position:absolute;left:1377.000px;top:671.562px;width:1.000px;height:14.062px;background:#ececec;"></div><div style="position:absolute;left:1173.700px;top:673.163px;width:203.500px;height:12.562px;line-height:12.562px;text-align:left;white-space:nowrap;overflow:hidden;font-size:8.65px;color:#000;-webkit-text-stroke:0.15px currentColor;color:#1a1a1a;">Сырая нефть</div><div style="position:absolute;left:1428.000px;top:671.562px;width:1.000px;height:14.062px;background:#ececec;"></div><div style="position:absolute;left:1379.700px;top:673.163px;width:48.500px;height:12.562px;line-height:12.562px;text-align:left;white-space:nowrap;overflow:hidden;font-size:9px;color:#000;-webkit-text-stroke:0.1px currentColor;color:#1a1a1a;">12.03.2022</div><div style="position:absolute;left:1480.000px;top:671.562px;width:1.000px;height:14.062px;background:#ececec;"></div><div style="position:absolute;left:1429.500px;top:673.163px;width:48.000px;height:12.562px;line-height:12.562px;text-align:right;white-space:nowrap;overflow:hidden;font-size:9px;color:#000;-webkit-text-stroke:0.1px currentColor;color:#1a1a1a;">7</div><div style="position:absolute;left:751.000px;top:685.125px;width:729.500px;height:1.000px;background:#ececec;"></div><div style="position:absolute;left:966.000px;top:685.625px;width:1.000px;height:14.062px;background:#ececec;"></div><div style="position:absolute;left:763.100px;top:687.225px;width:203.100px;height:12.562px;line-height:12.562px;text-align:left;white-space:nowrap;overflow:hidden;font-size:8.65px;color:#000;-webkit-text-stroke:0.15px currentColor;color:#1a1a1a;">п. Белая гора</div><div style="position:absolute;left:1171.000px;top:685.625px;width:1.000px;height:14.062px;background:#ececec;"></div><div style="position:absolute;left:968.700px;top:687.225px;width:202.500px;height:12.562px;line-height:12.562px;text-align:left;white-space:nowrap;overflow:hidden;font-size:8.65px;color:#000;-webkit-text-stroke:0.15px currentColor;color:#1a1a1a;">АО Абыйское (АБЫ 01/007)</div><div style="position:absolute;left:1377.000px;top:685.625px;width:1.000px;height:14.062px;background:#ececec;"></div><div style="position:absolute;left:1173.700px;top:687.225px;width:203.500px;height:12.562px;line-height:12.562px;text-align:left;white-space:nowrap;overflow:hidden;font-size:8.65px;color:#000;-webkit-text-stroke:0.15px currentColor;color:#1a1a1a;">Сырая нефть</div><div style="position:absolute;left:1428.000px;top:685.625px;width:1.000px;height:14.062px;background:#ececec;"></div><div style="position:absolute;left:1379.700px;top:687.225px;width:48.500px;height:12.562px;line-height:12.562px;text-align:left;white-space:nowrap;overflow:hidden;font-size:9px;color:#000;-webkit-text-stroke:0.1px currentColor;color:#1a1a1a;">11.03.2022</div><div style="position:absolute;left:1480.000px;top:685.625px;width:1.000px;height:14.062px;background:#ececec;"></div><div style="position:absolute;left:1429.500px;top:687.225px;width:48.000px;height:12.562px;line-height:12.562px;text-align:right;white-space:nowrap;overflow:hidden;font-size:9px;color:#000;-webkit-text-stroke:0.1px currentColor;color:#1a1a1a;">7</div><div style="position:absolute;left:751.000px;top:699.188px;width:729.500px;height:1.000px;background:#ececec;"></div><div style="position:absolute;left:966.000px;top:699.688px;width:1.000px;height:14.062px;background:#ececec;"></div><div style="position:absolute;left:763.100px;top:701.288px;width:203.100px;height:12.562px;line-height:12.562px;text-align:left;white-space:nowrap;overflow:hidden;font-size:8.65px;color:#000;-webkit-text-stroke:0.15px currentColor;color:#1a1a1a;">п. Белая гора</div><div style="position:absolute;left:1171.000px;top:699.688px;width:1.000px;height:14.062px;background:#ececec;"></div><div style="position:absolute;left:968.700px;top:701.288px;width:202.500px;height:12.562px;line-height:12.562px;text-align:left;white-space:nowrap;overflow:hidden;font-size:8.65px;color:#000;-webkit-text-stroke:0.15px currentColor;color:#1a1a1a;">АО Абыйское (АБЫ 01/007)</div><div style="position:absolute;left:1377.000px;top:699.688px;width:1.000px;height:14.062px;background:#ececec;"></div><div style="position:absolute;left:1173.700px;top:701.288px;width:203.500px;height:12.562px;line-height:12.562px;text-align:left;white-space:nowrap;overflow:hidden;font-size:8.65px;color:#000;-webkit-text-stroke:0.15px currentColor;color:#1a1a1a;">Сырая нефть</div><div style="position:absolute;left:1428.000px;top:699.688px;width:1.000px;height:14.062px;background:#ececec;"></div><div style="position:absolute;left:1379.700px;top:701.288px;width:48.500px;height:12.562px;line-height:12.562px;text-align:left;white-space:nowrap;overflow:hidden;font-size:9px;color:#000;-webkit-text-stroke:0.1px currentColor;color:#1a1a1a;">10.03.2022</div><div style="position:absolute;left:1480.000px;top:699.688px;width:1.000px;height:14.062px;background:#ececec;"></div><div style="position:absolute;left:1429.500px;top:701.288px;width:48.000px;height:12.562px;line-height:12.562px;text-align:right;white-space:nowrap;overflow:hidden;font-size:9px;color:#000;-webkit-text-stroke:0.1px currentColor;color:#1a1a1a;">7</div><div style="position:absolute;left:751.000px;top:713.250px;width:729.500px;height:1.000px;background:#ececec;"></div><div style="position:absolute;left:966.000px;top:713.750px;width:1.000px;height:14.062px;background:#ececec;"></div><div style="position:absolute;left:763.100px;top:715.350px;width:203.100px;height:12.562px;line-height:12.562px;text-align:left;white-space:nowrap;overflow:hidden;font-size:8.65px;color:#000;-webkit-text-stroke:0.15px currentColor;color:#1a1a1a;">п. Белая гора</div><div style="position:absolute;left:1171.000px;top:713.750px;width:1.000px;height:14.062px;background:#ececec;"></div><div style="position:absolute;left:968.700px;top:715.350px;width:202.500px;height:12.562px;line-height:12.562px;text-align:left;white-space:nowrap;overflow:hidden;font-size:8.65px;color:#000;-webkit-text-stroke:0.15px currentColor;color:#1a1a1a;">АО Абыйское (АБЫ 01/007)</div><div style="position:absolute;left:1377.000px;top:713.750px;width:1.000px;height:14.062px;background:#ececec;"></div><div style="position:absolute;left:1173.700px;top:715.350px;width:203.500px;height:12.562px;line-height:12.562px;text-align:left;white-space:nowrap;overflow:hidden;font-size:8.65px;color:#000;-webkit-text-stroke:0.15px currentColor;color:#1a1a1a;">Сырая нефть</div><div style="position:absolute;left:1428.000px;top:713.750px;width:1.000px;height:14.062px;background:#ececec;"></div><div style="position:absolute;left:1379.700px;top:715.350px;width:48.500px;height:12.562px;line-height:12.562px;text-align:left;white-space:nowrap;overflow:hidden;font-size:9px;color:#000;-webkit-text-stroke:0.1px currentColor;color:#1a1a1a;">09.03.2022</div><div style="position:absolute;left:1480.000px;top:713.750px;width:1.000px;height:14.062px;background:#ececec;"></div><div style="position:absolute;left:1429.500px;top:715.350px;width:48.000px;height:12.562px;line-height:12.562px;text-align:right;white-space:nowrap;overflow:hidden;font-size:9px;color:#000;-webkit-text-stroke:0.1px currentColor;color:#1a1a1a;">7,1</div><div style="position:absolute;left:751.000px;top:727.312px;width:729.500px;height:1.000px;background:#ececec;"></div><div style="position:absolute;left:966.000px;top:727.812px;width:1.000px;height:14.062px;background:#ececec;"></div><div style="position:absolute;left:763.100px;top:729.413px;width:203.100px;height:12.562px;line-height:12.562px;text-align:left;white-space:nowrap;overflow:hidden;font-size:8.65px;color:#000;-webkit-text-stroke:0.15px currentColor;color:#1a1a1a;">п. Белая гора</div><div style="position:absolute;left:1171.000px;top:727.812px;width:1.000px;height:14.062px;background:#ececec;"></div><div style="position:absolute;left:968.700px;top:729.413px;width:202.500px;height:12.562px;line-height:12.562px;text-align:left;white-space:nowrap;overflow:hidden;font-size:8.65px;color:#000;-webkit-text-stroke:0.15px currentColor;color:#1a1a1a;">АО Абыйское (АБЫ 01/007)</div><div style="position:absolute;left:1377.000px;top:727.812px;width:1.000px;height:14.062px;background:#ececec;"></div><div style="position:absolute;left:1173.700px;top:729.413px;width:203.500px;height:12.562px;line-height:12.562px;text-align:left;white-space:nowrap;overflow:hidden;font-size:8.65px;color:#000;-webkit-text-stroke:0.15px currentColor;color:#1a1a1a;">Сырая нефть</div><div style="position:absolute;left:1428.000px;top:727.812px;width:1.000px;height:14.062px;background:#ececec;"></div><div style="position:absolute;left:1379.700px;top:729.413px;width:48.500px;height:12.562px;line-height:12.562px;text-align:left;white-space:nowrap;overflow:hidden;font-size:9px;color:#000;-webkit-text-stroke:0.1px currentColor;color:#1a1a1a;">08.03.2022</div><div style="position:absolute;left:1480.000px;top:727.812px;width:1.000px;height:14.062px;background:#ececec;"></div><div style="position:absolute;left:1429.500px;top:729.413px;width:48.000px;height:12.562px;line-height:12.562px;text-align:right;white-space:nowrap;overflow:hidden;font-size:9px;color:#000;-webkit-text-stroke:0.1px currentColor;color:#1a1a1a;">7,12</div><div style="position:absolute;left:751.000px;top:741.375px;width:729.500px;height:1.000px;background:#ececec;"></div><div style="position:absolute;left:966.000px;top:741.875px;width:1.000px;height:14.062px;background:#ececec;"></div><div style="position:absolute;left:763.100px;top:743.475px;width:203.100px;height:12.562px;line-height:12.562px;text-align:left;white-space:nowrap;overflow:hidden;font-size:8.65px;color:#000;-webkit-text-stroke:0.15px currentColor;color:#1a1a1a;">п. Белая гора</div><div style="position:absolute;left:1171.000px;top:741.875px;width:1.000px;height:14.062px;background:#ececec;"></div><div style="position:absolute;left:968.700px;top:743.475px;width:202.500px;height:12.562px;line-height:12.562px;text-align:left;white-space:nowrap;overflow:hidden;font-size:8.65px;color:#000;-webkit-text-stroke:0.15px currentColor;color:#1a1a1a;">АО Абыйское (АБЫ 01/007)</div><div style="position:absolute;left:1377.000px;top:741.875px;width:1.000px;height:14.062px;background:#ececec;"></div><div style="position:absolute;left:1173.700px;top:743.475px;width:203.500px;height:12.562px;line-height:12.562px;text-align:left;white-space:nowrap;overflow:hidden;font-size:8.65px;color:#000;-webkit-text-stroke:0.15px currentColor;color:#1a1a1a;">Сырая нефть</div><div style="position:absolute;left:1428.000px;top:741.875px;width:1.000px;height:14.062px;background:#ececec;"></div><div style="position:absolute;left:1379.700px;top:743.475px;width:48.500px;height:12.562px;line-height:12.562px;text-align:left;white-space:nowrap;overflow:hidden;font-size:9px;color:#000;-webkit-text-stroke:0.1px currentColor;color:#1a1a1a;">07.03.2022</div><div style="position:absolute;left:1480.000px;top:741.875px;width:1.000px;height:14.062px;background:#ececec;"></div><div style="position:absolute;left:1429.500px;top:743.475px;width:48.000px;height:12.562px;line-height:12.562px;text-align:right;white-space:nowrap;overflow:hidden;font-size:9px;color:#000;-webkit-text-stroke:0.1px currentColor;color:#1a1a1a;">7,1</div><div style="position:absolute;left:751.000px;top:755.438px;width:729.500px;height:1.000px;background:#ececec;"></div><div style="position:absolute;left:1481.500px;top:527.000px;width:14.000px;height:241.000px;background:#f0f0f0;"></div><div style="position:absolute;left:1483.000px;top:541.000px;width:11.400px;height:90.000px;background:#cdcdcd;"></div><svg style="position:absolute;left:1484px;top:531px" width="10" height="8"><path d="M1.5 5.5 L5 2 L8.5 5.5" fill="none" stroke="#505050" stroke-width="1.2"/></svg><svg style="position:absolute;left:1484px;top:756px" width="10" height="8"><path d="M1.5 2 L5 5.5 L8.5 2" fill="none" stroke="#505050" stroke-width="1.2"/></svg><div style="position:absolute;left:4.200px;top:771.300px;width:76.400px;height:22.400px;background:#e1e1e1;border:1px solid #c4c4c4;box-sizing:border-box;"></div><div style="position:absolute;left:14.10px;top:775.50px"><svg width="15" height="14" viewBox="0 0 15 14"><path d="M6.2 3 H11.6 L13.8 5.2 V12.2 Q13.8 13 13 13 H7 Q6.2 13 6.2 12.2Z" fill="#f4f4f4" stroke="#2a2a2a" stroke-width="1.1"/><path d="M8.2 7 L9.6 8.2 M10.8 6.6 L11.4 7.4 M8.6 10 L9 10.6 L10.4 9.6" stroke="#555" stroke-width="0.8" fill="none"/><path d="M0.6 2.2 L3.6 0.4 L7.8 4.4 L5.6 8.6 L4.3 5.8 L1.4 6.2Z" fill="#ee1010"/><path d="M0.6 2.2 L1.4 6.2" stroke="#8a0000" stroke-width="0.8"/></svg></div><div style="position:absolute;left:30.600px;top:772.000px;height:22.400px;line-height:22.400px;text-align:left;white-space:nowrap;overflow:hidden;font-size:9px;color:#1a1a1a;">Добавить</div><div style="position:absolute;left:657.600px;top:771.300px;width:91.800px;height:22.400px;background:#e1e1e1;border:1px solid #c4c4c4;box-sizing:border-box;"></div><div style="position:absolute;left:664.80px;top:775.50px"><svg width="15" height="14" viewBox="0 0 15 14"><path d="M5.6 0.8 H11.2 L13 2.6 V12.4 Q13 13.2 12.2 13.2 H6.4 Q5.6 13.2 5.6 12.4Z" fill="#fafafa" stroke="#2a2a2a" stroke-width="1.1"/><path d="M7.6 4 L11 4 M7.6 9.8 L10.6 9.8" stroke="#666" stroke-width="0.7"/><ellipse cx="4.8" cy="7.6" rx="3.6" ry="4.2" fill="#e8dc50"/><path d="M1.3 4.6 V11.6" stroke="#1a4a2a" stroke-width="1.4"/><path d="M2.5 1.2 L9.8 9.6" stroke="#3a3a20" stroke-width="1.1"/><path d="M5 8.6 L7.4 11.6" stroke="#3a3a20" stroke-width="0.8"/></svg></div><div style="position:absolute;left:680.400px;top:772.000px;height:22.400px;line-height:22.400px;text-align:left;white-space:nowrap;overflow:hidden;font-size:9px;color:#1a1a1a;">Редактировать</div><div style="position:absolute;left:751.300px;top:771.300px;width:76.000px;height:22.400px;background:#e1e1e1;border:1px solid #c4c4c4;box-sizing:border-box;"></div><div style="position:absolute;left:761.20px;top:775.50px"><svg width="15" height="14" viewBox="0 0 15 14"><path d="M6.2 3 H11.6 L13.8 5.2 V12.2 Q13.8 13 13 13 H7 Q6.2 13 6.2 12.2Z" fill="#f4f4f4" stroke="#2a2a2a" stroke-width="1.1"/><path d="M8.2 7 L9.6 8.2 M10.8 6.6 L11.4 7.4 M8.6 10 L9 10.6 L10.4 9.6" stroke="#555" stroke-width="0.8" fill="none"/><path d="M0.6 2.2 L3.6 0.4 L7.8 4.4 L5.6 8.6 L4.3 5.8 L1.4 6.2Z" fill="#ee1010"/><path d="M0.6 2.2 L1.4 6.2" stroke="#8a0000" stroke-width="0.8"/></svg></div><div style="position:absolute;left:777.900px;top:772.000px;height:22.400px;line-height:22.400px;text-align:left;white-space:nowrap;overflow:hidden;font-size:9px;color:#1a1a1a;">Добавить</div><div style="position:absolute;left:1404.200px;top:771.300px;width:92.000px;height:22.400px;background:#e1e1e1;border:1px solid #c4c4c4;box-sizing:border-box;"></div><div style="position:absolute;left:1411.40px;top:775.50px"><svg width="15" height="14" viewBox="0 0 15 14"><path d="M5.6 0.8 H11.2 L13 2.6 V12.4 Q13 13.2 12.2 13.2 H6.4 Q5.6 13.2 5.6 12.4Z" fill="#fafafa" stroke="#2a2a2a" stroke-width="1.1"/><path d="M7.6 4 L11 4 M7.6 9.8 L10.6 9.8" stroke="#666" stroke-width="0.7"/><ellipse cx="4.8" cy="7.6" rx="3.6" ry="4.2" fill="#e8dc50"/><path d="M1.3 4.6 V11.6" stroke="#1a4a2a" stroke-width="1.4"/><path d="M2.5 1.2 L9.8 9.6" stroke="#3a3a20" stroke-width="1.1"/><path d="M5 8.6 L7.4 11.6" stroke="#3a3a20" stroke-width="0.8"/></svg></div><div style="position:absolute;left:1427.000px;top:772.000px;height:22.400px;line-height:22.400px;text-align:left;white-space:nowrap;overflow:hidden;font-size:9px;color:#1a1a1a;">Редактировать</div><div style="position:absolute;left:0.000px;top:66.000px;width:0.800px;height:731.000px;background:#d8d8d8;"></div><div style="position:absolute;left:1497.200px;top:66.000px;width:2.800px;height:731.000px;background:#ececec;"></div><div style="position:absolute;left:0.000px;top:797.000px;width:1500.000px;height:16.000px;background:#f0f0f0;"></div><div style="position:absolute;left:3.000px;top:799.300px;height:14.000px;line-height:14.000px;text-align:left;white-space:nowrap;overflow:hidden;font-size:9.1px;letter-spacing:-0.25px;font-weight:bold;color:#0c2a2a;">Пользователь: Оконешников Н.Д. Вид: Топливное управление</div>
</body></html>
